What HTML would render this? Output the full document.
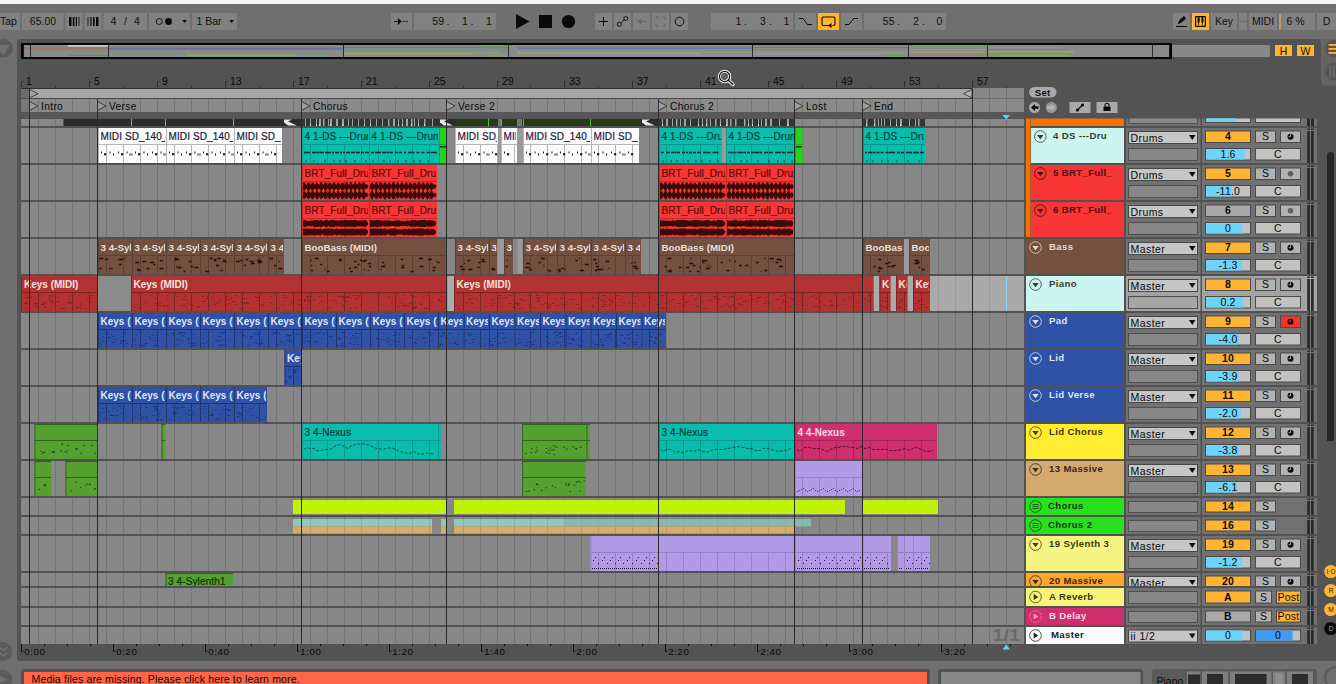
<!DOCTYPE html>
<html><head><meta charset="utf-8"><title>Arrangement</title>
<style>html,body{margin:0;padding:0;background:#6f6f6f;overflow:hidden}svg{display:block}text{font-family:"Liberation Sans",sans-serif}</style>
</head><body>
<svg width="1336" height="684" viewBox="0 0 1336 684" shape-rendering="auto">
<rect x="0" y="0" width="1336" height="684" fill="#6f6f6f"/>
<rect x="0" y="0" width="1336" height="4" fill="#f6f6f6"/>
<path d="M17 658V43a4 4 0 0 1 4-4H1336V661H20a3 3 0 0 1-3-3z" fill="#535353"/>
<path d="M1321 39h15v46.500h-11a4 4 0 0 1-4-4z" fill="#646464"/>
<path d="M1317 39a4 4 0 0 1 4 4v-4z" fill="#646464"/>
<rect x="0" y="13" width="20" height="17" fill="#818181"/>
<text x="0" y="25" font-size="10.5" fill="#111" font-weight="normal" text-anchor="start">Tap</text>
<rect x="22" y="13" width="41.5" height="17" fill="#818181"/>
<text x="43" y="25" font-size="10.5" fill="#111" font-weight="normal" text-anchor="middle">65.00</text>
<rect x="65.5" y="13" width="17" height="17" fill="#818181"/>
<rect x="84.5" y="13" width="17" height="17" fill="#818181"/>
<rect x="69" y="17" width="2.5" height="9" fill="#0a0a0a"/>
<rect x="72.8" y="17" width="1.6" height="9" fill="#0a0a0a"/>
<rect x="75.8" y="17" width="1.2" height="9" fill="#0a0a0a"/>
<rect x="78.6" y="17" width="0.8" height="9" fill="#0a0a0a"/>
<rect x="87.6" y="17" width="0.8" height="9" fill="#0a0a0a"/>
<rect x="90.4" y="17" width="1.2" height="9" fill="#0a0a0a"/>
<rect x="93" y="17" width="1.6" height="9" fill="#0a0a0a"/>
<rect x="96" y="17" width="2.5" height="9" fill="#0a0a0a"/>
<rect x="103.5" y="13" width="43.5" height="17" fill="#818181"/>
<text x="113.5" y="25" font-size="10.5" fill="#111" font-weight="normal" text-anchor="middle">4</text>
<text x="125.5" y="25" font-size="10.5" fill="#111" font-weight="normal" text-anchor="middle">/</text>
<text x="137" y="25" font-size="10.5" fill="#111" font-weight="normal" text-anchor="middle">4</text>
<rect x="149" y="13" width="41" height="17" fill="#818181"/>
<circle cx="159.3" cy="21.5" r="3" fill="none" stroke="#0a0a0a" stroke-width="0.9"/><circle cx="168.5" cy="21.5" r="3.4" fill="#0a0a0a"/>
<path d="M182.3 20h4.6l-2.3 3z" fill="#0a0a0a"/>
<rect x="192" y="13" width="45" height="17" fill="#818181"/>
<text x="196.5" y="25" font-size="10.5" fill="#111" font-weight="normal" text-anchor="start">1 Bar</text>
<path d="M229.3 20h4.6l-2.3 3z" fill="#0a0a0a"/>
<rect x="391" y="13" width="21" height="17" fill="#818181"/>
<path d="M394 21.5h6M398 18.5l3 3l-3 3" stroke="#0a0a0a" stroke-width="1" fill="none"/><path d="M398 18.3l3.6 3.2l-3.6 3.2z" fill="#0a0a0a"/><path d="M403 21.5h2M406 21.5h2" stroke="#0a0a0a" stroke-width="0.8"/>
<rect x="414" y="13" width="82" height="17" fill="#818181"/>
<text x="444" y="25" font-size="10.5" fill="#111" font-weight="normal" text-anchor="end">59</text>
<text x="448" y="25" font-size="10.5" fill="#111" font-weight="normal" text-anchor="middle">.</text>
<text x="465" y="25" font-size="10.5" fill="#111" font-weight="normal" text-anchor="middle">1</text>
<text x="472" y="25" font-size="10.5" fill="#111" font-weight="normal" text-anchor="middle">.</text>
<text x="489" y="25" font-size="10.5" fill="#111" font-weight="normal" text-anchor="middle">1</text>
<path d="M516 14v15l13.5-7.5z" fill="#0a0a0a"/>
<rect x="539" y="15" width="13" height="13" fill="#0a0a0a"/>
<circle cx="568.5" cy="21.5" r="6.6" fill="#0a0a0a"/>
<rect x="595" y="13" width="17" height="17" fill="#818181"/>
<rect x="614" y="13" width="17" height="17" fill="#818181"/>
<rect x="633" y="13" width="17" height="17" fill="#818181"/>
<rect x="652" y="13" width="17" height="17" fill="#818181"/>
<rect x="671" y="13" width="17" height="17" fill="#818181"/>
<path d="M599 21.5h9M603.5 17v9" stroke="#0a0a0a" stroke-width="1" fill="none"/>
<circle cx="619.3" cy="24.3" r="2" fill="none" stroke="#0a0a0a" stroke-width="0.9"/><circle cx="625.8" cy="18.5" r="2" fill="none" stroke="#0a0a0a" stroke-width="0.9"/><path d="M620.7 22.8l3.6-3" stroke="#0a0a0a" stroke-width="0.9"/>
<path d="M638 21.5h8" stroke="#686868" stroke-width="1"/><path d="M637.3 21.5l4-3v6z" fill="#686868"/>
<path d="M656 19.5v-2.5h2.5M662.5 17h2.5v2.5M665 23.5v2.500h-2.5M658.500 26h-2.5v-2.500" stroke="#5f5f5f" stroke-width="0.9" fill="none"/>
<circle cx="679.5" cy="21.500" r="4.300" fill="none" stroke="#0a0a0a" stroke-width="0.9"/>
<rect x="711" y="13" width="82" height="17" fill="#818181"/>
<text x="738.5" y="25" font-size="10.5" fill="#111" font-weight="normal" text-anchor="middle">1</text>
<text x="745.5" y="25" font-size="10.5" fill="#111" font-weight="normal" text-anchor="middle">.</text>
<text x="763" y="25" font-size="10.5" fill="#111" font-weight="normal" text-anchor="middle">3</text>
<text x="770.5" y="25" font-size="10.5" fill="#111" font-weight="normal" text-anchor="middle">.</text>
<text x="786.5" y="25" font-size="10.5" fill="#111" font-weight="normal" text-anchor="middle">1</text>
<rect x="795" y="13" width="21" height="17" fill="#818181"/>
<path d="M799 18.5h4l4.500 6h4.500" stroke="#0a0a0a" stroke-width="1" fill="none"/>
<rect x="818" y="13" width="21" height="17" fill="#ffb532"/>
<path d="M830 25.5h-6.500a1.500 1.500 0 0 1-1.500-1.500v-5.500a1.500 1.500 0 0 1 1.500-1.500h10a1.500 1.500 0 0 1 1.500 1.500v5.500a1.500 1.500 0 0 1-1.500 1.500h-1" stroke="#0a0a0a" stroke-width="1.100" fill="none"/><path d="M828 25.500l3.500-2.500v5z" fill="#0a0a0a"/>
<rect x="841" y="13" width="21" height="17" fill="#818181"/>
<path d="M845 24.500h4l4.500-6h4.500" stroke="#0a0a0a" stroke-width="1" fill="none"/>
<rect x="864" y="13" width="82" height="17" fill="#818181"/>
<text x="894.5" y="25" font-size="10.5" fill="#111" font-weight="normal" text-anchor="end">55</text>
<text x="898.5" y="25" font-size="10.5" fill="#111" font-weight="normal" text-anchor="middle">.</text>
<text x="916" y="25" font-size="10.5" fill="#111" font-weight="normal" text-anchor="middle">2</text>
<text x="923.5" y="25" font-size="10.5" fill="#111" font-weight="normal" text-anchor="middle">.</text>
<text x="939.5" y="25" font-size="10.5" fill="#111" font-weight="normal" text-anchor="middle">0</text>
<rect x="1173" y="13" width="17" height="17" fill="#818181"/>
<path d="M1177.500 24.500l2-4.500l4.500-4l2 2.500l-4.500 4z" fill="#0a0a0a"/><path d="M1176 26.500h11" stroke="#0a0a0a" stroke-width="1"/>
<rect x="1192" y="13" width="17" height="17" fill="#ffb532"/>
<rect x="1195" y="16" width="11" height="11" rx="1" fill="#0a0a0a"/>
<rect x="1196.2" y="17.2" width="8.6" height="8.6" fill="#ffb532"/>
<rect x="1197.6" y="17.2" width="2" height="5.4" fill="#0a0a0a"/>
<rect x="1201.4" y="17.2" width="2" height="5.4" fill="#0a0a0a"/>
<rect x="1198.3" y="22" width="0.7" height="3.8" fill="#0a0a0a"/>
<rect x="1202.1" y="22" width="0.7" height="3.8" fill="#0a0a0a"/>
<rect x="1211" y="13" width="26" height="17" fill="#818181"/>
<text x="1224" y="25" font-size="10.5" fill="#111" font-weight="normal" text-anchor="middle">Key</text>
<rect x="1239" y="13" width="8" height="8" fill="#818181"/>
<rect x="1239" y="22" width="8" height="8" fill="#818181"/>
<rect x="1249" y="13" width="28" height="17" fill="#818181"/>
<text x="1263" y="25" font-size="10.5" fill="#111" font-weight="normal" text-anchor="middle">MIDI</text>
<rect x="1279" y="13" width="36" height="17" fill="#818181"/>
<rect x="1279.5" y="14" width="1" height="15" fill="#ffb532"/>
<text x="1295.5" y="25" font-size="10.5" fill="#111" font-weight="normal" text-anchor="middle">6 %</text>
<rect x="1317" y="13" width="19" height="17" fill="#818181"/>
<text x="1326.5" y="25" font-size="10.5" fill="#111" font-weight="normal" text-anchor="middle">D</text>
<rect x="21" y="43" width="1151" height="16" fill="#000"/>
<rect x="23" y="45" width="1147" height="12" fill="#8a8a8a"/>
<rect x="68" y="45" width="40" height="1.6" fill="#d0d0d0"/>
<rect x="23" y="47.65" width="85" height="0.7" fill="#c25050" fill-opacity="0.85"/>
<rect x="35" y="49.65" width="73" height="0.7" fill="#5aa02e" fill-opacity="0.85"/>
<rect x="68" y="55.15" width="40" height="0.7" fill="#c25050" fill-opacity="0.85"/>
<rect x="108" y="47.65" width="235" height="0.7" fill="#6a62b0" fill-opacity="0.85"/>
<rect x="108" y="48.65" width="235" height="0.7" fill="#3a5aa8" fill-opacity="0.85"/>
<rect x="180" y="53.65" width="120" height="0.7" fill="#6ab04a" fill-opacity="0.85"/>
<rect x="178" y="55.65" width="152" height="0.7" fill="#2ec0b0" fill-opacity="0.85"/>
<rect x="186" y="54.65" width="109" height="0.7" fill="#c0c040" fill-opacity="0.85"/>
<rect x="343" y="47.15" width="165" height="0.7" fill="#c24848" fill-opacity="0.85"/>
<rect x="343" y="48.65" width="165" height="0.7" fill="#888" fill-opacity="0.85"/>
<rect x="343" y="50.65" width="162" height="0.7" fill="#30b8b0" fill-opacity="0.85"/>
<rect x="343" y="52.65" width="157" height="0.7" fill="#a8c030" fill-opacity="0.85"/>
<rect x="343" y="53.65" width="127" height="0.7" fill="#c8a060" fill-opacity="0.85"/>
<rect x="480" y="46.65" width="28" height="0.7" fill="#58b838" fill-opacity="0.85"/>
<rect x="488" y="55.65" width="20" height="0.7" fill="#a8c030" fill-opacity="0.85"/>
<rect x="516" y="46.95" width="236" height="0.7" fill="#6a6ab0" fill-opacity="0.85"/>
<rect x="518" y="48.15" width="234" height="0.7" fill="#4a68b0" fill-opacity="0.85"/>
<rect x="518" y="51.65" width="234" height="0.7" fill="#a8c030" fill-opacity="0.85"/>
<rect x="518" y="53.15" width="182" height="0.7" fill="#d0a868" fill-opacity="0.85"/>
<rect x="560" y="54.65" width="192" height="0.7" fill="#b090d8" fill-opacity="0.85"/>
<rect x="752" y="47.15" width="156" height="0.7" fill="#c24848" fill-opacity="0.85"/>
<rect x="752" y="49.15" width="156" height="0.7" fill="#d06060" fill-opacity="0.85"/>
<rect x="752" y="51.15" width="156" height="0.7" fill="#30b8b0" fill-opacity="0.85"/>
<rect x="752" y="52.65" width="153" height="0.7" fill="#a8c030" fill-opacity="0.85"/>
<rect x="752" y="54.15" width="128" height="0.7" fill="#b090d8" fill-opacity="0.85"/>
<rect x="890" y="56.15" width="18" height="0.7" fill="#58b838" fill-opacity="0.85"/>
<rect x="908" y="46.65" width="79" height="0.7" fill="#58b838" fill-opacity="0.85"/>
<rect x="908" y="49.15" width="79" height="0.7" fill="#b090d8" fill-opacity="0.85"/>
<rect x="908" y="51.65" width="77" height="0.7" fill="#c8c030" fill-opacity="0.85"/>
<rect x="908" y="53.65" width="67" height="0.7" fill="#c080a0" fill-opacity="0.85"/>
<rect x="987" y="46.95" width="73" height="0.7" fill="#60b0b0" fill-opacity="0.85"/>
<rect x="987" y="49.15" width="78" height="0.7" fill="#c05858" fill-opacity="0.85"/>
<rect x="987" y="51.65" width="87" height="0.7" fill="#c8c030" fill-opacity="0.85"/>
<rect x="987" y="54.15" width="85" height="0.7" fill="#58b838" fill-opacity="0.85"/>
<rect x="1000" y="55.65" width="70" height="0.7" fill="#d0a868" fill-opacity="0.85"/>
<rect x="30" y="45" width="1" height="12" fill="#2a2a2a"/>
<rect x="108" y="45" width="1" height="12" fill="#2a2a2a"/>
<rect x="343" y="45" width="1" height="12" fill="#2a2a2a"/>
<rect x="508" y="45" width="1" height="12" fill="#2a2a2a"/>
<rect x="752" y="45" width="1" height="12" fill="#2a2a2a"/>
<rect x="908" y="45" width="1" height="12" fill="#2a2a2a"/>
<rect x="987" y="45" width="1" height="12" fill="#2a2a2a"/>
<rect x="1152" y="45" width="1" height="12" fill="#2a2a2a"/>
<rect x="23" y="45" width="0.8" height="12" fill="#000"/>
<rect x="1169.2" y="45" width="0.8" height="12" fill="#000"/>
<rect x="1172" y="45" width="98" height="12" fill="#888888"/>
<rect x="1275" y="45" width="17" height="11" fill="#ffb532"/>
<text x="1283.5" y="54.5" font-size="10.5" fill="#111" font-weight="normal" text-anchor="middle">H</text>
<rect x="1297" y="45" width="17" height="11" fill="#ffb532"/>
<text x="1305.5" y="54.5" font-size="10.5" fill="#111" font-weight="normal" text-anchor="middle">W</text>
<path d="M21.5 87.500v-6h1.800" stroke="#2e2e2e" stroke-width="1" fill="none"/>
<text x="26" y="85.3" font-size="10.5" fill="#0a0a0a" font-weight="normal" text-anchor="start">1</text>
<path d="M89.5 87.500v-6h1.800" stroke="#2e2e2e" stroke-width="1" fill="none"/>
<text x="94" y="85.3" font-size="10.5" fill="#0a0a0a" font-weight="normal" text-anchor="start">5</text>
<path d="M157.5 87.500v-6h1.800" stroke="#2e2e2e" stroke-width="1" fill="none"/>
<text x="162" y="85.3" font-size="10.5" fill="#0a0a0a" font-weight="normal" text-anchor="start">9</text>
<path d="M225.5 87.500v-6h1.800" stroke="#2e2e2e" stroke-width="1" fill="none"/>
<text x="230" y="85.3" font-size="10.5" fill="#0a0a0a" font-weight="normal" text-anchor="start">13</text>
<path d="M293.5 87.500v-6h1.800" stroke="#2e2e2e" stroke-width="1" fill="none"/>
<text x="298" y="85.3" font-size="10.5" fill="#0a0a0a" font-weight="normal" text-anchor="start">17</text>
<path d="M361.5 87.500v-6h1.800" stroke="#2e2e2e" stroke-width="1" fill="none"/>
<text x="366" y="85.3" font-size="10.5" fill="#0a0a0a" font-weight="normal" text-anchor="start">21</text>
<path d="M429.5 87.500v-6h1.800" stroke="#2e2e2e" stroke-width="1" fill="none"/>
<text x="434" y="85.3" font-size="10.5" fill="#0a0a0a" font-weight="normal" text-anchor="start">25</text>
<path d="M497.5 87.500v-6h1.800" stroke="#2e2e2e" stroke-width="1" fill="none"/>
<text x="502" y="85.3" font-size="10.5" fill="#0a0a0a" font-weight="normal" text-anchor="start">29</text>
<path d="M564.5 87.500v-6h1.800" stroke="#2e2e2e" stroke-width="1" fill="none"/>
<text x="569" y="85.3" font-size="10.5" fill="#0a0a0a" font-weight="normal" text-anchor="start">33</text>
<path d="M632.5 87.500v-6h1.800" stroke="#2e2e2e" stroke-width="1" fill="none"/>
<text x="637" y="85.3" font-size="10.5" fill="#0a0a0a" font-weight="normal" text-anchor="start">37</text>
<path d="M700.5 87.500v-6h1.800" stroke="#2e2e2e" stroke-width="1" fill="none"/>
<text x="705" y="85.3" font-size="10.5" fill="#0a0a0a" font-weight="normal" text-anchor="start">41</text>
<path d="M768.5 87.500v-6h1.800" stroke="#2e2e2e" stroke-width="1" fill="none"/>
<text x="773" y="85.3" font-size="10.5" fill="#0a0a0a" font-weight="normal" text-anchor="start">45</text>
<path d="M836.5 87.500v-6h1.800" stroke="#2e2e2e" stroke-width="1" fill="none"/>
<text x="841" y="85.3" font-size="10.5" fill="#0a0a0a" font-weight="normal" text-anchor="start">49</text>
<path d="M904.5 87.500v-6h1.800" stroke="#2e2e2e" stroke-width="1" fill="none"/>
<text x="909" y="85.3" font-size="10.5" fill="#0a0a0a" font-weight="normal" text-anchor="start">53</text>
<path d="M972.5 87.500v-6h1.800" stroke="#2e2e2e" stroke-width="1" fill="none"/>
<text x="977" y="85.3" font-size="10.5" fill="#0a0a0a" font-weight="normal" text-anchor="start">57</text>
<rect x="55" y="86" width="1" height="1.5" fill="#2a2a2a"/>
<rect x="123" y="86" width="1" height="1.5" fill="#2a2a2a"/>
<rect x="191" y="86" width="1" height="1.5" fill="#2a2a2a"/>
<rect x="259" y="86" width="1" height="1.5" fill="#2a2a2a"/>
<rect x="327" y="86" width="1" height="1.5" fill="#2a2a2a"/>
<rect x="395" y="86" width="1" height="1.5" fill="#2a2a2a"/>
<rect x="463" y="86" width="1" height="1.5" fill="#2a2a2a"/>
<rect x="530" y="86" width="1" height="1.5" fill="#2a2a2a"/>
<rect x="598" y="86" width="1" height="1.5" fill="#2a2a2a"/>
<rect x="666" y="86" width="1" height="1.5" fill="#2a2a2a"/>
<rect x="734" y="86" width="1" height="1.5" fill="#2a2a2a"/>
<rect x="802" y="86" width="1" height="1.5" fill="#2a2a2a"/>
<rect x="870" y="86" width="1" height="1.5" fill="#2a2a2a"/>
<rect x="938" y="86" width="1" height="1.5" fill="#2a2a2a"/>
<rect x="1006" y="86" width="1" height="1.5" fill="#2a2a2a"/>
<rect x="21" y="88" width="951.5" height="1" fill="#2e2e2e"/>
<rect x="21" y="89" width="8.5" height="9.5" fill="#6c6c6c"/>
<rect x="29.5" y="89" width="943" height="9.5" fill="#a6a6a6"/>
<rect x="972.5" y="88" width="51.5" height="10.5" fill="#878787"/>
<rect x="21" y="98" width="951.5" height="1" fill="#4a4a4a"/>
<rect x="21" y="99" width="1003" height="13" fill="#8a8a8a"/>
<rect x="21" y="99" width="8.5" height="13" fill="#787878"/>
<rect x="38" y="99" width="1" height="13" fill="#757575"/>
<rect x="55" y="99" width="1" height="13" fill="#757575"/>
<rect x="72" y="99" width="1" height="13" fill="#757575"/>
<rect x="89" y="99" width="1" height="13" fill="#757575"/>
<rect x="106" y="99" width="1" height="13" fill="#757575"/>
<rect x="123" y="99" width="1" height="13" fill="#757575"/>
<rect x="140" y="99" width="1" height="13" fill="#757575"/>
<rect x="157" y="99" width="1" height="13" fill="#757575"/>
<rect x="174" y="99" width="1" height="13" fill="#757575"/>
<rect x="191" y="99" width="1" height="13" fill="#757575"/>
<rect x="208" y="99" width="1" height="13" fill="#757575"/>
<rect x="225" y="99" width="1" height="13" fill="#757575"/>
<rect x="242" y="99" width="1" height="13" fill="#757575"/>
<rect x="259" y="99" width="1" height="13" fill="#757575"/>
<rect x="276" y="99" width="1" height="13" fill="#757575"/>
<rect x="293" y="99" width="1" height="13" fill="#757575"/>
<rect x="310" y="99" width="1" height="13" fill="#757575"/>
<rect x="327" y="99" width="1" height="13" fill="#757575"/>
<rect x="344" y="99" width="1" height="13" fill="#757575"/>
<rect x="361" y="99" width="1" height="13" fill="#757575"/>
<rect x="378" y="99" width="1" height="13" fill="#757575"/>
<rect x="395" y="99" width="1" height="13" fill="#757575"/>
<rect x="412" y="99" width="1" height="13" fill="#757575"/>
<rect x="429" y="99" width="1" height="13" fill="#757575"/>
<rect x="446" y="99" width="1" height="13" fill="#757575"/>
<rect x="463" y="99" width="1" height="13" fill="#757575"/>
<rect x="480" y="99" width="1" height="13" fill="#757575"/>
<rect x="497" y="99" width="1" height="13" fill="#757575"/>
<rect x="514" y="99" width="1" height="13" fill="#757575"/>
<rect x="530" y="99" width="1" height="13" fill="#757575"/>
<rect x="547" y="99" width="1" height="13" fill="#757575"/>
<rect x="564" y="99" width="1" height="13" fill="#757575"/>
<rect x="581" y="99" width="1" height="13" fill="#757575"/>
<rect x="598" y="99" width="1" height="13" fill="#757575"/>
<rect x="615" y="99" width="1" height="13" fill="#757575"/>
<rect x="632" y="99" width="1" height="13" fill="#757575"/>
<rect x="649" y="99" width="1" height="13" fill="#757575"/>
<rect x="666" y="99" width="1" height="13" fill="#757575"/>
<rect x="683" y="99" width="1" height="13" fill="#757575"/>
<rect x="700" y="99" width="1" height="13" fill="#757575"/>
<rect x="717" y="99" width="1" height="13" fill="#757575"/>
<rect x="734" y="99" width="1" height="13" fill="#757575"/>
<rect x="751" y="99" width="1" height="13" fill="#757575"/>
<rect x="768" y="99" width="1" height="13" fill="#757575"/>
<rect x="785" y="99" width="1" height="13" fill="#757575"/>
<rect x="802" y="99" width="1" height="13" fill="#757575"/>
<rect x="819" y="99" width="1" height="13" fill="#757575"/>
<rect x="836" y="99" width="1" height="13" fill="#757575"/>
<rect x="853" y="99" width="1" height="13" fill="#757575"/>
<rect x="870" y="99" width="1" height="13" fill="#757575"/>
<rect x="887" y="99" width="1" height="13" fill="#757575"/>
<rect x="904" y="99" width="1" height="13" fill="#757575"/>
<rect x="921" y="99" width="1" height="13" fill="#757575"/>
<rect x="938" y="99" width="1" height="13" fill="#757575"/>
<rect x="955" y="99" width="1" height="13" fill="#757575"/>
<rect x="972" y="99" width="1" height="13" fill="#757575"/>
<rect x="989" y="99" width="1" height="13" fill="#757575"/>
<rect x="989" y="88" width="1" height="10.5" fill="#757575"/>
<rect x="1006" y="99" width="1" height="13" fill="#757575"/>
<rect x="1006" y="88" width="1" height="10.5" fill="#757575"/>
<rect x="21" y="112" width="1003" height="6.5" fill="#575757"/>
<rect x="21" y="118.5" width="1003" height="525.5" fill="#515151"/>
<rect x="21" y="119" width="1003" height="7" fill="#878787"/>
<rect x="21" y="128" width="1003" height="35" fill="#878787"/>
<rect x="21" y="165" width="1003" height="35" fill="#878787"/>
<rect x="21" y="202" width="1003" height="35" fill="#878787"/>
<rect x="21" y="239" width="1003" height="35" fill="#878787"/>
<rect x="21" y="276" width="1003" height="35" fill="#878787"/>
<rect x="21" y="313" width="1003" height="35" fill="#878787"/>
<rect x="21" y="350" width="1003" height="35" fill="#878787"/>
<rect x="21" y="387" width="1003" height="35" fill="#878787"/>
<rect x="21" y="424" width="1003" height="35" fill="#878787"/>
<rect x="21" y="461" width="1003" height="35" fill="#878787"/>
<rect x="21" y="498" width="1003" height="17" fill="#878787"/>
<rect x="21" y="517" width="1003" height="17" fill="#878787"/>
<rect x="21" y="536" width="1003" height="35" fill="#878787"/>
<rect x="21" y="573" width="1003" height="13" fill="#878787"/>
<rect x="21" y="588" width="1003" height="18" fill="#878787"/>
<rect x="21" y="608" width="1003" height="17" fill="#878787"/>
<rect x="21" y="627" width="1003" height="17" fill="#878787"/>
<rect x="930" y="276" width="94" height="35" fill="#a9a9a9"/>
<rect x="38" y="119" width="1" height="7" fill="#757575"/>
<rect x="38" y="128" width="1" height="35" fill="#757575"/>
<rect x="38" y="165" width="1" height="35" fill="#757575"/>
<rect x="38" y="202" width="1" height="35" fill="#757575"/>
<rect x="38" y="239" width="1" height="35" fill="#757575"/>
<rect x="38" y="276" width="1" height="35" fill="#757575"/>
<rect x="38" y="313" width="1" height="35" fill="#757575"/>
<rect x="38" y="350" width="1" height="35" fill="#757575"/>
<rect x="38" y="387" width="1" height="35" fill="#757575"/>
<rect x="38" y="424" width="1" height="35" fill="#757575"/>
<rect x="38" y="461" width="1" height="35" fill="#757575"/>
<rect x="38" y="498" width="1" height="17" fill="#757575"/>
<rect x="38" y="517" width="1" height="17" fill="#757575"/>
<rect x="38" y="536" width="1" height="35" fill="#757575"/>
<rect x="38" y="573" width="1" height="13" fill="#757575"/>
<rect x="38" y="588" width="1" height="18" fill="#757575"/>
<rect x="38" y="608" width="1" height="17" fill="#757575"/>
<rect x="38" y="627" width="1" height="17" fill="#757575"/>
<rect x="55" y="119" width="1" height="7" fill="#757575"/>
<rect x="55" y="128" width="1" height="35" fill="#757575"/>
<rect x="55" y="165" width="1" height="35" fill="#757575"/>
<rect x="55" y="202" width="1" height="35" fill="#757575"/>
<rect x="55" y="239" width="1" height="35" fill="#757575"/>
<rect x="55" y="276" width="1" height="35" fill="#757575"/>
<rect x="55" y="313" width="1" height="35" fill="#757575"/>
<rect x="55" y="350" width="1" height="35" fill="#757575"/>
<rect x="55" y="387" width="1" height="35" fill="#757575"/>
<rect x="55" y="424" width="1" height="35" fill="#757575"/>
<rect x="55" y="461" width="1" height="35" fill="#757575"/>
<rect x="55" y="498" width="1" height="17" fill="#757575"/>
<rect x="55" y="517" width="1" height="17" fill="#757575"/>
<rect x="55" y="536" width="1" height="35" fill="#757575"/>
<rect x="55" y="573" width="1" height="13" fill="#757575"/>
<rect x="55" y="588" width="1" height="18" fill="#757575"/>
<rect x="55" y="608" width="1" height="17" fill="#757575"/>
<rect x="55" y="627" width="1" height="17" fill="#757575"/>
<rect x="72" y="119" width="1" height="7" fill="#757575"/>
<rect x="72" y="128" width="1" height="35" fill="#757575"/>
<rect x="72" y="165" width="1" height="35" fill="#757575"/>
<rect x="72" y="202" width="1" height="35" fill="#757575"/>
<rect x="72" y="239" width="1" height="35" fill="#757575"/>
<rect x="72" y="276" width="1" height="35" fill="#757575"/>
<rect x="72" y="313" width="1" height="35" fill="#757575"/>
<rect x="72" y="350" width="1" height="35" fill="#757575"/>
<rect x="72" y="387" width="1" height="35" fill="#757575"/>
<rect x="72" y="424" width="1" height="35" fill="#757575"/>
<rect x="72" y="461" width="1" height="35" fill="#757575"/>
<rect x="72" y="498" width="1" height="17" fill="#757575"/>
<rect x="72" y="517" width="1" height="17" fill="#757575"/>
<rect x="72" y="536" width="1" height="35" fill="#757575"/>
<rect x="72" y="573" width="1" height="13" fill="#757575"/>
<rect x="72" y="588" width="1" height="18" fill="#757575"/>
<rect x="72" y="608" width="1" height="17" fill="#757575"/>
<rect x="72" y="627" width="1" height="17" fill="#757575"/>
<rect x="89" y="119" width="1" height="7" fill="#757575"/>
<rect x="89" y="128" width="1" height="35" fill="#757575"/>
<rect x="89" y="165" width="1" height="35" fill="#757575"/>
<rect x="89" y="202" width="1" height="35" fill="#757575"/>
<rect x="89" y="239" width="1" height="35" fill="#757575"/>
<rect x="89" y="276" width="1" height="35" fill="#757575"/>
<rect x="89" y="313" width="1" height="35" fill="#757575"/>
<rect x="89" y="350" width="1" height="35" fill="#757575"/>
<rect x="89" y="387" width="1" height="35" fill="#757575"/>
<rect x="89" y="424" width="1" height="35" fill="#757575"/>
<rect x="89" y="461" width="1" height="35" fill="#757575"/>
<rect x="89" y="498" width="1" height="17" fill="#757575"/>
<rect x="89" y="517" width="1" height="17" fill="#757575"/>
<rect x="89" y="536" width="1" height="35" fill="#757575"/>
<rect x="89" y="573" width="1" height="13" fill="#757575"/>
<rect x="89" y="588" width="1" height="18" fill="#757575"/>
<rect x="89" y="608" width="1" height="17" fill="#757575"/>
<rect x="89" y="627" width="1" height="17" fill="#757575"/>
<rect x="106" y="119" width="1" height="7" fill="#757575"/>
<rect x="106" y="128" width="1" height="35" fill="#757575"/>
<rect x="106" y="165" width="1" height="35" fill="#757575"/>
<rect x="106" y="202" width="1" height="35" fill="#757575"/>
<rect x="106" y="239" width="1" height="35" fill="#757575"/>
<rect x="106" y="276" width="1" height="35" fill="#757575"/>
<rect x="106" y="313" width="1" height="35" fill="#757575"/>
<rect x="106" y="350" width="1" height="35" fill="#757575"/>
<rect x="106" y="387" width="1" height="35" fill="#757575"/>
<rect x="106" y="424" width="1" height="35" fill="#757575"/>
<rect x="106" y="461" width="1" height="35" fill="#757575"/>
<rect x="106" y="498" width="1" height="17" fill="#757575"/>
<rect x="106" y="517" width="1" height="17" fill="#757575"/>
<rect x="106" y="536" width="1" height="35" fill="#757575"/>
<rect x="106" y="573" width="1" height="13" fill="#757575"/>
<rect x="106" y="588" width="1" height="18" fill="#757575"/>
<rect x="106" y="608" width="1" height="17" fill="#757575"/>
<rect x="106" y="627" width="1" height="17" fill="#757575"/>
<rect x="123" y="119" width="1" height="7" fill="#757575"/>
<rect x="123" y="128" width="1" height="35" fill="#757575"/>
<rect x="123" y="165" width="1" height="35" fill="#757575"/>
<rect x="123" y="202" width="1" height="35" fill="#757575"/>
<rect x="123" y="239" width="1" height="35" fill="#757575"/>
<rect x="123" y="276" width="1" height="35" fill="#757575"/>
<rect x="123" y="313" width="1" height="35" fill="#757575"/>
<rect x="123" y="350" width="1" height="35" fill="#757575"/>
<rect x="123" y="387" width="1" height="35" fill="#757575"/>
<rect x="123" y="424" width="1" height="35" fill="#757575"/>
<rect x="123" y="461" width="1" height="35" fill="#757575"/>
<rect x="123" y="498" width="1" height="17" fill="#757575"/>
<rect x="123" y="517" width="1" height="17" fill="#757575"/>
<rect x="123" y="536" width="1" height="35" fill="#757575"/>
<rect x="123" y="573" width="1" height="13" fill="#757575"/>
<rect x="123" y="588" width="1" height="18" fill="#757575"/>
<rect x="123" y="608" width="1" height="17" fill="#757575"/>
<rect x="123" y="627" width="1" height="17" fill="#757575"/>
<rect x="140" y="119" width="1" height="7" fill="#757575"/>
<rect x="140" y="128" width="1" height="35" fill="#757575"/>
<rect x="140" y="165" width="1" height="35" fill="#757575"/>
<rect x="140" y="202" width="1" height="35" fill="#757575"/>
<rect x="140" y="239" width="1" height="35" fill="#757575"/>
<rect x="140" y="276" width="1" height="35" fill="#757575"/>
<rect x="140" y="313" width="1" height="35" fill="#757575"/>
<rect x="140" y="350" width="1" height="35" fill="#757575"/>
<rect x="140" y="387" width="1" height="35" fill="#757575"/>
<rect x="140" y="424" width="1" height="35" fill="#757575"/>
<rect x="140" y="461" width="1" height="35" fill="#757575"/>
<rect x="140" y="498" width="1" height="17" fill="#757575"/>
<rect x="140" y="517" width="1" height="17" fill="#757575"/>
<rect x="140" y="536" width="1" height="35" fill="#757575"/>
<rect x="140" y="573" width="1" height="13" fill="#757575"/>
<rect x="140" y="588" width="1" height="18" fill="#757575"/>
<rect x="140" y="608" width="1" height="17" fill="#757575"/>
<rect x="140" y="627" width="1" height="17" fill="#757575"/>
<rect x="157" y="119" width="1" height="7" fill="#757575"/>
<rect x="157" y="128" width="1" height="35" fill="#757575"/>
<rect x="157" y="165" width="1" height="35" fill="#757575"/>
<rect x="157" y="202" width="1" height="35" fill="#757575"/>
<rect x="157" y="239" width="1" height="35" fill="#757575"/>
<rect x="157" y="276" width="1" height="35" fill="#757575"/>
<rect x="157" y="313" width="1" height="35" fill="#757575"/>
<rect x="157" y="350" width="1" height="35" fill="#757575"/>
<rect x="157" y="387" width="1" height="35" fill="#757575"/>
<rect x="157" y="424" width="1" height="35" fill="#757575"/>
<rect x="157" y="461" width="1" height="35" fill="#757575"/>
<rect x="157" y="498" width="1" height="17" fill="#757575"/>
<rect x="157" y="517" width="1" height="17" fill="#757575"/>
<rect x="157" y="536" width="1" height="35" fill="#757575"/>
<rect x="157" y="573" width="1" height="13" fill="#757575"/>
<rect x="157" y="588" width="1" height="18" fill="#757575"/>
<rect x="157" y="608" width="1" height="17" fill="#757575"/>
<rect x="157" y="627" width="1" height="17" fill="#757575"/>
<rect x="174" y="119" width="1" height="7" fill="#757575"/>
<rect x="174" y="128" width="1" height="35" fill="#757575"/>
<rect x="174" y="165" width="1" height="35" fill="#757575"/>
<rect x="174" y="202" width="1" height="35" fill="#757575"/>
<rect x="174" y="239" width="1" height="35" fill="#757575"/>
<rect x="174" y="276" width="1" height="35" fill="#757575"/>
<rect x="174" y="313" width="1" height="35" fill="#757575"/>
<rect x="174" y="350" width="1" height="35" fill="#757575"/>
<rect x="174" y="387" width="1" height="35" fill="#757575"/>
<rect x="174" y="424" width="1" height="35" fill="#757575"/>
<rect x="174" y="461" width="1" height="35" fill="#757575"/>
<rect x="174" y="498" width="1" height="17" fill="#757575"/>
<rect x="174" y="517" width="1" height="17" fill="#757575"/>
<rect x="174" y="536" width="1" height="35" fill="#757575"/>
<rect x="174" y="573" width="1" height="13" fill="#757575"/>
<rect x="174" y="588" width="1" height="18" fill="#757575"/>
<rect x="174" y="608" width="1" height="17" fill="#757575"/>
<rect x="174" y="627" width="1" height="17" fill="#757575"/>
<rect x="191" y="119" width="1" height="7" fill="#757575"/>
<rect x="191" y="128" width="1" height="35" fill="#757575"/>
<rect x="191" y="165" width="1" height="35" fill="#757575"/>
<rect x="191" y="202" width="1" height="35" fill="#757575"/>
<rect x="191" y="239" width="1" height="35" fill="#757575"/>
<rect x="191" y="276" width="1" height="35" fill="#757575"/>
<rect x="191" y="313" width="1" height="35" fill="#757575"/>
<rect x="191" y="350" width="1" height="35" fill="#757575"/>
<rect x="191" y="387" width="1" height="35" fill="#757575"/>
<rect x="191" y="424" width="1" height="35" fill="#757575"/>
<rect x="191" y="461" width="1" height="35" fill="#757575"/>
<rect x="191" y="498" width="1" height="17" fill="#757575"/>
<rect x="191" y="517" width="1" height="17" fill="#757575"/>
<rect x="191" y="536" width="1" height="35" fill="#757575"/>
<rect x="191" y="573" width="1" height="13" fill="#757575"/>
<rect x="191" y="588" width="1" height="18" fill="#757575"/>
<rect x="191" y="608" width="1" height="17" fill="#757575"/>
<rect x="191" y="627" width="1" height="17" fill="#757575"/>
<rect x="208" y="119" width="1" height="7" fill="#757575"/>
<rect x="208" y="128" width="1" height="35" fill="#757575"/>
<rect x="208" y="165" width="1" height="35" fill="#757575"/>
<rect x="208" y="202" width="1" height="35" fill="#757575"/>
<rect x="208" y="239" width="1" height="35" fill="#757575"/>
<rect x="208" y="276" width="1" height="35" fill="#757575"/>
<rect x="208" y="313" width="1" height="35" fill="#757575"/>
<rect x="208" y="350" width="1" height="35" fill="#757575"/>
<rect x="208" y="387" width="1" height="35" fill="#757575"/>
<rect x="208" y="424" width="1" height="35" fill="#757575"/>
<rect x="208" y="461" width="1" height="35" fill="#757575"/>
<rect x="208" y="498" width="1" height="17" fill="#757575"/>
<rect x="208" y="517" width="1" height="17" fill="#757575"/>
<rect x="208" y="536" width="1" height="35" fill="#757575"/>
<rect x="208" y="573" width="1" height="13" fill="#757575"/>
<rect x="208" y="588" width="1" height="18" fill="#757575"/>
<rect x="208" y="608" width="1" height="17" fill="#757575"/>
<rect x="208" y="627" width="1" height="17" fill="#757575"/>
<rect x="225" y="119" width="1" height="7" fill="#757575"/>
<rect x="225" y="128" width="1" height="35" fill="#757575"/>
<rect x="225" y="165" width="1" height="35" fill="#757575"/>
<rect x="225" y="202" width="1" height="35" fill="#757575"/>
<rect x="225" y="239" width="1" height="35" fill="#757575"/>
<rect x="225" y="276" width="1" height="35" fill="#757575"/>
<rect x="225" y="313" width="1" height="35" fill="#757575"/>
<rect x="225" y="350" width="1" height="35" fill="#757575"/>
<rect x="225" y="387" width="1" height="35" fill="#757575"/>
<rect x="225" y="424" width="1" height="35" fill="#757575"/>
<rect x="225" y="461" width="1" height="35" fill="#757575"/>
<rect x="225" y="498" width="1" height="17" fill="#757575"/>
<rect x="225" y="517" width="1" height="17" fill="#757575"/>
<rect x="225" y="536" width="1" height="35" fill="#757575"/>
<rect x="225" y="573" width="1" height="13" fill="#757575"/>
<rect x="225" y="588" width="1" height="18" fill="#757575"/>
<rect x="225" y="608" width="1" height="17" fill="#757575"/>
<rect x="225" y="627" width="1" height="17" fill="#757575"/>
<rect x="242" y="119" width="1" height="7" fill="#757575"/>
<rect x="242" y="128" width="1" height="35" fill="#757575"/>
<rect x="242" y="165" width="1" height="35" fill="#757575"/>
<rect x="242" y="202" width="1" height="35" fill="#757575"/>
<rect x="242" y="239" width="1" height="35" fill="#757575"/>
<rect x="242" y="276" width="1" height="35" fill="#757575"/>
<rect x="242" y="313" width="1" height="35" fill="#757575"/>
<rect x="242" y="350" width="1" height="35" fill="#757575"/>
<rect x="242" y="387" width="1" height="35" fill="#757575"/>
<rect x="242" y="424" width="1" height="35" fill="#757575"/>
<rect x="242" y="461" width="1" height="35" fill="#757575"/>
<rect x="242" y="498" width="1" height="17" fill="#757575"/>
<rect x="242" y="517" width="1" height="17" fill="#757575"/>
<rect x="242" y="536" width="1" height="35" fill="#757575"/>
<rect x="242" y="573" width="1" height="13" fill="#757575"/>
<rect x="242" y="588" width="1" height="18" fill="#757575"/>
<rect x="242" y="608" width="1" height="17" fill="#757575"/>
<rect x="242" y="627" width="1" height="17" fill="#757575"/>
<rect x="259" y="119" width="1" height="7" fill="#757575"/>
<rect x="259" y="128" width="1" height="35" fill="#757575"/>
<rect x="259" y="165" width="1" height="35" fill="#757575"/>
<rect x="259" y="202" width="1" height="35" fill="#757575"/>
<rect x="259" y="239" width="1" height="35" fill="#757575"/>
<rect x="259" y="276" width="1" height="35" fill="#757575"/>
<rect x="259" y="313" width="1" height="35" fill="#757575"/>
<rect x="259" y="350" width="1" height="35" fill="#757575"/>
<rect x="259" y="387" width="1" height="35" fill="#757575"/>
<rect x="259" y="424" width="1" height="35" fill="#757575"/>
<rect x="259" y="461" width="1" height="35" fill="#757575"/>
<rect x="259" y="498" width="1" height="17" fill="#757575"/>
<rect x="259" y="517" width="1" height="17" fill="#757575"/>
<rect x="259" y="536" width="1" height="35" fill="#757575"/>
<rect x="259" y="573" width="1" height="13" fill="#757575"/>
<rect x="259" y="588" width="1" height="18" fill="#757575"/>
<rect x="259" y="608" width="1" height="17" fill="#757575"/>
<rect x="259" y="627" width="1" height="17" fill="#757575"/>
<rect x="276" y="119" width="1" height="7" fill="#757575"/>
<rect x="276" y="128" width="1" height="35" fill="#757575"/>
<rect x="276" y="165" width="1" height="35" fill="#757575"/>
<rect x="276" y="202" width="1" height="35" fill="#757575"/>
<rect x="276" y="239" width="1" height="35" fill="#757575"/>
<rect x="276" y="276" width="1" height="35" fill="#757575"/>
<rect x="276" y="313" width="1" height="35" fill="#757575"/>
<rect x="276" y="350" width="1" height="35" fill="#757575"/>
<rect x="276" y="387" width="1" height="35" fill="#757575"/>
<rect x="276" y="424" width="1" height="35" fill="#757575"/>
<rect x="276" y="461" width="1" height="35" fill="#757575"/>
<rect x="276" y="498" width="1" height="17" fill="#757575"/>
<rect x="276" y="517" width="1" height="17" fill="#757575"/>
<rect x="276" y="536" width="1" height="35" fill="#757575"/>
<rect x="276" y="573" width="1" height="13" fill="#757575"/>
<rect x="276" y="588" width="1" height="18" fill="#757575"/>
<rect x="276" y="608" width="1" height="17" fill="#757575"/>
<rect x="276" y="627" width="1" height="17" fill="#757575"/>
<rect x="293" y="119" width="1" height="7" fill="#757575"/>
<rect x="293" y="128" width="1" height="35" fill="#757575"/>
<rect x="293" y="165" width="1" height="35" fill="#757575"/>
<rect x="293" y="202" width="1" height="35" fill="#757575"/>
<rect x="293" y="239" width="1" height="35" fill="#757575"/>
<rect x="293" y="276" width="1" height="35" fill="#757575"/>
<rect x="293" y="313" width="1" height="35" fill="#757575"/>
<rect x="293" y="350" width="1" height="35" fill="#757575"/>
<rect x="293" y="387" width="1" height="35" fill="#757575"/>
<rect x="293" y="424" width="1" height="35" fill="#757575"/>
<rect x="293" y="461" width="1" height="35" fill="#757575"/>
<rect x="293" y="498" width="1" height="17" fill="#757575"/>
<rect x="293" y="517" width="1" height="17" fill="#757575"/>
<rect x="293" y="536" width="1" height="35" fill="#757575"/>
<rect x="293" y="573" width="1" height="13" fill="#757575"/>
<rect x="293" y="588" width="1" height="18" fill="#757575"/>
<rect x="293" y="608" width="1" height="17" fill="#757575"/>
<rect x="293" y="627" width="1" height="17" fill="#757575"/>
<rect x="310" y="119" width="1" height="7" fill="#757575"/>
<rect x="310" y="128" width="1" height="35" fill="#757575"/>
<rect x="310" y="165" width="1" height="35" fill="#757575"/>
<rect x="310" y="202" width="1" height="35" fill="#757575"/>
<rect x="310" y="239" width="1" height="35" fill="#757575"/>
<rect x="310" y="276" width="1" height="35" fill="#757575"/>
<rect x="310" y="313" width="1" height="35" fill="#757575"/>
<rect x="310" y="350" width="1" height="35" fill="#757575"/>
<rect x="310" y="387" width="1" height="35" fill="#757575"/>
<rect x="310" y="424" width="1" height="35" fill="#757575"/>
<rect x="310" y="461" width="1" height="35" fill="#757575"/>
<rect x="310" y="498" width="1" height="17" fill="#757575"/>
<rect x="310" y="517" width="1" height="17" fill="#757575"/>
<rect x="310" y="536" width="1" height="35" fill="#757575"/>
<rect x="310" y="573" width="1" height="13" fill="#757575"/>
<rect x="310" y="588" width="1" height="18" fill="#757575"/>
<rect x="310" y="608" width="1" height="17" fill="#757575"/>
<rect x="310" y="627" width="1" height="17" fill="#757575"/>
<rect x="327" y="119" width="1" height="7" fill="#757575"/>
<rect x="327" y="128" width="1" height="35" fill="#757575"/>
<rect x="327" y="165" width="1" height="35" fill="#757575"/>
<rect x="327" y="202" width="1" height="35" fill="#757575"/>
<rect x="327" y="239" width="1" height="35" fill="#757575"/>
<rect x="327" y="276" width="1" height="35" fill="#757575"/>
<rect x="327" y="313" width="1" height="35" fill="#757575"/>
<rect x="327" y="350" width="1" height="35" fill="#757575"/>
<rect x="327" y="387" width="1" height="35" fill="#757575"/>
<rect x="327" y="424" width="1" height="35" fill="#757575"/>
<rect x="327" y="461" width="1" height="35" fill="#757575"/>
<rect x="327" y="498" width="1" height="17" fill="#757575"/>
<rect x="327" y="517" width="1" height="17" fill="#757575"/>
<rect x="327" y="536" width="1" height="35" fill="#757575"/>
<rect x="327" y="573" width="1" height="13" fill="#757575"/>
<rect x="327" y="588" width="1" height="18" fill="#757575"/>
<rect x="327" y="608" width="1" height="17" fill="#757575"/>
<rect x="327" y="627" width="1" height="17" fill="#757575"/>
<rect x="344" y="119" width="1" height="7" fill="#757575"/>
<rect x="344" y="128" width="1" height="35" fill="#757575"/>
<rect x="344" y="165" width="1" height="35" fill="#757575"/>
<rect x="344" y="202" width="1" height="35" fill="#757575"/>
<rect x="344" y="239" width="1" height="35" fill="#757575"/>
<rect x="344" y="276" width="1" height="35" fill="#757575"/>
<rect x="344" y="313" width="1" height="35" fill="#757575"/>
<rect x="344" y="350" width="1" height="35" fill="#757575"/>
<rect x="344" y="387" width="1" height="35" fill="#757575"/>
<rect x="344" y="424" width="1" height="35" fill="#757575"/>
<rect x="344" y="461" width="1" height="35" fill="#757575"/>
<rect x="344" y="498" width="1" height="17" fill="#757575"/>
<rect x="344" y="517" width="1" height="17" fill="#757575"/>
<rect x="344" y="536" width="1" height="35" fill="#757575"/>
<rect x="344" y="573" width="1" height="13" fill="#757575"/>
<rect x="344" y="588" width="1" height="18" fill="#757575"/>
<rect x="344" y="608" width="1" height="17" fill="#757575"/>
<rect x="344" y="627" width="1" height="17" fill="#757575"/>
<rect x="361" y="119" width="1" height="7" fill="#757575"/>
<rect x="361" y="128" width="1" height="35" fill="#757575"/>
<rect x="361" y="165" width="1" height="35" fill="#757575"/>
<rect x="361" y="202" width="1" height="35" fill="#757575"/>
<rect x="361" y="239" width="1" height="35" fill="#757575"/>
<rect x="361" y="276" width="1" height="35" fill="#757575"/>
<rect x="361" y="313" width="1" height="35" fill="#757575"/>
<rect x="361" y="350" width="1" height="35" fill="#757575"/>
<rect x="361" y="387" width="1" height="35" fill="#757575"/>
<rect x="361" y="424" width="1" height="35" fill="#757575"/>
<rect x="361" y="461" width="1" height="35" fill="#757575"/>
<rect x="361" y="498" width="1" height="17" fill="#757575"/>
<rect x="361" y="517" width="1" height="17" fill="#757575"/>
<rect x="361" y="536" width="1" height="35" fill="#757575"/>
<rect x="361" y="573" width="1" height="13" fill="#757575"/>
<rect x="361" y="588" width="1" height="18" fill="#757575"/>
<rect x="361" y="608" width="1" height="17" fill="#757575"/>
<rect x="361" y="627" width="1" height="17" fill="#757575"/>
<rect x="378" y="119" width="1" height="7" fill="#757575"/>
<rect x="378" y="128" width="1" height="35" fill="#757575"/>
<rect x="378" y="165" width="1" height="35" fill="#757575"/>
<rect x="378" y="202" width="1" height="35" fill="#757575"/>
<rect x="378" y="239" width="1" height="35" fill="#757575"/>
<rect x="378" y="276" width="1" height="35" fill="#757575"/>
<rect x="378" y="313" width="1" height="35" fill="#757575"/>
<rect x="378" y="350" width="1" height="35" fill="#757575"/>
<rect x="378" y="387" width="1" height="35" fill="#757575"/>
<rect x="378" y="424" width="1" height="35" fill="#757575"/>
<rect x="378" y="461" width="1" height="35" fill="#757575"/>
<rect x="378" y="498" width="1" height="17" fill="#757575"/>
<rect x="378" y="517" width="1" height="17" fill="#757575"/>
<rect x="378" y="536" width="1" height="35" fill="#757575"/>
<rect x="378" y="573" width="1" height="13" fill="#757575"/>
<rect x="378" y="588" width="1" height="18" fill="#757575"/>
<rect x="378" y="608" width="1" height="17" fill="#757575"/>
<rect x="378" y="627" width="1" height="17" fill="#757575"/>
<rect x="395" y="119" width="1" height="7" fill="#757575"/>
<rect x="395" y="128" width="1" height="35" fill="#757575"/>
<rect x="395" y="165" width="1" height="35" fill="#757575"/>
<rect x="395" y="202" width="1" height="35" fill="#757575"/>
<rect x="395" y="239" width="1" height="35" fill="#757575"/>
<rect x="395" y="276" width="1" height="35" fill="#757575"/>
<rect x="395" y="313" width="1" height="35" fill="#757575"/>
<rect x="395" y="350" width="1" height="35" fill="#757575"/>
<rect x="395" y="387" width="1" height="35" fill="#757575"/>
<rect x="395" y="424" width="1" height="35" fill="#757575"/>
<rect x="395" y="461" width="1" height="35" fill="#757575"/>
<rect x="395" y="498" width="1" height="17" fill="#757575"/>
<rect x="395" y="517" width="1" height="17" fill="#757575"/>
<rect x="395" y="536" width="1" height="35" fill="#757575"/>
<rect x="395" y="573" width="1" height="13" fill="#757575"/>
<rect x="395" y="588" width="1" height="18" fill="#757575"/>
<rect x="395" y="608" width="1" height="17" fill="#757575"/>
<rect x="395" y="627" width="1" height="17" fill="#757575"/>
<rect x="412" y="119" width="1" height="7" fill="#757575"/>
<rect x="412" y="128" width="1" height="35" fill="#757575"/>
<rect x="412" y="165" width="1" height="35" fill="#757575"/>
<rect x="412" y="202" width="1" height="35" fill="#757575"/>
<rect x="412" y="239" width="1" height="35" fill="#757575"/>
<rect x="412" y="276" width="1" height="35" fill="#757575"/>
<rect x="412" y="313" width="1" height="35" fill="#757575"/>
<rect x="412" y="350" width="1" height="35" fill="#757575"/>
<rect x="412" y="387" width="1" height="35" fill="#757575"/>
<rect x="412" y="424" width="1" height="35" fill="#757575"/>
<rect x="412" y="461" width="1" height="35" fill="#757575"/>
<rect x="412" y="498" width="1" height="17" fill="#757575"/>
<rect x="412" y="517" width="1" height="17" fill="#757575"/>
<rect x="412" y="536" width="1" height="35" fill="#757575"/>
<rect x="412" y="573" width="1" height="13" fill="#757575"/>
<rect x="412" y="588" width="1" height="18" fill="#757575"/>
<rect x="412" y="608" width="1" height="17" fill="#757575"/>
<rect x="412" y="627" width="1" height="17" fill="#757575"/>
<rect x="429" y="119" width="1" height="7" fill="#757575"/>
<rect x="429" y="128" width="1" height="35" fill="#757575"/>
<rect x="429" y="165" width="1" height="35" fill="#757575"/>
<rect x="429" y="202" width="1" height="35" fill="#757575"/>
<rect x="429" y="239" width="1" height="35" fill="#757575"/>
<rect x="429" y="276" width="1" height="35" fill="#757575"/>
<rect x="429" y="313" width="1" height="35" fill="#757575"/>
<rect x="429" y="350" width="1" height="35" fill="#757575"/>
<rect x="429" y="387" width="1" height="35" fill="#757575"/>
<rect x="429" y="424" width="1" height="35" fill="#757575"/>
<rect x="429" y="461" width="1" height="35" fill="#757575"/>
<rect x="429" y="498" width="1" height="17" fill="#757575"/>
<rect x="429" y="517" width="1" height="17" fill="#757575"/>
<rect x="429" y="536" width="1" height="35" fill="#757575"/>
<rect x="429" y="573" width="1" height="13" fill="#757575"/>
<rect x="429" y="588" width="1" height="18" fill="#757575"/>
<rect x="429" y="608" width="1" height="17" fill="#757575"/>
<rect x="429" y="627" width="1" height="17" fill="#757575"/>
<rect x="446" y="119" width="1" height="7" fill="#757575"/>
<rect x="446" y="128" width="1" height="35" fill="#757575"/>
<rect x="446" y="165" width="1" height="35" fill="#757575"/>
<rect x="446" y="202" width="1" height="35" fill="#757575"/>
<rect x="446" y="239" width="1" height="35" fill="#757575"/>
<rect x="446" y="276" width="1" height="35" fill="#757575"/>
<rect x="446" y="313" width="1" height="35" fill="#757575"/>
<rect x="446" y="350" width="1" height="35" fill="#757575"/>
<rect x="446" y="387" width="1" height="35" fill="#757575"/>
<rect x="446" y="424" width="1" height="35" fill="#757575"/>
<rect x="446" y="461" width="1" height="35" fill="#757575"/>
<rect x="446" y="498" width="1" height="17" fill="#757575"/>
<rect x="446" y="517" width="1" height="17" fill="#757575"/>
<rect x="446" y="536" width="1" height="35" fill="#757575"/>
<rect x="446" y="573" width="1" height="13" fill="#757575"/>
<rect x="446" y="588" width="1" height="18" fill="#757575"/>
<rect x="446" y="608" width="1" height="17" fill="#757575"/>
<rect x="446" y="627" width="1" height="17" fill="#757575"/>
<rect x="463" y="119" width="1" height="7" fill="#757575"/>
<rect x="463" y="128" width="1" height="35" fill="#757575"/>
<rect x="463" y="165" width="1" height="35" fill="#757575"/>
<rect x="463" y="202" width="1" height="35" fill="#757575"/>
<rect x="463" y="239" width="1" height="35" fill="#757575"/>
<rect x="463" y="276" width="1" height="35" fill="#757575"/>
<rect x="463" y="313" width="1" height="35" fill="#757575"/>
<rect x="463" y="350" width="1" height="35" fill="#757575"/>
<rect x="463" y="387" width="1" height="35" fill="#757575"/>
<rect x="463" y="424" width="1" height="35" fill="#757575"/>
<rect x="463" y="461" width="1" height="35" fill="#757575"/>
<rect x="463" y="498" width="1" height="17" fill="#757575"/>
<rect x="463" y="517" width="1" height="17" fill="#757575"/>
<rect x="463" y="536" width="1" height="35" fill="#757575"/>
<rect x="463" y="573" width="1" height="13" fill="#757575"/>
<rect x="463" y="588" width="1" height="18" fill="#757575"/>
<rect x="463" y="608" width="1" height="17" fill="#757575"/>
<rect x="463" y="627" width="1" height="17" fill="#757575"/>
<rect x="480" y="119" width="1" height="7" fill="#757575"/>
<rect x="480" y="128" width="1" height="35" fill="#757575"/>
<rect x="480" y="165" width="1" height="35" fill="#757575"/>
<rect x="480" y="202" width="1" height="35" fill="#757575"/>
<rect x="480" y="239" width="1" height="35" fill="#757575"/>
<rect x="480" y="276" width="1" height="35" fill="#757575"/>
<rect x="480" y="313" width="1" height="35" fill="#757575"/>
<rect x="480" y="350" width="1" height="35" fill="#757575"/>
<rect x="480" y="387" width="1" height="35" fill="#757575"/>
<rect x="480" y="424" width="1" height="35" fill="#757575"/>
<rect x="480" y="461" width="1" height="35" fill="#757575"/>
<rect x="480" y="498" width="1" height="17" fill="#757575"/>
<rect x="480" y="517" width="1" height="17" fill="#757575"/>
<rect x="480" y="536" width="1" height="35" fill="#757575"/>
<rect x="480" y="573" width="1" height="13" fill="#757575"/>
<rect x="480" y="588" width="1" height="18" fill="#757575"/>
<rect x="480" y="608" width="1" height="17" fill="#757575"/>
<rect x="480" y="627" width="1" height="17" fill="#757575"/>
<rect x="497" y="119" width="1" height="7" fill="#757575"/>
<rect x="497" y="128" width="1" height="35" fill="#757575"/>
<rect x="497" y="165" width="1" height="35" fill="#757575"/>
<rect x="497" y="202" width="1" height="35" fill="#757575"/>
<rect x="497" y="239" width="1" height="35" fill="#757575"/>
<rect x="497" y="276" width="1" height="35" fill="#757575"/>
<rect x="497" y="313" width="1" height="35" fill="#757575"/>
<rect x="497" y="350" width="1" height="35" fill="#757575"/>
<rect x="497" y="387" width="1" height="35" fill="#757575"/>
<rect x="497" y="424" width="1" height="35" fill="#757575"/>
<rect x="497" y="461" width="1" height="35" fill="#757575"/>
<rect x="497" y="498" width="1" height="17" fill="#757575"/>
<rect x="497" y="517" width="1" height="17" fill="#757575"/>
<rect x="497" y="536" width="1" height="35" fill="#757575"/>
<rect x="497" y="573" width="1" height="13" fill="#757575"/>
<rect x="497" y="588" width="1" height="18" fill="#757575"/>
<rect x="497" y="608" width="1" height="17" fill="#757575"/>
<rect x="497" y="627" width="1" height="17" fill="#757575"/>
<rect x="514" y="119" width="1" height="7" fill="#757575"/>
<rect x="514" y="128" width="1" height="35" fill="#757575"/>
<rect x="514" y="165" width="1" height="35" fill="#757575"/>
<rect x="514" y="202" width="1" height="35" fill="#757575"/>
<rect x="514" y="239" width="1" height="35" fill="#757575"/>
<rect x="514" y="276" width="1" height="35" fill="#757575"/>
<rect x="514" y="313" width="1" height="35" fill="#757575"/>
<rect x="514" y="350" width="1" height="35" fill="#757575"/>
<rect x="514" y="387" width="1" height="35" fill="#757575"/>
<rect x="514" y="424" width="1" height="35" fill="#757575"/>
<rect x="514" y="461" width="1" height="35" fill="#757575"/>
<rect x="514" y="498" width="1" height="17" fill="#757575"/>
<rect x="514" y="517" width="1" height="17" fill="#757575"/>
<rect x="514" y="536" width="1" height="35" fill="#757575"/>
<rect x="514" y="573" width="1" height="13" fill="#757575"/>
<rect x="514" y="588" width="1" height="18" fill="#757575"/>
<rect x="514" y="608" width="1" height="17" fill="#757575"/>
<rect x="514" y="627" width="1" height="17" fill="#757575"/>
<rect x="530" y="119" width="1" height="7" fill="#757575"/>
<rect x="530" y="128" width="1" height="35" fill="#757575"/>
<rect x="530" y="165" width="1" height="35" fill="#757575"/>
<rect x="530" y="202" width="1" height="35" fill="#757575"/>
<rect x="530" y="239" width="1" height="35" fill="#757575"/>
<rect x="530" y="276" width="1" height="35" fill="#757575"/>
<rect x="530" y="313" width="1" height="35" fill="#757575"/>
<rect x="530" y="350" width="1" height="35" fill="#757575"/>
<rect x="530" y="387" width="1" height="35" fill="#757575"/>
<rect x="530" y="424" width="1" height="35" fill="#757575"/>
<rect x="530" y="461" width="1" height="35" fill="#757575"/>
<rect x="530" y="498" width="1" height="17" fill="#757575"/>
<rect x="530" y="517" width="1" height="17" fill="#757575"/>
<rect x="530" y="536" width="1" height="35" fill="#757575"/>
<rect x="530" y="573" width="1" height="13" fill="#757575"/>
<rect x="530" y="588" width="1" height="18" fill="#757575"/>
<rect x="530" y="608" width="1" height="17" fill="#757575"/>
<rect x="530" y="627" width="1" height="17" fill="#757575"/>
<rect x="547" y="119" width="1" height="7" fill="#757575"/>
<rect x="547" y="128" width="1" height="35" fill="#757575"/>
<rect x="547" y="165" width="1" height="35" fill="#757575"/>
<rect x="547" y="202" width="1" height="35" fill="#757575"/>
<rect x="547" y="239" width="1" height="35" fill="#757575"/>
<rect x="547" y="276" width="1" height="35" fill="#757575"/>
<rect x="547" y="313" width="1" height="35" fill="#757575"/>
<rect x="547" y="350" width="1" height="35" fill="#757575"/>
<rect x="547" y="387" width="1" height="35" fill="#757575"/>
<rect x="547" y="424" width="1" height="35" fill="#757575"/>
<rect x="547" y="461" width="1" height="35" fill="#757575"/>
<rect x="547" y="498" width="1" height="17" fill="#757575"/>
<rect x="547" y="517" width="1" height="17" fill="#757575"/>
<rect x="547" y="536" width="1" height="35" fill="#757575"/>
<rect x="547" y="573" width="1" height="13" fill="#757575"/>
<rect x="547" y="588" width="1" height="18" fill="#757575"/>
<rect x="547" y="608" width="1" height="17" fill="#757575"/>
<rect x="547" y="627" width="1" height="17" fill="#757575"/>
<rect x="564" y="119" width="1" height="7" fill="#757575"/>
<rect x="564" y="128" width="1" height="35" fill="#757575"/>
<rect x="564" y="165" width="1" height="35" fill="#757575"/>
<rect x="564" y="202" width="1" height="35" fill="#757575"/>
<rect x="564" y="239" width="1" height="35" fill="#757575"/>
<rect x="564" y="276" width="1" height="35" fill="#757575"/>
<rect x="564" y="313" width="1" height="35" fill="#757575"/>
<rect x="564" y="350" width="1" height="35" fill="#757575"/>
<rect x="564" y="387" width="1" height="35" fill="#757575"/>
<rect x="564" y="424" width="1" height="35" fill="#757575"/>
<rect x="564" y="461" width="1" height="35" fill="#757575"/>
<rect x="564" y="498" width="1" height="17" fill="#757575"/>
<rect x="564" y="517" width="1" height="17" fill="#757575"/>
<rect x="564" y="536" width="1" height="35" fill="#757575"/>
<rect x="564" y="573" width="1" height="13" fill="#757575"/>
<rect x="564" y="588" width="1" height="18" fill="#757575"/>
<rect x="564" y="608" width="1" height="17" fill="#757575"/>
<rect x="564" y="627" width="1" height="17" fill="#757575"/>
<rect x="581" y="119" width="1" height="7" fill="#757575"/>
<rect x="581" y="128" width="1" height="35" fill="#757575"/>
<rect x="581" y="165" width="1" height="35" fill="#757575"/>
<rect x="581" y="202" width="1" height="35" fill="#757575"/>
<rect x="581" y="239" width="1" height="35" fill="#757575"/>
<rect x="581" y="276" width="1" height="35" fill="#757575"/>
<rect x="581" y="313" width="1" height="35" fill="#757575"/>
<rect x="581" y="350" width="1" height="35" fill="#757575"/>
<rect x="581" y="387" width="1" height="35" fill="#757575"/>
<rect x="581" y="424" width="1" height="35" fill="#757575"/>
<rect x="581" y="461" width="1" height="35" fill="#757575"/>
<rect x="581" y="498" width="1" height="17" fill="#757575"/>
<rect x="581" y="517" width="1" height="17" fill="#757575"/>
<rect x="581" y="536" width="1" height="35" fill="#757575"/>
<rect x="581" y="573" width="1" height="13" fill="#757575"/>
<rect x="581" y="588" width="1" height="18" fill="#757575"/>
<rect x="581" y="608" width="1" height="17" fill="#757575"/>
<rect x="581" y="627" width="1" height="17" fill="#757575"/>
<rect x="598" y="119" width="1" height="7" fill="#757575"/>
<rect x="598" y="128" width="1" height="35" fill="#757575"/>
<rect x="598" y="165" width="1" height="35" fill="#757575"/>
<rect x="598" y="202" width="1" height="35" fill="#757575"/>
<rect x="598" y="239" width="1" height="35" fill="#757575"/>
<rect x="598" y="276" width="1" height="35" fill="#757575"/>
<rect x="598" y="313" width="1" height="35" fill="#757575"/>
<rect x="598" y="350" width="1" height="35" fill="#757575"/>
<rect x="598" y="387" width="1" height="35" fill="#757575"/>
<rect x="598" y="424" width="1" height="35" fill="#757575"/>
<rect x="598" y="461" width="1" height="35" fill="#757575"/>
<rect x="598" y="498" width="1" height="17" fill="#757575"/>
<rect x="598" y="517" width="1" height="17" fill="#757575"/>
<rect x="598" y="536" width="1" height="35" fill="#757575"/>
<rect x="598" y="573" width="1" height="13" fill="#757575"/>
<rect x="598" y="588" width="1" height="18" fill="#757575"/>
<rect x="598" y="608" width="1" height="17" fill="#757575"/>
<rect x="598" y="627" width="1" height="17" fill="#757575"/>
<rect x="615" y="119" width="1" height="7" fill="#757575"/>
<rect x="615" y="128" width="1" height="35" fill="#757575"/>
<rect x="615" y="165" width="1" height="35" fill="#757575"/>
<rect x="615" y="202" width="1" height="35" fill="#757575"/>
<rect x="615" y="239" width="1" height="35" fill="#757575"/>
<rect x="615" y="276" width="1" height="35" fill="#757575"/>
<rect x="615" y="313" width="1" height="35" fill="#757575"/>
<rect x="615" y="350" width="1" height="35" fill="#757575"/>
<rect x="615" y="387" width="1" height="35" fill="#757575"/>
<rect x="615" y="424" width="1" height="35" fill="#757575"/>
<rect x="615" y="461" width="1" height="35" fill="#757575"/>
<rect x="615" y="498" width="1" height="17" fill="#757575"/>
<rect x="615" y="517" width="1" height="17" fill="#757575"/>
<rect x="615" y="536" width="1" height="35" fill="#757575"/>
<rect x="615" y="573" width="1" height="13" fill="#757575"/>
<rect x="615" y="588" width="1" height="18" fill="#757575"/>
<rect x="615" y="608" width="1" height="17" fill="#757575"/>
<rect x="615" y="627" width="1" height="17" fill="#757575"/>
<rect x="632" y="119" width="1" height="7" fill="#757575"/>
<rect x="632" y="128" width="1" height="35" fill="#757575"/>
<rect x="632" y="165" width="1" height="35" fill="#757575"/>
<rect x="632" y="202" width="1" height="35" fill="#757575"/>
<rect x="632" y="239" width="1" height="35" fill="#757575"/>
<rect x="632" y="276" width="1" height="35" fill="#757575"/>
<rect x="632" y="313" width="1" height="35" fill="#757575"/>
<rect x="632" y="350" width="1" height="35" fill="#757575"/>
<rect x="632" y="387" width="1" height="35" fill="#757575"/>
<rect x="632" y="424" width="1" height="35" fill="#757575"/>
<rect x="632" y="461" width="1" height="35" fill="#757575"/>
<rect x="632" y="498" width="1" height="17" fill="#757575"/>
<rect x="632" y="517" width="1" height="17" fill="#757575"/>
<rect x="632" y="536" width="1" height="35" fill="#757575"/>
<rect x="632" y="573" width="1" height="13" fill="#757575"/>
<rect x="632" y="588" width="1" height="18" fill="#757575"/>
<rect x="632" y="608" width="1" height="17" fill="#757575"/>
<rect x="632" y="627" width="1" height="17" fill="#757575"/>
<rect x="649" y="119" width="1" height="7" fill="#757575"/>
<rect x="649" y="128" width="1" height="35" fill="#757575"/>
<rect x="649" y="165" width="1" height="35" fill="#757575"/>
<rect x="649" y="202" width="1" height="35" fill="#757575"/>
<rect x="649" y="239" width="1" height="35" fill="#757575"/>
<rect x="649" y="276" width="1" height="35" fill="#757575"/>
<rect x="649" y="313" width="1" height="35" fill="#757575"/>
<rect x="649" y="350" width="1" height="35" fill="#757575"/>
<rect x="649" y="387" width="1" height="35" fill="#757575"/>
<rect x="649" y="424" width="1" height="35" fill="#757575"/>
<rect x="649" y="461" width="1" height="35" fill="#757575"/>
<rect x="649" y="498" width="1" height="17" fill="#757575"/>
<rect x="649" y="517" width="1" height="17" fill="#757575"/>
<rect x="649" y="536" width="1" height="35" fill="#757575"/>
<rect x="649" y="573" width="1" height="13" fill="#757575"/>
<rect x="649" y="588" width="1" height="18" fill="#757575"/>
<rect x="649" y="608" width="1" height="17" fill="#757575"/>
<rect x="649" y="627" width="1" height="17" fill="#757575"/>
<rect x="666" y="119" width="1" height="7" fill="#757575"/>
<rect x="666" y="128" width="1" height="35" fill="#757575"/>
<rect x="666" y="165" width="1" height="35" fill="#757575"/>
<rect x="666" y="202" width="1" height="35" fill="#757575"/>
<rect x="666" y="239" width="1" height="35" fill="#757575"/>
<rect x="666" y="276" width="1" height="35" fill="#757575"/>
<rect x="666" y="313" width="1" height="35" fill="#757575"/>
<rect x="666" y="350" width="1" height="35" fill="#757575"/>
<rect x="666" y="387" width="1" height="35" fill="#757575"/>
<rect x="666" y="424" width="1" height="35" fill="#757575"/>
<rect x="666" y="461" width="1" height="35" fill="#757575"/>
<rect x="666" y="498" width="1" height="17" fill="#757575"/>
<rect x="666" y="517" width="1" height="17" fill="#757575"/>
<rect x="666" y="536" width="1" height="35" fill="#757575"/>
<rect x="666" y="573" width="1" height="13" fill="#757575"/>
<rect x="666" y="588" width="1" height="18" fill="#757575"/>
<rect x="666" y="608" width="1" height="17" fill="#757575"/>
<rect x="666" y="627" width="1" height="17" fill="#757575"/>
<rect x="683" y="119" width="1" height="7" fill="#757575"/>
<rect x="683" y="128" width="1" height="35" fill="#757575"/>
<rect x="683" y="165" width="1" height="35" fill="#757575"/>
<rect x="683" y="202" width="1" height="35" fill="#757575"/>
<rect x="683" y="239" width="1" height="35" fill="#757575"/>
<rect x="683" y="276" width="1" height="35" fill="#757575"/>
<rect x="683" y="313" width="1" height="35" fill="#757575"/>
<rect x="683" y="350" width="1" height="35" fill="#757575"/>
<rect x="683" y="387" width="1" height="35" fill="#757575"/>
<rect x="683" y="424" width="1" height="35" fill="#757575"/>
<rect x="683" y="461" width="1" height="35" fill="#757575"/>
<rect x="683" y="498" width="1" height="17" fill="#757575"/>
<rect x="683" y="517" width="1" height="17" fill="#757575"/>
<rect x="683" y="536" width="1" height="35" fill="#757575"/>
<rect x="683" y="573" width="1" height="13" fill="#757575"/>
<rect x="683" y="588" width="1" height="18" fill="#757575"/>
<rect x="683" y="608" width="1" height="17" fill="#757575"/>
<rect x="683" y="627" width="1" height="17" fill="#757575"/>
<rect x="700" y="119" width="1" height="7" fill="#757575"/>
<rect x="700" y="128" width="1" height="35" fill="#757575"/>
<rect x="700" y="165" width="1" height="35" fill="#757575"/>
<rect x="700" y="202" width="1" height="35" fill="#757575"/>
<rect x="700" y="239" width="1" height="35" fill="#757575"/>
<rect x="700" y="276" width="1" height="35" fill="#757575"/>
<rect x="700" y="313" width="1" height="35" fill="#757575"/>
<rect x="700" y="350" width="1" height="35" fill="#757575"/>
<rect x="700" y="387" width="1" height="35" fill="#757575"/>
<rect x="700" y="424" width="1" height="35" fill="#757575"/>
<rect x="700" y="461" width="1" height="35" fill="#757575"/>
<rect x="700" y="498" width="1" height="17" fill="#757575"/>
<rect x="700" y="517" width="1" height="17" fill="#757575"/>
<rect x="700" y="536" width="1" height="35" fill="#757575"/>
<rect x="700" y="573" width="1" height="13" fill="#757575"/>
<rect x="700" y="588" width="1" height="18" fill="#757575"/>
<rect x="700" y="608" width="1" height="17" fill="#757575"/>
<rect x="700" y="627" width="1" height="17" fill="#757575"/>
<rect x="717" y="119" width="1" height="7" fill="#757575"/>
<rect x="717" y="128" width="1" height="35" fill="#757575"/>
<rect x="717" y="165" width="1" height="35" fill="#757575"/>
<rect x="717" y="202" width="1" height="35" fill="#757575"/>
<rect x="717" y="239" width="1" height="35" fill="#757575"/>
<rect x="717" y="276" width="1" height="35" fill="#757575"/>
<rect x="717" y="313" width="1" height="35" fill="#757575"/>
<rect x="717" y="350" width="1" height="35" fill="#757575"/>
<rect x="717" y="387" width="1" height="35" fill="#757575"/>
<rect x="717" y="424" width="1" height="35" fill="#757575"/>
<rect x="717" y="461" width="1" height="35" fill="#757575"/>
<rect x="717" y="498" width="1" height="17" fill="#757575"/>
<rect x="717" y="517" width="1" height="17" fill="#757575"/>
<rect x="717" y="536" width="1" height="35" fill="#757575"/>
<rect x="717" y="573" width="1" height="13" fill="#757575"/>
<rect x="717" y="588" width="1" height="18" fill="#757575"/>
<rect x="717" y="608" width="1" height="17" fill="#757575"/>
<rect x="717" y="627" width="1" height="17" fill="#757575"/>
<rect x="734" y="119" width="1" height="7" fill="#757575"/>
<rect x="734" y="128" width="1" height="35" fill="#757575"/>
<rect x="734" y="165" width="1" height="35" fill="#757575"/>
<rect x="734" y="202" width="1" height="35" fill="#757575"/>
<rect x="734" y="239" width="1" height="35" fill="#757575"/>
<rect x="734" y="276" width="1" height="35" fill="#757575"/>
<rect x="734" y="313" width="1" height="35" fill="#757575"/>
<rect x="734" y="350" width="1" height="35" fill="#757575"/>
<rect x="734" y="387" width="1" height="35" fill="#757575"/>
<rect x="734" y="424" width="1" height="35" fill="#757575"/>
<rect x="734" y="461" width="1" height="35" fill="#757575"/>
<rect x="734" y="498" width="1" height="17" fill="#757575"/>
<rect x="734" y="517" width="1" height="17" fill="#757575"/>
<rect x="734" y="536" width="1" height="35" fill="#757575"/>
<rect x="734" y="573" width="1" height="13" fill="#757575"/>
<rect x="734" y="588" width="1" height="18" fill="#757575"/>
<rect x="734" y="608" width="1" height="17" fill="#757575"/>
<rect x="734" y="627" width="1" height="17" fill="#757575"/>
<rect x="751" y="119" width="1" height="7" fill="#757575"/>
<rect x="751" y="128" width="1" height="35" fill="#757575"/>
<rect x="751" y="165" width="1" height="35" fill="#757575"/>
<rect x="751" y="202" width="1" height="35" fill="#757575"/>
<rect x="751" y="239" width="1" height="35" fill="#757575"/>
<rect x="751" y="276" width="1" height="35" fill="#757575"/>
<rect x="751" y="313" width="1" height="35" fill="#757575"/>
<rect x="751" y="350" width="1" height="35" fill="#757575"/>
<rect x="751" y="387" width="1" height="35" fill="#757575"/>
<rect x="751" y="424" width="1" height="35" fill="#757575"/>
<rect x="751" y="461" width="1" height="35" fill="#757575"/>
<rect x="751" y="498" width="1" height="17" fill="#757575"/>
<rect x="751" y="517" width="1" height="17" fill="#757575"/>
<rect x="751" y="536" width="1" height="35" fill="#757575"/>
<rect x="751" y="573" width="1" height="13" fill="#757575"/>
<rect x="751" y="588" width="1" height="18" fill="#757575"/>
<rect x="751" y="608" width="1" height="17" fill="#757575"/>
<rect x="751" y="627" width="1" height="17" fill="#757575"/>
<rect x="768" y="119" width="1" height="7" fill="#757575"/>
<rect x="768" y="128" width="1" height="35" fill="#757575"/>
<rect x="768" y="165" width="1" height="35" fill="#757575"/>
<rect x="768" y="202" width="1" height="35" fill="#757575"/>
<rect x="768" y="239" width="1" height="35" fill="#757575"/>
<rect x="768" y="276" width="1" height="35" fill="#757575"/>
<rect x="768" y="313" width="1" height="35" fill="#757575"/>
<rect x="768" y="350" width="1" height="35" fill="#757575"/>
<rect x="768" y="387" width="1" height="35" fill="#757575"/>
<rect x="768" y="424" width="1" height="35" fill="#757575"/>
<rect x="768" y="461" width="1" height="35" fill="#757575"/>
<rect x="768" y="498" width="1" height="17" fill="#757575"/>
<rect x="768" y="517" width="1" height="17" fill="#757575"/>
<rect x="768" y="536" width="1" height="35" fill="#757575"/>
<rect x="768" y="573" width="1" height="13" fill="#757575"/>
<rect x="768" y="588" width="1" height="18" fill="#757575"/>
<rect x="768" y="608" width="1" height="17" fill="#757575"/>
<rect x="768" y="627" width="1" height="17" fill="#757575"/>
<rect x="785" y="119" width="1" height="7" fill="#757575"/>
<rect x="785" y="128" width="1" height="35" fill="#757575"/>
<rect x="785" y="165" width="1" height="35" fill="#757575"/>
<rect x="785" y="202" width="1" height="35" fill="#757575"/>
<rect x="785" y="239" width="1" height="35" fill="#757575"/>
<rect x="785" y="276" width="1" height="35" fill="#757575"/>
<rect x="785" y="313" width="1" height="35" fill="#757575"/>
<rect x="785" y="350" width="1" height="35" fill="#757575"/>
<rect x="785" y="387" width="1" height="35" fill="#757575"/>
<rect x="785" y="424" width="1" height="35" fill="#757575"/>
<rect x="785" y="461" width="1" height="35" fill="#757575"/>
<rect x="785" y="498" width="1" height="17" fill="#757575"/>
<rect x="785" y="517" width="1" height="17" fill="#757575"/>
<rect x="785" y="536" width="1" height="35" fill="#757575"/>
<rect x="785" y="573" width="1" height="13" fill="#757575"/>
<rect x="785" y="588" width="1" height="18" fill="#757575"/>
<rect x="785" y="608" width="1" height="17" fill="#757575"/>
<rect x="785" y="627" width="1" height="17" fill="#757575"/>
<rect x="802" y="119" width="1" height="7" fill="#757575"/>
<rect x="802" y="128" width="1" height="35" fill="#757575"/>
<rect x="802" y="165" width="1" height="35" fill="#757575"/>
<rect x="802" y="202" width="1" height="35" fill="#757575"/>
<rect x="802" y="239" width="1" height="35" fill="#757575"/>
<rect x="802" y="276" width="1" height="35" fill="#757575"/>
<rect x="802" y="313" width="1" height="35" fill="#757575"/>
<rect x="802" y="350" width="1" height="35" fill="#757575"/>
<rect x="802" y="387" width="1" height="35" fill="#757575"/>
<rect x="802" y="424" width="1" height="35" fill="#757575"/>
<rect x="802" y="461" width="1" height="35" fill="#757575"/>
<rect x="802" y="498" width="1" height="17" fill="#757575"/>
<rect x="802" y="517" width="1" height="17" fill="#757575"/>
<rect x="802" y="536" width="1" height="35" fill="#757575"/>
<rect x="802" y="573" width="1" height="13" fill="#757575"/>
<rect x="802" y="588" width="1" height="18" fill="#757575"/>
<rect x="802" y="608" width="1" height="17" fill="#757575"/>
<rect x="802" y="627" width="1" height="17" fill="#757575"/>
<rect x="819" y="119" width="1" height="7" fill="#757575"/>
<rect x="819" y="128" width="1" height="35" fill="#757575"/>
<rect x="819" y="165" width="1" height="35" fill="#757575"/>
<rect x="819" y="202" width="1" height="35" fill="#757575"/>
<rect x="819" y="239" width="1" height="35" fill="#757575"/>
<rect x="819" y="276" width="1" height="35" fill="#757575"/>
<rect x="819" y="313" width="1" height="35" fill="#757575"/>
<rect x="819" y="350" width="1" height="35" fill="#757575"/>
<rect x="819" y="387" width="1" height="35" fill="#757575"/>
<rect x="819" y="424" width="1" height="35" fill="#757575"/>
<rect x="819" y="461" width="1" height="35" fill="#757575"/>
<rect x="819" y="498" width="1" height="17" fill="#757575"/>
<rect x="819" y="517" width="1" height="17" fill="#757575"/>
<rect x="819" y="536" width="1" height="35" fill="#757575"/>
<rect x="819" y="573" width="1" height="13" fill="#757575"/>
<rect x="819" y="588" width="1" height="18" fill="#757575"/>
<rect x="819" y="608" width="1" height="17" fill="#757575"/>
<rect x="819" y="627" width="1" height="17" fill="#757575"/>
<rect x="836" y="119" width="1" height="7" fill="#757575"/>
<rect x="836" y="128" width="1" height="35" fill="#757575"/>
<rect x="836" y="165" width="1" height="35" fill="#757575"/>
<rect x="836" y="202" width="1" height="35" fill="#757575"/>
<rect x="836" y="239" width="1" height="35" fill="#757575"/>
<rect x="836" y="276" width="1" height="35" fill="#757575"/>
<rect x="836" y="313" width="1" height="35" fill="#757575"/>
<rect x="836" y="350" width="1" height="35" fill="#757575"/>
<rect x="836" y="387" width="1" height="35" fill="#757575"/>
<rect x="836" y="424" width="1" height="35" fill="#757575"/>
<rect x="836" y="461" width="1" height="35" fill="#757575"/>
<rect x="836" y="498" width="1" height="17" fill="#757575"/>
<rect x="836" y="517" width="1" height="17" fill="#757575"/>
<rect x="836" y="536" width="1" height="35" fill="#757575"/>
<rect x="836" y="573" width="1" height="13" fill="#757575"/>
<rect x="836" y="588" width="1" height="18" fill="#757575"/>
<rect x="836" y="608" width="1" height="17" fill="#757575"/>
<rect x="836" y="627" width="1" height="17" fill="#757575"/>
<rect x="853" y="119" width="1" height="7" fill="#757575"/>
<rect x="853" y="128" width="1" height="35" fill="#757575"/>
<rect x="853" y="165" width="1" height="35" fill="#757575"/>
<rect x="853" y="202" width="1" height="35" fill="#757575"/>
<rect x="853" y="239" width="1" height="35" fill="#757575"/>
<rect x="853" y="276" width="1" height="35" fill="#757575"/>
<rect x="853" y="313" width="1" height="35" fill="#757575"/>
<rect x="853" y="350" width="1" height="35" fill="#757575"/>
<rect x="853" y="387" width="1" height="35" fill="#757575"/>
<rect x="853" y="424" width="1" height="35" fill="#757575"/>
<rect x="853" y="461" width="1" height="35" fill="#757575"/>
<rect x="853" y="498" width="1" height="17" fill="#757575"/>
<rect x="853" y="517" width="1" height="17" fill="#757575"/>
<rect x="853" y="536" width="1" height="35" fill="#757575"/>
<rect x="853" y="573" width="1" height="13" fill="#757575"/>
<rect x="853" y="588" width="1" height="18" fill="#757575"/>
<rect x="853" y="608" width="1" height="17" fill="#757575"/>
<rect x="853" y="627" width="1" height="17" fill="#757575"/>
<rect x="870" y="119" width="1" height="7" fill="#757575"/>
<rect x="870" y="128" width="1" height="35" fill="#757575"/>
<rect x="870" y="165" width="1" height="35" fill="#757575"/>
<rect x="870" y="202" width="1" height="35" fill="#757575"/>
<rect x="870" y="239" width="1" height="35" fill="#757575"/>
<rect x="870" y="276" width="1" height="35" fill="#757575"/>
<rect x="870" y="313" width="1" height="35" fill="#757575"/>
<rect x="870" y="350" width="1" height="35" fill="#757575"/>
<rect x="870" y="387" width="1" height="35" fill="#757575"/>
<rect x="870" y="424" width="1" height="35" fill="#757575"/>
<rect x="870" y="461" width="1" height="35" fill="#757575"/>
<rect x="870" y="498" width="1" height="17" fill="#757575"/>
<rect x="870" y="517" width="1" height="17" fill="#757575"/>
<rect x="870" y="536" width="1" height="35" fill="#757575"/>
<rect x="870" y="573" width="1" height="13" fill="#757575"/>
<rect x="870" y="588" width="1" height="18" fill="#757575"/>
<rect x="870" y="608" width="1" height="17" fill="#757575"/>
<rect x="870" y="627" width="1" height="17" fill="#757575"/>
<rect x="887" y="119" width="1" height="7" fill="#757575"/>
<rect x="887" y="128" width="1" height="35" fill="#757575"/>
<rect x="887" y="165" width="1" height="35" fill="#757575"/>
<rect x="887" y="202" width="1" height="35" fill="#757575"/>
<rect x="887" y="239" width="1" height="35" fill="#757575"/>
<rect x="887" y="276" width="1" height="35" fill="#757575"/>
<rect x="887" y="313" width="1" height="35" fill="#757575"/>
<rect x="887" y="350" width="1" height="35" fill="#757575"/>
<rect x="887" y="387" width="1" height="35" fill="#757575"/>
<rect x="887" y="424" width="1" height="35" fill="#757575"/>
<rect x="887" y="461" width="1" height="35" fill="#757575"/>
<rect x="887" y="498" width="1" height="17" fill="#757575"/>
<rect x="887" y="517" width="1" height="17" fill="#757575"/>
<rect x="887" y="536" width="1" height="35" fill="#757575"/>
<rect x="887" y="573" width="1" height="13" fill="#757575"/>
<rect x="887" y="588" width="1" height="18" fill="#757575"/>
<rect x="887" y="608" width="1" height="17" fill="#757575"/>
<rect x="887" y="627" width="1" height="17" fill="#757575"/>
<rect x="904" y="119" width="1" height="7" fill="#757575"/>
<rect x="904" y="128" width="1" height="35" fill="#757575"/>
<rect x="904" y="165" width="1" height="35" fill="#757575"/>
<rect x="904" y="202" width="1" height="35" fill="#757575"/>
<rect x="904" y="239" width="1" height="35" fill="#757575"/>
<rect x="904" y="276" width="1" height="35" fill="#757575"/>
<rect x="904" y="313" width="1" height="35" fill="#757575"/>
<rect x="904" y="350" width="1" height="35" fill="#757575"/>
<rect x="904" y="387" width="1" height="35" fill="#757575"/>
<rect x="904" y="424" width="1" height="35" fill="#757575"/>
<rect x="904" y="461" width="1" height="35" fill="#757575"/>
<rect x="904" y="498" width="1" height="17" fill="#757575"/>
<rect x="904" y="517" width="1" height="17" fill="#757575"/>
<rect x="904" y="536" width="1" height="35" fill="#757575"/>
<rect x="904" y="573" width="1" height="13" fill="#757575"/>
<rect x="904" y="588" width="1" height="18" fill="#757575"/>
<rect x="904" y="608" width="1" height="17" fill="#757575"/>
<rect x="904" y="627" width="1" height="17" fill="#757575"/>
<rect x="921" y="119" width="1" height="7" fill="#757575"/>
<rect x="921" y="128" width="1" height="35" fill="#757575"/>
<rect x="921" y="165" width="1" height="35" fill="#757575"/>
<rect x="921" y="202" width="1" height="35" fill="#757575"/>
<rect x="921" y="239" width="1" height="35" fill="#757575"/>
<rect x="921" y="276" width="1" height="35" fill="#757575"/>
<rect x="921" y="313" width="1" height="35" fill="#757575"/>
<rect x="921" y="350" width="1" height="35" fill="#757575"/>
<rect x="921" y="387" width="1" height="35" fill="#757575"/>
<rect x="921" y="424" width="1" height="35" fill="#757575"/>
<rect x="921" y="461" width="1" height="35" fill="#757575"/>
<rect x="921" y="498" width="1" height="17" fill="#757575"/>
<rect x="921" y="517" width="1" height="17" fill="#757575"/>
<rect x="921" y="536" width="1" height="35" fill="#757575"/>
<rect x="921" y="573" width="1" height="13" fill="#757575"/>
<rect x="921" y="588" width="1" height="18" fill="#757575"/>
<rect x="921" y="608" width="1" height="17" fill="#757575"/>
<rect x="921" y="627" width="1" height="17" fill="#757575"/>
<rect x="938" y="119" width="1" height="7" fill="#757575"/>
<rect x="938" y="128" width="1" height="35" fill="#757575"/>
<rect x="938" y="165" width="1" height="35" fill="#757575"/>
<rect x="938" y="202" width="1" height="35" fill="#757575"/>
<rect x="938" y="239" width="1" height="35" fill="#757575"/>
<rect x="938" y="276" width="1" height="35" fill="#9a9a9a"/>
<rect x="938" y="313" width="1" height="35" fill="#757575"/>
<rect x="938" y="350" width="1" height="35" fill="#757575"/>
<rect x="938" y="387" width="1" height="35" fill="#757575"/>
<rect x="938" y="424" width="1" height="35" fill="#757575"/>
<rect x="938" y="461" width="1" height="35" fill="#757575"/>
<rect x="938" y="498" width="1" height="17" fill="#757575"/>
<rect x="938" y="517" width="1" height="17" fill="#757575"/>
<rect x="938" y="536" width="1" height="35" fill="#757575"/>
<rect x="938" y="573" width="1" height="13" fill="#757575"/>
<rect x="938" y="588" width="1" height="18" fill="#757575"/>
<rect x="938" y="608" width="1" height="17" fill="#757575"/>
<rect x="938" y="627" width="1" height="17" fill="#757575"/>
<rect x="955" y="119" width="1" height="7" fill="#757575"/>
<rect x="955" y="128" width="1" height="35" fill="#757575"/>
<rect x="955" y="165" width="1" height="35" fill="#757575"/>
<rect x="955" y="202" width="1" height="35" fill="#757575"/>
<rect x="955" y="239" width="1" height="35" fill="#757575"/>
<rect x="955" y="276" width="1" height="35" fill="#9a9a9a"/>
<rect x="955" y="313" width="1" height="35" fill="#757575"/>
<rect x="955" y="350" width="1" height="35" fill="#757575"/>
<rect x="955" y="387" width="1" height="35" fill="#757575"/>
<rect x="955" y="424" width="1" height="35" fill="#757575"/>
<rect x="955" y="461" width="1" height="35" fill="#757575"/>
<rect x="955" y="498" width="1" height="17" fill="#757575"/>
<rect x="955" y="517" width="1" height="17" fill="#757575"/>
<rect x="955" y="536" width="1" height="35" fill="#757575"/>
<rect x="955" y="573" width="1" height="13" fill="#757575"/>
<rect x="955" y="588" width="1" height="18" fill="#757575"/>
<rect x="955" y="608" width="1" height="17" fill="#757575"/>
<rect x="955" y="627" width="1" height="17" fill="#757575"/>
<rect x="972" y="119" width="1" height="7" fill="#757575"/>
<rect x="972" y="128" width="1" height="35" fill="#757575"/>
<rect x="972" y="165" width="1" height="35" fill="#757575"/>
<rect x="972" y="202" width="1" height="35" fill="#757575"/>
<rect x="972" y="239" width="1" height="35" fill="#757575"/>
<rect x="972" y="276" width="1" height="35" fill="#9a9a9a"/>
<rect x="972" y="313" width="1" height="35" fill="#757575"/>
<rect x="972" y="350" width="1" height="35" fill="#757575"/>
<rect x="972" y="387" width="1" height="35" fill="#757575"/>
<rect x="972" y="424" width="1" height="35" fill="#757575"/>
<rect x="972" y="461" width="1" height="35" fill="#757575"/>
<rect x="972" y="498" width="1" height="17" fill="#757575"/>
<rect x="972" y="517" width="1" height="17" fill="#757575"/>
<rect x="972" y="536" width="1" height="35" fill="#757575"/>
<rect x="972" y="573" width="1" height="13" fill="#757575"/>
<rect x="972" y="588" width="1" height="18" fill="#757575"/>
<rect x="972" y="608" width="1" height="17" fill="#757575"/>
<rect x="972" y="627" width="1" height="17" fill="#757575"/>
<rect x="989" y="119" width="1" height="7" fill="#757575"/>
<rect x="989" y="128" width="1" height="35" fill="#757575"/>
<rect x="989" y="165" width="1" height="35" fill="#757575"/>
<rect x="989" y="202" width="1" height="35" fill="#757575"/>
<rect x="989" y="239" width="1" height="35" fill="#757575"/>
<rect x="989" y="276" width="1" height="35" fill="#9a9a9a"/>
<rect x="989" y="313" width="1" height="35" fill="#757575"/>
<rect x="989" y="350" width="1" height="35" fill="#757575"/>
<rect x="989" y="387" width="1" height="35" fill="#757575"/>
<rect x="989" y="424" width="1" height="35" fill="#757575"/>
<rect x="989" y="461" width="1" height="35" fill="#757575"/>
<rect x="989" y="498" width="1" height="17" fill="#757575"/>
<rect x="989" y="517" width="1" height="17" fill="#757575"/>
<rect x="989" y="536" width="1" height="35" fill="#757575"/>
<rect x="989" y="573" width="1" height="13" fill="#757575"/>
<rect x="989" y="588" width="1" height="18" fill="#757575"/>
<rect x="989" y="608" width="1" height="17" fill="#757575"/>
<rect x="989" y="627" width="1" height="17" fill="#757575"/>
<rect x="1006" y="119" width="1" height="7" fill="#757575"/>
<rect x="1006" y="128" width="1" height="35" fill="#757575"/>
<rect x="1006" y="165" width="1" height="35" fill="#757575"/>
<rect x="1006" y="202" width="1" height="35" fill="#757575"/>
<rect x="1006" y="239" width="1" height="35" fill="#757575"/>
<rect x="1006" y="276" width="1" height="35" fill="#9a9a9a"/>
<rect x="1006" y="313" width="1" height="35" fill="#757575"/>
<rect x="1006" y="350" width="1" height="35" fill="#757575"/>
<rect x="1006" y="387" width="1" height="35" fill="#757575"/>
<rect x="1006" y="424" width="1" height="35" fill="#757575"/>
<rect x="1006" y="461" width="1" height="35" fill="#757575"/>
<rect x="1006" y="498" width="1" height="17" fill="#757575"/>
<rect x="1006" y="517" width="1" height="17" fill="#757575"/>
<rect x="1006" y="536" width="1" height="35" fill="#757575"/>
<rect x="1006" y="573" width="1" height="13" fill="#757575"/>
<rect x="1006" y="588" width="1" height="18" fill="#757575"/>
<rect x="1006" y="608" width="1" height="17" fill="#757575"/>
<rect x="1006" y="627" width="1" height="17" fill="#757575"/>
<rect x="98" y="276" width="33" height="35" fill="#8b8b8b"/>
<rect x="447.5" y="276" width="6.5" height="35" fill="#ababab"/>
<rect x="873.5" y="276" width="6" height="35" fill="#ababab"/>
<rect x="890.5" y="276" width="5.5" height="35" fill="#ababab"/>
<rect x="907.5" y="276" width="5.5" height="35" fill="#ababab"/>
<rect x="63.5" y="119" width="238" height="7" fill="#2c2c2c"/>
<rect x="131" y="119" width="1" height="7" fill="#9a9a9a"/>
<rect x="165" y="119" width="1" height="7" fill="#9a9a9a"/>
<rect x="233" y="119" width="1" height="7" fill="#9a9a9a"/>
<rect x="302" y="119" width="145" height="7" fill="#343434"/>
<rect x="659" y="119" width="136" height="7" fill="#343434"/>
<rect x="863" y="119" width="62" height="7" fill="#343434"/>
<rect x="305" y="119" width="1" height="7" fill="#a2a2a2"/>
<rect x="310" y="119" width="1" height="7" fill="#a2a2a2"/>
<rect x="310" y="124.5" width="1" height="1.5" fill="#e8e8e8"/>
<rect x="316" y="119" width="1" height="7" fill="#a2a2a2"/>
<rect x="316" y="124.5" width="1" height="1.5" fill="#e8e8e8"/>
<rect x="319" y="119" width="2" height="7" fill="#a2a2a2"/>
<rect x="319" y="124.5" width="1" height="1.5" fill="#e8e8e8"/>
<rect x="323" y="119" width="1.5" height="7" fill="#a2a2a2"/>
<rect x="328" y="119" width="1" height="7" fill="#a2a2a2"/>
<rect x="330" y="119" width="2" height="7" fill="#a2a2a2"/>
<rect x="330" y="124.5" width="1" height="1.5" fill="#e8e8e8"/>
<rect x="336" y="119" width="2" height="7" fill="#a2a2a2"/>
<rect x="342" y="119" width="2" height="7" fill="#a2a2a2"/>
<rect x="342" y="124.5" width="1" height="1.5" fill="#e8e8e8"/>
<rect x="348" y="119" width="1" height="7" fill="#a2a2a2"/>
<rect x="352" y="119" width="1" height="7" fill="#a2a2a2"/>
<rect x="358" y="119" width="1" height="7" fill="#a2a2a2"/>
<rect x="364" y="119" width="1" height="7" fill="#a2a2a2"/>
<rect x="364" y="124.5" width="1" height="1.5" fill="#e8e8e8"/>
<rect x="370" y="119" width="1" height="7" fill="#a2a2a2"/>
<rect x="370" y="124.5" width="1" height="1.5" fill="#e8e8e8"/>
<rect x="376" y="119" width="1" height="7" fill="#a2a2a2"/>
<rect x="382" y="119" width="1" height="7" fill="#a2a2a2"/>
<rect x="388" y="119" width="1.5" height="7" fill="#a2a2a2"/>
<rect x="393" y="119" width="2" height="7" fill="#a2a2a2"/>
<rect x="398" y="119" width="1" height="7" fill="#a2a2a2"/>
<rect x="398" y="124.5" width="1" height="1.5" fill="#e8e8e8"/>
<rect x="402" y="119" width="1" height="7" fill="#a2a2a2"/>
<rect x="402" y="124.5" width="1" height="1.5" fill="#e8e8e8"/>
<rect x="406" y="119" width="2" height="7" fill="#a2a2a2"/>
<rect x="411" y="119" width="1.5" height="7" fill="#a2a2a2"/>
<rect x="411" y="124.5" width="1" height="1.5" fill="#e8e8e8"/>
<rect x="414" y="119" width="1" height="7" fill="#a2a2a2"/>
<rect x="418" y="119" width="1" height="7" fill="#a2a2a2"/>
<rect x="418" y="124.5" width="1" height="1.5" fill="#e8e8e8"/>
<rect x="424" y="119" width="1.5" height="7" fill="#a2a2a2"/>
<rect x="424" y="124.5" width="1" height="1.5" fill="#e8e8e8"/>
<rect x="432" y="119" width="1" height="7" fill="#a2a2a2"/>
<rect x="662" y="119" width="1" height="7" fill="#a2a2a2"/>
<rect x="662" y="124.5" width="1" height="1.5" fill="#e8e8e8"/>
<rect x="666" y="119" width="2" height="7" fill="#a2a2a2"/>
<rect x="672" y="119" width="1" height="7" fill="#a2a2a2"/>
<rect x="676" y="119" width="1.5" height="7" fill="#a2a2a2"/>
<rect x="680" y="119" width="1" height="7" fill="#a2a2a2"/>
<rect x="684" y="119" width="2" height="7" fill="#a2a2a2"/>
<rect x="690" y="119" width="1" height="7" fill="#a2a2a2"/>
<rect x="698" y="119" width="1" height="7" fill="#a2a2a2"/>
<rect x="698" y="124.5" width="1" height="1.5" fill="#e8e8e8"/>
<rect x="702" y="119" width="1" height="7" fill="#a2a2a2"/>
<rect x="702" y="124.5" width="1" height="1.5" fill="#e8e8e8"/>
<rect x="706" y="119" width="1.5" height="7" fill="#a2a2a2"/>
<rect x="706" y="124.5" width="1" height="1.5" fill="#e8e8e8"/>
<rect x="710" y="119" width="1" height="7" fill="#a2a2a2"/>
<rect x="715" y="119" width="1.5" height="7" fill="#a2a2a2"/>
<rect x="720" y="119" width="1" height="7" fill="#a2a2a2"/>
<rect x="720" y="124.5" width="1" height="1.5" fill="#e8e8e8"/>
<rect x="726" y="119" width="2" height="7" fill="#a2a2a2"/>
<rect x="726" y="124.5" width="1" height="1.5" fill="#e8e8e8"/>
<rect x="730" y="119" width="1.5" height="7" fill="#a2a2a2"/>
<rect x="735" y="119" width="1.5" height="7" fill="#a2a2a2"/>
<rect x="744" y="119" width="1.5" height="7" fill="#a2a2a2"/>
<rect x="748" y="119" width="1" height="7" fill="#a2a2a2"/>
<rect x="748" y="124.5" width="1" height="1.5" fill="#e8e8e8"/>
<rect x="752" y="119" width="1" height="7" fill="#a2a2a2"/>
<rect x="752" y="124.5" width="1" height="1.5" fill="#e8e8e8"/>
<rect x="758" y="119" width="1" height="7" fill="#a2a2a2"/>
<rect x="758" y="124.5" width="1" height="1.5" fill="#e8e8e8"/>
<rect x="761" y="119" width="1" height="7" fill="#a2a2a2"/>
<rect x="765" y="119" width="2" height="7" fill="#a2a2a2"/>
<rect x="770" y="119" width="2" height="7" fill="#a2a2a2"/>
<rect x="779" y="119" width="1" height="7" fill="#a2a2a2"/>
<rect x="787" y="119" width="2" height="7" fill="#a2a2a2"/>
<rect x="787" y="124.5" width="1" height="1.5" fill="#e8e8e8"/>
<rect x="866" y="119" width="1.5" height="7" fill="#a2a2a2"/>
<rect x="866" y="124.5" width="1" height="1.5" fill="#e8e8e8"/>
<rect x="874" y="119" width="1.5" height="7" fill="#a2a2a2"/>
<rect x="874" y="124.5" width="1" height="1.5" fill="#e8e8e8"/>
<rect x="878" y="119" width="1" height="7" fill="#a2a2a2"/>
<rect x="881" y="119" width="1" height="7" fill="#a2a2a2"/>
<rect x="884" y="119" width="1" height="7" fill="#a2a2a2"/>
<rect x="890" y="119" width="1" height="7" fill="#a2a2a2"/>
<rect x="896" y="119" width="1" height="7" fill="#a2a2a2"/>
<rect x="896" y="124.5" width="1" height="1.5" fill="#e8e8e8"/>
<rect x="900" y="119" width="2" height="7" fill="#a2a2a2"/>
<rect x="900" y="124.5" width="1" height="1.5" fill="#e8e8e8"/>
<rect x="909" y="119" width="1" height="7" fill="#a2a2a2"/>
<rect x="915" y="119" width="1" height="7" fill="#a2a2a2"/>
<rect x="918" y="119" width="1.5" height="7" fill="#a2a2a2"/>
<rect x="447" y="119" width="8" height="7" fill="#2c2c2c"/>
<rect x="455" y="119" width="186" height="7" fill="#27391b"/>
<rect x="488" y="119" width="1" height="7" fill="#58c030"/>
<rect x="498" y="119" width="1" height="7" fill="#58c030"/>
<rect x="501" y="119" width="1" height="7" fill="#58c030"/>
<rect x="517" y="119" width="1" height="7" fill="#58c030"/>
<rect x="523" y="119" width="1" height="7" fill="#58c030"/>
<rect x="590" y="119" width="1" height="7" fill="#58c030"/>
<rect x="498" y="119" width="3" height="7" fill="#777"/>
<rect x="517" y="119" width="5" height="7" fill="#777"/>
<rect x="641" y="119" width="18" height="7" fill="#2c2c2c"/>
<path d="M284 119.5h8l-4 2l9 4h-9l-4-3z" fill="#e8e8e8"/>
<path d="M440 119.5h8l-4 2l9 4h-9l-4-3z" fill="#e8e8e8"/>
<path d="M642 119.5h8l-4 2l9 4h-9l-4-3z" fill="#e8e8e8"/>
<rect x="98" y="128" width="68" height="35" fill="#fbfbfb"/>
<rect x="98" y="144" width="68" height="1" fill="#b5b5b5"/>
<rect x="106" y="144" width="1" height="19" fill="#b5b5b5"/>
<rect x="123" y="144" width="1" height="19" fill="#b5b5b5"/>
<rect x="140" y="144" width="1" height="19" fill="#b5b5b5"/>
<rect x="157" y="144" width="1" height="19" fill="#b5b5b5"/>
<rect x="98" y="128" width="1" height="35" fill="#b5b5b5"/>
<path d="M101.5 151.5v2M110.0 151.5v2M118.5 151.5v2M127.0 151.5v2M135.5 151.5v2M144.0 151.5v2M152.5 151.5v2M161.0 151.5v2" stroke="#111" stroke-width="0.900" fill="none"/><path d="M104.0 154.3h2.2M113.0 154.5h1M121.0 154.3h2.2M129.5 154.5h1M131.5 154.5h1M138.0 154.3h2.2M147.0 154.5h1M155.0 154.3h2.2M163.5 154.5h1M165.5 154.5h1" stroke="#111" stroke-width="2" fill="none"/>
<clipPath id="c1440"><rect x="98" y="128" width="67" height="35"/></clipPath>
<text x="100.5" y="139.7" font-size="10" fill="#1a1a40" font-weight="normal" text-anchor="start" clip-path="url(#c1440)" letter-spacing="0.12" stroke="#1a1a40" stroke-width="0.2">MIDI SD_140_</text>
<rect x="166" y="128" width="68" height="35" fill="#fbfbfb"/>
<rect x="166" y="144" width="68" height="1" fill="#b5b5b5"/>
<rect x="174" y="144" width="1" height="19" fill="#b5b5b5"/>
<rect x="191" y="144" width="1" height="19" fill="#b5b5b5"/>
<rect x="208" y="144" width="1" height="19" fill="#b5b5b5"/>
<rect x="225" y="144" width="1" height="19" fill="#b5b5b5"/>
<rect x="166" y="128" width="1" height="35" fill="#b5b5b5"/>
<path d="M169.5 151.5v2M178.0 151.5v2M186.5 151.5v2M195.0 151.5v2M203.5 151.5v2M212.0 151.5v2M220.5 151.5v2M229.0 151.5v2" stroke="#111" stroke-width="0.900" fill="none"/><path d="M172.0 154.3h2.2M181.0 154.5h1M189.0 154.3h2.2M197.5 154.5h1M199.5 154.5h1M206.0 154.3h2.2M215.0 154.5h1M223.0 154.3h2.2M231.5 154.5h1M233.5 154.5h1" stroke="#111" stroke-width="2" fill="none"/>
<clipPath id="c1450"><rect x="166" y="128" width="67" height="35"/></clipPath>
<text x="168.5" y="139.7" font-size="10" fill="#1a1a40" font-weight="normal" text-anchor="start" clip-path="url(#c1450)" letter-spacing="0.12" stroke="#1a1a40" stroke-width="0.2">MIDI SD_140_</text>
<rect x="234" y="128" width="48" height="35" fill="#fbfbfb"/>
<rect x="234" y="144" width="48" height="1" fill="#b5b5b5"/>
<rect x="242" y="144" width="1" height="19" fill="#b5b5b5"/>
<rect x="259" y="144" width="1" height="19" fill="#b5b5b5"/>
<rect x="276" y="144" width="1" height="19" fill="#b5b5b5"/>
<rect x="234" y="128" width="1" height="35" fill="#b5b5b5"/>
<path d="M237.5 151.5v2M246.0 151.5v2M254.5 151.5v2M263.0 151.5v2M271.5 151.5v2" stroke="#111" stroke-width="0.900" fill="none"/><path d="M240.0 154.3h2.2M249.0 154.5h1M257.0 154.3h2.2M265.5 154.5h1M267.5 154.5h1M274.0 154.3h2.2" stroke="#111" stroke-width="2" fill="none"/>
<clipPath id="c1459"><rect x="234" y="128" width="47" height="35"/></clipPath>
<text x="236.5" y="139.7" font-size="10" fill="#1a1a40" font-weight="normal" text-anchor="start" clip-path="url(#c1459)" letter-spacing="0.12" stroke="#1a1a40" stroke-width="0.2">MIDI SD_140_</text>
<rect x="455" y="128" width="43" height="35" fill="#fbfbfb"/>
<rect x="455" y="144" width="43" height="1" fill="#b5b5b5"/>
<rect x="463" y="144" width="1" height="19" fill="#b5b5b5"/>
<rect x="480" y="144" width="1" height="19" fill="#b5b5b5"/>
<rect x="497" y="144" width="1" height="19" fill="#b5b5b5"/>
<rect x="455" y="128" width="1" height="35" fill="#b5b5b5"/>
<path d="M458.5 151.5v2M467.0 151.5v2M475.5 151.5v2M484.0 151.5v2M492.5 151.5v2" stroke="#111" stroke-width="0.900" fill="none"/><path d="M461.0 154.3h2.2M470.0 154.5h1M478.0 154.3h2.2M486.5 154.5h1M488.5 154.5h1M495.0 154.3h2.2" stroke="#111" stroke-width="2" fill="none"/>
<clipPath id="c1468"><rect x="455" y="128" width="42" height="35"/></clipPath>
<text x="457.5" y="139.7" font-size="10" fill="#1a1a40" font-weight="normal" text-anchor="start" clip-path="url(#c1468)" letter-spacing="0.12" stroke="#1a1a40" stroke-width="0.2">MIDI SD_140</text>
<rect x="501" y="128" width="16" height="35" fill="#fbfbfb"/>
<rect x="501" y="144" width="16" height="1" fill="#b5b5b5"/>
<rect x="514" y="144" width="1" height="19" fill="#b5b5b5"/>
<rect x="501" y="128" width="1" height="35" fill="#b5b5b5"/>
<path d="M504.5 151.5v2" stroke="#111" stroke-width="0.900" fill="none"/><path d="M507.0 154.3h2.2" stroke="#111" stroke-width="2" fill="none"/>
<clipPath id="c1475"><rect x="501" y="128" width="15" height="35"/></clipPath>
<text x="503.5" y="139.7" font-size="10" fill="#1a1a40" font-weight="normal" text-anchor="start" clip-path="url(#c1475)" letter-spacing="0.12" stroke="#1a1a40" stroke-width="0.2">MIDI</text>
<rect x="523" y="128" width="68" height="35" fill="#fbfbfb"/>
<rect x="523" y="144" width="68" height="1" fill="#b5b5b5"/>
<rect x="530" y="144" width="1" height="19" fill="#b5b5b5"/>
<rect x="547" y="144" width="1" height="19" fill="#b5b5b5"/>
<rect x="564" y="144" width="1" height="19" fill="#b5b5b5"/>
<rect x="581" y="144" width="1" height="19" fill="#b5b5b5"/>
<rect x="523" y="128" width="1" height="35" fill="#b5b5b5"/>
<path d="M526.5 151.5v2M535.0 151.5v2M543.5 151.5v2M552.0 151.5v2M560.5 151.5v2M569.0 151.5v2M577.5 151.5v2M586.0 151.5v2" stroke="#111" stroke-width="0.900" fill="none"/><path d="M529.0 154.3h2.2M538.0 154.5h1M546.0 154.3h2.2M554.5 154.5h1M556.5 154.5h1M563.0 154.3h2.2M572.0 154.5h1M580.0 154.3h2.2M588.5 154.5h1M590.5 154.5h1" stroke="#111" stroke-width="2" fill="none"/>
<clipPath id="c1485"><rect x="523" y="128" width="67" height="35"/></clipPath>
<text x="525.5" y="139.7" font-size="10" fill="#1a1a40" font-weight="normal" text-anchor="start" clip-path="url(#c1485)" letter-spacing="0.12" stroke="#1a1a40" stroke-width="0.2">MIDI SD_140_</text>
<rect x="591" y="128" width="48" height="35" fill="#fbfbfb"/>
<rect x="591" y="144" width="48" height="1" fill="#b5b5b5"/>
<rect x="598" y="144" width="1" height="19" fill="#b5b5b5"/>
<rect x="615" y="144" width="1" height="19" fill="#b5b5b5"/>
<rect x="632" y="144" width="1" height="19" fill="#b5b5b5"/>
<rect x="591" y="128" width="1" height="35" fill="#b5b5b5"/>
<path d="M594.5 151.5v2M603.0 151.5v2M611.5 151.5v2M620.0 151.5v2M628.5 151.5v2" stroke="#111" stroke-width="0.900" fill="none"/><path d="M597.0 154.3h2.2M606.0 154.5h1M614.0 154.3h2.2M622.5 154.5h1M624.5 154.5h1M631.0 154.3h2.2" stroke="#111" stroke-width="2" fill="none"/>
<clipPath id="c1494"><rect x="591" y="128" width="47" height="35"/></clipPath>
<text x="593.5" y="139.7" font-size="10" fill="#1a1a40" font-weight="normal" text-anchor="start" clip-path="url(#c1494)" letter-spacing="0.12" stroke="#1a1a40" stroke-width="0.2">MIDI SD_140_</text>
<rect x="498" y="128" width="3" height="35" fill="#9a9a9a"/>
<rect x="517" y="128" width="6" height="35" fill="#9a9a9a"/>
<rect x="722" y="128" width="4" height="35" fill="#9a9a9a"/>
<rect x="302" y="128" width="67" height="35" fill="#09bdae"/>
<rect x="302" y="144" width="67" height="1" fill="#07978b"/>
<rect x="310" y="144" width="1" height="19" fill="#07978b"/>
<rect x="327" y="144" width="1" height="19" fill="#07978b"/>
<rect x="344" y="144" width="1" height="19" fill="#07978b"/>
<rect x="361" y="144" width="1" height="19" fill="#07978b"/>
<rect x="302" y="128" width="1" height="35" fill="#07978b"/>
<path d="M304.0 152.5h6M312.0 152.5h4M316.5 152.5h3M320.0 152.5h4M325.0 152.5h6M332.0 152.5h2M335.0 152.5h4M340.0 152.5h2M343.0 152.5h2M346.0 152.5h4M351.0 152.5h4M356.0 152.5h4M361.0 152.5h3M365.0 152.5h6" stroke="#0a2a28" stroke-width="1.600" fill="none"/>
<path d="M306.0 160v2.500M314.0 160v2.500M325.0 160v2.500M334.0 160v2.500M340.0 160v2.500M346.0 160v2.500M355.0 160v2.500M366.0 160v2.500" stroke="#0a2a28" stroke-width="0.800" fill="none"/>
<clipPath id="c1508"><rect x="302" y="128" width="66" height="35"/></clipPath>
<text x="304.5" y="139.7" font-size="10" fill="#063c38" font-weight="normal" text-anchor="start" clip-path="url(#c1508)" letter-spacing="0.12" stroke="#063c38" stroke-width="0.2">4 1-DS ---Drums</text>
<rect x="369" y="128" width="70" height="35" fill="#09bdae"/>
<rect x="369" y="144" width="70" height="1" fill="#07978b"/>
<rect x="378" y="144" width="1" height="19" fill="#07978b"/>
<rect x="395" y="144" width="1" height="19" fill="#07978b"/>
<rect x="412" y="144" width="1" height="19" fill="#07978b"/>
<rect x="429" y="144" width="1" height="19" fill="#07978b"/>
<rect x="369" y="128" width="1" height="35" fill="#07978b"/>
<path d="M371.0 152.5h3M375.0 152.5h6M382.0 152.5h4M386.5 152.5h3M390.0 152.5h3M395.0 152.5h3M399.0 152.5h3M404.0 152.5h2M408.0 152.5h4M412.5 152.5h2M416.5 152.5h3M421.5 152.5h3M426.5 152.5h4M431.0 152.5h6" stroke="#0a2a28" stroke-width="1.600" fill="none"/>
<path d="M373.0 160v2.500M384.0 160v2.500M390.0 160v2.500M398.0 160v2.500M406.0 160v2.500M414.0 160v2.500M420.0 160v2.500M428.0 160v2.500" stroke="#0a2a28" stroke-width="0.800" fill="none"/>
<clipPath id="c1519"><rect x="369" y="128" width="69" height="35"/></clipPath>
<text x="371.5" y="139.7" font-size="10" fill="#063c38" font-weight="normal" text-anchor="start" clip-path="url(#c1519)" letter-spacing="0.12" stroke="#063c38" stroke-width="0.2">4 1-DS ---Drums</text>
<rect x="659" y="128" width="63" height="35" fill="#09bdae"/>
<rect x="659" y="144" width="63" height="1" fill="#07978b"/>
<rect x="666" y="144" width="1" height="19" fill="#07978b"/>
<rect x="683" y="144" width="1" height="19" fill="#07978b"/>
<rect x="700" y="144" width="1" height="19" fill="#07978b"/>
<rect x="717" y="144" width="1" height="19" fill="#07978b"/>
<rect x="659" y="128" width="1" height="35" fill="#07978b"/>
<path d="M661.0 152.5h3M666.0 152.5h4M671.0 152.5h3M674.5 152.5h2M677.0 152.5h3M682.0 152.5h3M686.0 152.5h2M689.0 152.5h3M693.0 152.5h3M697.0 152.5h4M703.0 152.5h3M706.5 152.5h4M712.5 152.5h6" stroke="#0a2a28" stroke-width="1.600" fill="none"/>
<path d="M663.0 160v2.500M671.0 160v2.500M677.0 160v2.500M688.0 160v2.500M696.0 160v2.500M702.0 160v2.500M710.0 160v2.500M718.0 160v2.500" stroke="#0a2a28" stroke-width="0.800" fill="none"/>
<clipPath id="c1530"><rect x="659" y="128" width="62" height="35"/></clipPath>
<text x="661.5" y="139.7" font-size="10" fill="#063c38" font-weight="normal" text-anchor="start" clip-path="url(#c1530)" letter-spacing="0.12" stroke="#063c38" stroke-width="0.2">4 1-DS ---Drums</text>
<rect x="726" y="128" width="69" height="35" fill="#09bdae"/>
<rect x="726" y="144" width="69" height="1" fill="#07978b"/>
<rect x="734" y="144" width="1" height="19" fill="#07978b"/>
<rect x="751" y="144" width="1" height="19" fill="#07978b"/>
<rect x="768" y="144" width="1" height="19" fill="#07978b"/>
<rect x="785" y="144" width="1" height="19" fill="#07978b"/>
<rect x="726" y="128" width="1" height="35" fill="#07978b"/>
<path d="M728.0 152.5h6M734.5 152.5h2M737.5 152.5h6M744.0 152.5h2M747.0 152.5h3M751.0 152.5h2M753.5 152.5h6M760.0 152.5h2M764.0 152.5h4M769.0 152.5h4M775.0 152.5h6M782.0 152.5h4M787.0 152.5h6" stroke="#0a2a28" stroke-width="1.600" fill="none"/>
<path d="M730.0 160v2.500M741.0 160v2.500M747.0 160v2.500M758.0 160v2.500M769.0 160v2.500M778.0 160v2.500M784.0 160v2.500M792.0 160v2.500" stroke="#0a2a28" stroke-width="0.800" fill="none"/>
<clipPath id="c1541"><rect x="726" y="128" width="68" height="35"/></clipPath>
<text x="728.5" y="139.7" font-size="10" fill="#063c38" font-weight="normal" text-anchor="start" clip-path="url(#c1541)" letter-spacing="0.12" stroke="#063c38" stroke-width="0.2">4 1-DS ---Drums</text>
<rect x="863" y="128" width="62" height="35" fill="#09bdae"/>
<rect x="863" y="144" width="62" height="1" fill="#07978b"/>
<rect x="870" y="144" width="1" height="19" fill="#07978b"/>
<rect x="887" y="144" width="1" height="19" fill="#07978b"/>
<rect x="904" y="144" width="1" height="19" fill="#07978b"/>
<rect x="921" y="144" width="1" height="19" fill="#07978b"/>
<rect x="863" y="128" width="1" height="35" fill="#07978b"/>
<path d="M865.0 152.5h2M868.0 152.5h4M872.5 152.5h3M876.5 152.5h3M880.5 152.5h3M885.5 152.5h3M889.0 152.5h6M897.0 152.5h3M901.0 152.5h3M906.0 152.5h6M913.0 152.5h6M920.0 152.5h4" stroke="#0a2a28" stroke-width="1.600" fill="none"/>
<path d="M867.0 160v2.500M873.0 160v2.500M882.0 160v2.500M888.0 160v2.500M897.0 160v2.500M908.0 160v2.500M919.0 160v2.500" stroke="#0a2a28" stroke-width="0.800" fill="none"/>
<clipPath id="c1552"><rect x="863" y="128" width="61" height="35"/></clipPath>
<text x="865.5" y="139.7" font-size="10" fill="#063c38" font-weight="normal" text-anchor="start" clip-path="url(#c1552)" letter-spacing="0.12" stroke="#063c38" stroke-width="0.2">4 1-DS ---Drums</text>
<rect x="439" y="128" width="7.5" height="35" fill="#23d51b"/>
<rect x="439" y="144" width="7.5" height="1" fill="#1caa16"/>
<rect x="439" y="128" width="1" height="35" fill="#1caa16"/>
<rect x="440" y="146" width="6" height="1.5" fill="#0a3a08"/>
<rect x="795" y="128" width="7.5" height="35" fill="#23d51b"/>
<rect x="795" y="144" width="7.5" height="1" fill="#1caa16"/>
<rect x="795" y="128" width="1" height="35" fill="#1caa16"/>
<rect x="796" y="146" width="6" height="1.5" fill="#0a3a08"/>
<rect x="302" y="165" width="67" height="35" fill="#f83636"/>
<rect x="302" y="181" width="67" height="1" fill="#c62b2b"/>
<rect x="310" y="181" width="1" height="19" fill="#c62b2b"/>
<rect x="327" y="181" width="1" height="19" fill="#c62b2b"/>
<rect x="344" y="181" width="1" height="19" fill="#c62b2b"/>
<rect x="361" y="181" width="1" height="19" fill="#c62b2b"/>
<rect x="302" y="165" width="1" height="35" fill="#c62b2b"/>
<path d="M303.0 183.6L303.9 182.3L304.7 182.2L305.6 183.6L306.4 185.0L307.3 183.0L308.1 182.0L309.0 182.2L309.8 183.6L310.7 184.9L311.5 183.0L312.4 182.3L313.2 182.5L314.1 183.6L314.9 184.9L315.8 183.2L316.6 182.0L317.5 183.0L318.3 183.8L319.2 185.0L320.0 183.0L320.9 182.0L321.7 182.2L322.6 183.6L323.4 185.0L324.3 183.2L325.1 182.0L326.0 182.5L326.8 183.6L327.7 184.9L328.5 183.6L329.4 182.0L330.2 182.5L331.1 183.6L331.9 184.9L332.8 183.2L333.6 182.0L334.5 182.2L335.3 183.6L336.2 184.9L337.0 183.2L337.9 182.0L338.7 183.0L339.6 183.6L340.4 185.0L341.3 183.0L342.1 182.8L343.0 182.5L343.8 183.6L344.7 184.9L345.5 183.0L346.4 182.0L347.2 182.2L348.1 183.6L348.9 184.9L349.8 183.2L350.6 182.0L351.5 182.2L352.3 183.6L353.2 185.0L354.0 183.2L354.9 182.0L355.7 182.2L356.6 183.8L357.4 185.0L358.3 183.0L359.1 182.0L360.0 182.5L360.8 183.8L361.7 184.9L362.5 183.2L363.4 182.0L364.2 182.2L365.1 183.6L365.9 184.9L366.8 184.0L367.6 185.0L368.5 185.9L368.5 187.1L367.6 188.0L366.8 189.0L365.9 188.1L365.1 189.4L364.2 190.8L363.4 191.0L362.5 189.8L361.7 188.1L360.8 189.2L360.0 190.5L359.1 191.0L358.3 190.0L357.4 188.0L356.6 189.2L355.7 190.8L354.9 191.0L354.0 189.8L353.2 188.0L352.3 189.4L351.5 190.8L350.6 191.0L349.8 189.8L348.9 188.1L348.1 189.4L347.2 190.8L346.4 191.0L345.5 190.0L344.7 188.1L343.8 189.4L343.0 190.5L342.1 190.2L341.3 190.0L340.4 188.0L339.6 189.4L338.7 190.0L337.9 191.0L337.0 189.8L336.2 188.1L335.3 189.4L334.5 190.8L333.6 191.0L332.8 189.8L331.9 188.1L331.1 189.4L330.2 190.5L329.4 191.0L328.5 189.4L327.7 188.1L326.8 189.4L326.0 190.5L325.1 191.0L324.3 189.8L323.4 188.0L322.6 189.4L321.7 190.8L320.9 191.0L320.0 190.0L319.2 188.0L318.3 189.2L317.5 190.0L316.6 191.0L315.8 189.8L314.9 188.1L314.1 189.4L313.2 190.5L312.4 190.7L311.5 190.0L310.7 188.1L309.8 189.4L309.0 190.8L308.1 191.0L307.3 190.0L306.4 188.0L305.6 189.4L304.7 190.8L303.9 190.7L303.0 189.4z" fill="#3a0a0a"/>
<path d="M303.0 192.1L303.9 190.5L304.7 191.5L305.6 192.1L306.4 193.5L307.3 192.1L308.1 190.5L309.0 191.5L309.8 192.1L310.7 193.5L311.5 191.5L312.4 190.5L313.2 191.0L314.1 192.1L314.9 193.4L315.8 192.1L316.6 190.8L317.5 190.7L318.3 192.1L319.2 193.4L320.0 191.5L320.9 190.8L321.7 191.5L322.6 192.1L323.4 193.4L324.3 191.5L325.1 191.3L326.0 190.7L326.8 192.3L327.7 193.4L328.5 191.5L329.4 190.8L330.2 190.7L331.1 192.5L331.9 193.4L332.8 191.5L333.6 190.8L334.5 191.5L335.3 192.1L336.2 193.5L337.0 191.7L337.9 190.8L338.7 190.7L339.6 192.3L340.4 193.4L341.3 191.5L342.1 190.8L343.0 190.7L343.8 192.3L344.7 193.4L345.5 191.5L346.4 190.8L347.2 191.5L348.1 192.1L348.9 193.5L349.8 191.7L350.6 190.5L351.5 190.7L352.3 192.1L353.2 193.4L354.0 191.5L354.9 190.5L355.7 191.0L356.6 192.1L357.4 193.4L358.3 192.1L359.1 190.5L360.0 190.7L360.8 192.5L361.7 193.4L362.5 191.7L363.4 190.8L364.2 190.7L365.1 192.1L365.9 193.4L366.8 192.5L367.6 193.5L368.5 194.4L368.5 195.6L367.6 196.5L366.8 197.5L365.9 196.6L365.1 197.9L364.2 199.3L363.4 199.2L362.5 198.3L361.7 196.6L360.8 197.5L360.0 199.3L359.1 199.5L358.3 197.9L357.4 196.6L356.6 197.9L355.7 199.0L354.9 199.5L354.0 198.5L353.2 196.6L352.3 197.9L351.5 199.3L350.6 199.5L349.8 198.3L348.9 196.5L348.1 197.9L347.2 198.5L346.4 199.2L345.5 198.5L344.7 196.6L343.8 197.7L343.0 199.3L342.1 199.2L341.3 198.5L340.4 196.6L339.6 197.7L338.7 199.3L337.9 199.2L337.0 198.3L336.2 196.5L335.3 197.9L334.5 198.5L333.6 199.2L332.8 198.5L331.9 196.6L331.1 197.5L330.2 199.3L329.4 199.2L328.5 198.5L327.7 196.6L326.8 197.7L326.0 199.3L325.1 198.7L324.3 198.5L323.4 196.6L322.6 197.9L321.7 198.5L320.9 199.2L320.0 198.5L319.2 196.6L318.3 197.9L317.5 199.3L316.6 199.2L315.8 197.9L314.9 196.6L314.1 197.9L313.2 199.0L312.4 199.5L311.5 198.5L310.7 196.5L309.8 197.9L309.0 198.5L308.1 199.5L307.3 197.9L306.4 196.5L305.6 197.9L304.7 198.5L303.9 199.5L303.0 197.9z" fill="#3a0a0a"/>
<clipPath id="c1571"><rect x="302" y="165" width="66" height="35"/></clipPath>
<text x="304.5" y="176.7" font-size="10" fill="#5c0c0c" font-weight="normal" text-anchor="start" clip-path="url(#c1571)" letter-spacing="0.12" stroke="#5c0c0c" stroke-width="0.2">BRT_Full_Drums</text>
<rect x="369" y="165" width="68" height="35" fill="#f83636"/>
<rect x="369" y="181" width="68" height="1" fill="#c62b2b"/>
<rect x="378" y="181" width="1" height="19" fill="#c62b2b"/>
<rect x="395" y="181" width="1" height="19" fill="#c62b2b"/>
<rect x="412" y="181" width="1" height="19" fill="#c62b2b"/>
<rect x="429" y="181" width="1" height="19" fill="#c62b2b"/>
<rect x="369" y="165" width="1" height="35" fill="#c62b2b"/>
<path d="M370.0 185.3L370.9 183.5L371.7 182.9L372.6 182.1L373.4 183.5L374.3 185.3L375.1 183.3L376.0 182.1L376.8 182.1L377.7 183.8L378.5 185.3L379.4 183.3L380.2 182.1L381.1 182.1L381.9 183.3L382.8 185.3L383.6 183.3L384.5 182.1L385.3 182.1L386.2 183.3L387.0 185.3L387.9 183.3L388.7 182.4L389.6 182.1L390.4 183.8L391.3 185.3L392.1 183.3L393.0 182.1L393.8 182.1L394.7 183.3L395.5 185.3L396.4 183.8L397.2 182.4L398.1 182.1L398.9 183.8L399.8 185.3L400.6 183.3L401.5 182.1L402.3 182.1L403.2 183.3L404.0 185.3L404.9 183.8L405.7 182.4L406.6 182.1L407.4 183.5L408.3 185.3L409.1 183.3L410.0 182.1L410.8 182.9L411.7 183.8L412.5 185.3L413.4 183.3L414.2 182.9L415.1 182.4L415.9 183.3L416.8 185.3L417.6 183.3L418.5 182.1L419.3 182.1L420.2 183.3L421.0 185.3L421.9 183.5L422.7 182.4L423.6 182.1L424.4 183.3L425.3 185.3L426.1 183.3L427.0 182.9L427.8 182.1L428.7 183.8L429.5 185.3L430.4 183.3L431.2 182.1L432.1 182.9L432.9 183.5L433.8 185.3L434.6 183.9L435.5 184.8L436.3 185.7L436.3 187.3L435.5 188.2L434.6 189.1L433.8 187.7L432.9 189.5L432.1 190.1L431.2 190.9L430.4 189.7L429.5 187.7L428.7 189.2L427.8 190.9L427.0 190.1L426.1 189.7L425.3 187.7L424.4 189.7L423.6 190.9L422.7 190.6L421.9 189.5L421.0 187.7L420.2 189.7L419.3 190.9L418.5 190.9L417.6 189.7L416.8 187.7L415.9 189.7L415.1 190.6L414.2 190.1L413.4 189.7L412.5 187.7L411.7 189.2L410.8 190.1L410.0 190.9L409.1 189.7L408.3 187.7L407.4 189.5L406.6 190.9L405.7 190.6L404.9 189.2L404.0 187.7L403.2 189.7L402.3 190.9L401.5 190.9L400.6 189.7L399.8 187.7L398.9 189.2L398.1 190.9L397.2 190.6L396.4 189.2L395.5 187.7L394.7 189.7L393.8 190.9L393.0 190.9L392.1 189.7L391.3 187.7L390.4 189.2L389.6 190.9L388.7 190.6L387.9 189.7L387.0 187.7L386.2 189.7L385.3 190.9L384.5 190.9L383.6 189.7L382.8 187.7L381.9 189.7L381.1 190.9L380.2 190.9L379.4 189.7L378.5 187.7L377.7 189.2L376.8 190.9L376.0 190.9L375.1 189.7L374.3 187.7L373.4 189.5L372.6 190.9L371.7 190.1L370.9 189.5L370.0 187.7z" fill="#3a0a0a"/>
<path d="M370.0 193.8L370.9 191.8L371.7 190.6L372.6 190.6L373.4 192.0L374.3 193.8L375.1 192.3L376.0 190.6L376.8 190.9L377.7 192.3L378.5 193.8L379.4 191.8L380.2 191.4L381.1 190.9L381.9 192.3L382.8 193.8L383.6 191.8L384.5 190.6L385.3 190.6L386.2 191.8L387.0 193.8L387.9 191.8L388.7 190.9L389.6 190.9L390.4 191.8L391.3 193.8L392.1 191.8L393.0 190.9L393.8 190.6L394.7 192.0L395.5 193.8L396.4 192.3L397.2 191.4L398.1 191.4L398.9 191.8L399.8 193.8L400.6 191.8L401.5 191.4L402.3 191.4L403.2 192.3L404.0 193.8L404.9 191.8L405.7 191.4L406.6 190.9L407.4 192.3L408.3 193.8L409.1 191.8L410.0 190.9L410.8 190.6L411.7 192.0L412.5 193.8L413.4 192.3L414.2 190.6L415.1 190.6L415.9 191.8L416.8 193.8L417.6 192.0L418.5 190.9L419.3 190.6L420.2 192.3L421.0 193.8L421.9 191.8L422.7 190.6L423.6 190.9L424.4 192.3L425.3 193.8L426.1 191.8L427.0 190.9L427.8 190.6L428.7 191.8L429.5 193.8L430.4 191.8L431.2 190.6L432.1 190.9L432.9 192.3L433.8 193.8L434.6 192.4L435.5 193.3L436.3 194.2L436.3 195.8L435.5 196.7L434.6 197.6L433.8 196.2L432.9 197.7L432.1 199.1L431.2 199.4L430.4 198.2L429.5 196.2L428.7 198.2L427.8 199.4L427.0 199.1L426.1 198.2L425.3 196.2L424.4 197.7L423.6 199.1L422.7 199.4L421.9 198.2L421.0 196.2L420.2 197.7L419.3 199.4L418.5 199.1L417.6 198.0L416.8 196.2L415.9 198.2L415.1 199.4L414.2 199.4L413.4 197.7L412.5 196.2L411.7 198.0L410.8 199.4L410.0 199.1L409.1 198.2L408.3 196.2L407.4 197.7L406.6 199.1L405.7 198.6L404.9 198.2L404.0 196.2L403.2 197.7L402.3 198.6L401.5 198.6L400.6 198.2L399.8 196.2L398.9 198.2L398.1 198.6L397.2 198.6L396.4 197.7L395.5 196.2L394.7 198.0L393.8 199.4L393.0 199.1L392.1 198.2L391.3 196.2L390.4 198.2L389.6 199.1L388.7 199.1L387.9 198.2L387.0 196.2L386.2 198.2L385.3 199.4L384.5 199.4L383.6 198.2L382.8 196.2L381.9 197.7L381.1 199.1L380.2 198.6L379.4 198.2L378.5 196.2L377.7 197.7L376.8 199.1L376.0 199.4L375.1 197.7L374.3 196.2L373.4 198.0L372.6 199.4L371.7 199.4L370.9 198.2L370.0 196.2z" fill="#3a0a0a"/>
<clipPath id="c1582"><rect x="369" y="165" width="67" height="35"/></clipPath>
<text x="371.5" y="176.7" font-size="10" fill="#5c0c0c" font-weight="normal" text-anchor="start" clip-path="url(#c1582)" letter-spacing="0.12" stroke="#5c0c0c" stroke-width="0.2">BRT_Full_Drums</text>
<rect x="659" y="165" width="67" height="35" fill="#f83636"/>
<rect x="659" y="181" width="67" height="1" fill="#c62b2b"/>
<rect x="666" y="181" width="1" height="19" fill="#c62b2b"/>
<rect x="683" y="181" width="1" height="19" fill="#c62b2b"/>
<rect x="700" y="181" width="1" height="19" fill="#c62b2b"/>
<rect x="717" y="181" width="1" height="19" fill="#c62b2b"/>
<rect x="659" y="165" width="1" height="35" fill="#c62b2b"/>
<path d="M660.0 183.6L660.9 182.0L661.7 183.0L662.6 183.6L663.4 184.9L664.3 183.0L665.1 182.0L666.0 182.2L666.8 184.0L667.7 185.0L668.5 183.0L669.4 182.0L670.2 182.5L671.1 184.0L671.9 184.9L672.8 183.0L673.6 182.0L674.5 182.2L675.3 184.0L676.2 185.0L677.0 183.2L677.9 182.3L678.7 182.5L679.6 183.8L680.4 185.0L681.3 183.6L682.1 182.0L683.0 182.5L683.8 184.0L684.7 184.9L685.5 183.6L686.4 182.0L687.2 182.2L688.1 183.6L688.9 184.9L689.8 183.0L690.6 182.0L691.5 183.0L692.3 183.6L693.2 184.9L694.0 183.6L694.9 182.3L695.7 183.0L696.6 184.0L697.4 184.9L698.3 183.0L699.1 182.0L700.0 182.2L700.8 183.6L701.7 184.9L702.5 183.2L703.4 182.0L704.2 182.2L705.1 183.8L705.9 184.9L706.8 183.2L707.6 182.3L708.5 182.2L709.3 183.6L710.2 184.9L711.0 183.6L711.9 182.8L712.7 183.0L713.6 183.6L714.4 184.9L715.3 183.6L716.1 182.3L717.0 182.5L717.8 183.6L718.7 185.0L719.5 183.2L720.4 182.0L721.2 182.5L722.1 183.6L722.9 184.9L723.8 184.0L724.6 185.0L725.5 185.9L725.5 187.1L724.6 188.0L723.8 189.0L722.9 188.1L722.1 189.4L721.2 190.5L720.4 191.0L719.5 189.8L718.7 188.0L717.8 189.4L717.0 190.5L716.1 190.7L715.3 189.4L714.4 188.1L713.6 189.4L712.7 190.0L711.9 190.2L711.0 189.4L710.2 188.1L709.3 189.4L708.5 190.8L707.6 190.7L706.8 189.8L705.9 188.1L705.1 189.2L704.2 190.8L703.4 191.0L702.5 189.8L701.7 188.1L700.8 189.4L700.0 190.8L699.1 191.0L698.3 190.0L697.4 188.1L696.6 189.0L695.7 190.0L694.9 190.7L694.0 189.4L693.2 188.1L692.3 189.4L691.5 190.0L690.6 191.0L689.8 190.0L688.9 188.1L688.1 189.4L687.2 190.8L686.4 191.0L685.5 189.4L684.7 188.1L683.8 189.0L683.0 190.5L682.1 191.0L681.3 189.4L680.4 188.0L679.6 189.2L678.7 190.5L677.9 190.7L677.0 189.8L676.2 188.0L675.3 189.0L674.5 190.8L673.6 191.0L672.8 190.0L671.9 188.1L671.1 189.0L670.2 190.5L669.4 191.0L668.5 190.0L667.7 188.0L666.8 189.0L666.0 190.8L665.1 191.0L664.3 190.0L663.4 188.1L662.6 189.4L661.7 190.0L660.9 191.0L660.0 189.4z" fill="#3a0a0a"/>
<path d="M660.0 191.7L660.9 190.5L661.7 191.5L662.6 192.5L663.4 193.5L664.3 192.1L665.1 190.8L666.0 190.7L666.8 192.1L667.7 193.4L668.5 192.1L669.4 191.3L670.2 190.7L671.1 192.5L671.9 193.4L672.8 191.5L673.6 191.3L674.5 190.7L675.3 192.5L676.2 193.5L677.0 191.5L677.9 190.5L678.7 190.7L679.6 192.1L680.4 193.4L681.3 191.5L682.1 190.5L683.0 191.5L683.8 192.1L684.7 193.4L685.5 191.5L686.4 190.5L687.2 190.7L688.1 192.1L688.9 193.4L689.8 191.5L690.6 190.8L691.5 190.7L692.3 192.3L693.2 193.4L694.0 192.1L694.9 190.5L695.7 190.7L696.6 192.1L697.4 193.5L698.3 191.5L699.1 190.5L700.0 190.7L700.8 192.5L701.7 193.5L702.5 191.5L703.4 190.5L704.2 190.7L705.1 192.1L705.9 193.4L706.8 191.7L707.6 191.3L708.5 191.0L709.3 192.3L710.2 193.4L711.0 192.1L711.9 190.5L712.7 190.7L713.6 192.1L714.4 193.4L715.3 191.5L716.1 191.3L717.0 191.0L717.8 192.1L718.7 193.4L719.5 191.5L720.4 191.3L721.2 191.5L722.1 192.1L722.9 193.5L723.8 192.5L724.6 193.5L725.5 194.4L725.5 195.6L724.6 196.5L723.8 197.5L722.9 196.5L722.1 197.9L721.2 198.5L720.4 198.7L719.5 198.5L718.7 196.6L717.8 197.9L717.0 199.0L716.1 198.7L715.3 198.5L714.4 196.6L713.6 197.9L712.7 199.3L711.9 199.5L711.0 197.9L710.2 196.6L709.3 197.7L708.5 199.0L707.6 198.7L706.8 198.3L705.9 196.6L705.1 197.9L704.2 199.3L703.4 199.5L702.5 198.5L701.7 196.5L700.8 197.5L700.0 199.3L699.1 199.5L698.3 198.5L697.4 196.5L696.6 197.9L695.7 199.3L694.9 199.5L694.0 197.9L693.2 196.6L692.3 197.7L691.5 199.3L690.6 199.2L689.8 198.5L688.9 196.6L688.1 197.9L687.2 199.3L686.4 199.5L685.5 198.5L684.7 196.6L683.8 197.9L683.0 198.5L682.1 199.5L681.3 198.5L680.4 196.6L679.6 197.9L678.7 199.3L677.9 199.5L677.0 198.5L676.2 196.5L675.3 197.5L674.5 199.3L673.6 198.7L672.8 198.5L671.9 196.6L671.1 197.5L670.2 199.3L669.4 198.7L668.5 197.9L667.7 196.6L666.8 197.9L666.0 199.3L665.1 199.2L664.3 197.9L663.4 196.5L662.6 197.5L661.7 198.5L660.9 199.5L660.0 198.3z" fill="#3a0a0a"/>
<clipPath id="c1593"><rect x="659" y="165" width="66" height="35"/></clipPath>
<text x="661.5" y="176.7" font-size="10" fill="#5c0c0c" font-weight="normal" text-anchor="start" clip-path="url(#c1593)" letter-spacing="0.12" stroke="#5c0c0c" stroke-width="0.2">BRT_Full_Drums</text>
<rect x="726" y="165" width="68.5" height="35" fill="#f83636"/>
<rect x="726" y="181" width="68.5" height="1" fill="#c62b2b"/>
<rect x="734" y="181" width="1" height="19" fill="#c62b2b"/>
<rect x="751" y="181" width="1" height="19" fill="#c62b2b"/>
<rect x="768" y="181" width="1" height="19" fill="#c62b2b"/>
<rect x="785" y="181" width="1" height="19" fill="#c62b2b"/>
<rect x="726" y="165" width="1" height="35" fill="#c62b2b"/>
<path d="M727.0 185.3L727.9 183.8L728.7 182.1L729.6 182.4L730.4 183.8L731.3 185.3L732.1 183.8L733.0 182.1L733.8 182.1L734.7 183.5L735.5 185.3L736.4 183.3L737.2 182.1L738.1 182.9L738.9 183.3L739.8 185.3L740.6 183.3L741.5 182.1L742.3 182.9L743.2 183.3L744.0 185.3L744.9 183.5L745.7 182.1L746.6 182.1L747.4 183.8L748.3 185.3L749.1 183.3L750.0 182.1L750.8 182.9L751.7 183.8L752.5 185.3L753.4 183.3L754.2 182.1L755.1 182.9L755.9 183.3L756.8 185.3L757.6 183.3L758.5 182.1L759.3 182.1L760.2 183.8L761.0 185.3L761.9 183.3L762.7 182.1L763.6 182.9L764.4 183.8L765.3 185.3L766.1 183.3L767.0 182.1L767.8 182.1L768.7 183.5L769.5 185.3L770.4 183.3L771.2 182.1L772.1 182.9L772.9 183.3L773.8 185.3L774.6 183.8L775.5 182.4L776.3 182.4L777.2 183.8L778.0 185.3L778.9 183.3L779.7 182.1L780.6 182.1L781.4 183.5L782.3 185.3L783.1 183.5L784.0 182.9L784.8 182.1L785.7 183.3L786.5 185.3L787.4 183.8L788.2 182.4L789.1 182.4L789.9 183.8L790.8 185.3L791.6 183.3L792.5 184.2L793.3 185.2L793.3 187.8L792.5 188.8L791.6 189.7L790.8 187.7L789.9 189.2L789.1 190.6L788.2 190.6L787.4 189.2L786.5 187.7L785.7 189.7L784.8 190.9L784.0 190.1L783.1 189.5L782.3 187.7L781.4 189.5L780.6 190.9L779.7 190.9L778.9 189.7L778.0 187.7L777.2 189.2L776.3 190.6L775.5 190.6L774.6 189.2L773.8 187.7L772.9 189.7L772.1 190.1L771.2 190.9L770.4 189.7L769.5 187.7L768.7 189.5L767.8 190.9L767.0 190.9L766.1 189.7L765.3 187.7L764.4 189.2L763.6 190.1L762.7 190.9L761.9 189.7L761.0 187.7L760.2 189.2L759.3 190.9L758.5 190.9L757.6 189.7L756.8 187.7L755.9 189.7L755.1 190.1L754.2 190.9L753.4 189.7L752.5 187.7L751.7 189.2L750.8 190.1L750.0 190.9L749.1 189.7L748.3 187.7L747.4 189.2L746.6 190.9L745.7 190.9L744.9 189.5L744.0 187.7L743.2 189.7L742.3 190.1L741.5 190.9L740.6 189.7L739.8 187.7L738.9 189.7L738.1 190.1L737.2 190.9L736.4 189.7L735.5 187.7L734.7 189.5L733.8 190.9L733.0 190.9L732.1 189.2L731.3 187.7L730.4 189.2L729.6 190.6L728.7 190.9L727.9 189.2L727.0 187.7z" fill="#3a0a0a"/>
<path d="M727.0 193.8L727.9 191.8L728.7 191.4L729.6 190.6L730.4 192.0L731.3 193.8L732.1 192.3L733.0 190.6L733.8 191.4L734.7 191.8L735.5 193.8L736.4 191.8L737.2 191.4L738.1 190.6L738.9 192.3L739.8 193.8L740.6 191.8L741.5 190.9L742.3 190.6L743.2 191.8L744.0 193.8L744.9 192.0L745.7 190.9L746.6 190.9L747.4 192.0L748.3 193.8L749.1 191.8L750.0 190.9L750.8 190.9L751.7 192.0L752.5 193.8L753.4 191.8L754.2 190.6L755.1 190.6L755.9 191.8L756.8 193.8L757.6 191.8L758.5 191.4L759.3 191.4L760.2 192.3L761.0 193.8L761.9 192.3L762.7 191.4L763.6 190.6L764.4 192.3L765.3 193.8L766.1 191.8L767.0 190.9L767.8 190.6L768.7 191.8L769.5 193.8L770.4 192.0L771.2 190.9L772.1 191.4L772.9 192.0L773.8 193.8L774.6 191.8L775.5 190.6L776.3 190.6L777.2 192.3L778.0 193.8L778.9 191.8L779.7 191.4L780.6 190.6L781.4 191.8L782.3 193.8L783.1 191.8L784.0 190.6L784.8 190.9L785.7 191.8L786.5 193.8L787.4 191.8L788.2 190.6L789.1 190.9L789.9 191.8L790.8 193.8L791.6 191.8L792.5 192.7L793.3 193.7L793.3 196.3L792.5 197.3L791.6 198.2L790.8 196.2L789.9 198.2L789.1 199.1L788.2 199.4L787.4 198.2L786.5 196.2L785.7 198.2L784.8 199.1L784.0 199.4L783.1 198.2L782.3 196.2L781.4 198.2L780.6 199.4L779.7 198.6L778.9 198.2L778.0 196.2L777.2 197.7L776.3 199.4L775.5 199.4L774.6 198.2L773.8 196.2L772.9 198.0L772.1 198.6L771.2 199.1L770.4 198.0L769.5 196.2L768.7 198.2L767.8 199.4L767.0 199.1L766.1 198.2L765.3 196.2L764.4 197.7L763.6 199.4L762.7 198.6L761.9 197.7L761.0 196.2L760.2 197.7L759.3 198.6L758.5 198.6L757.6 198.2L756.8 196.2L755.9 198.2L755.1 199.4L754.2 199.4L753.4 198.2L752.5 196.2L751.7 198.0L750.8 199.1L750.0 199.1L749.1 198.2L748.3 196.2L747.4 198.0L746.6 199.1L745.7 199.1L744.9 198.0L744.0 196.2L743.2 198.2L742.3 199.4L741.5 199.1L740.6 198.2L739.8 196.2L738.9 197.7L738.1 199.4L737.2 198.6L736.4 198.2L735.5 196.2L734.7 198.2L733.8 198.6L733.0 199.4L732.1 197.7L731.3 196.2L730.4 198.0L729.6 199.4L728.7 198.6L727.9 198.2L727.0 196.2z" fill="#3a0a0a"/>
<clipPath id="c1604"><rect x="726" y="165" width="67.5" height="35"/></clipPath>
<text x="728.5" y="176.7" font-size="10" fill="#5c0c0c" font-weight="normal" text-anchor="start" clip-path="url(#c1604)" letter-spacing="0.12" stroke="#5c0c0c" stroke-width="0.2">BRT_Full_Drums</text>
<rect x="302" y="202" width="67" height="35" fill="#f83636"/>
<rect x="302" y="218" width="67" height="1" fill="#c62b2b"/>
<rect x="310" y="218" width="1" height="19" fill="#c62b2b"/>
<rect x="327" y="218" width="1" height="19" fill="#c62b2b"/>
<rect x="344" y="218" width="1" height="19" fill="#c62b2b"/>
<rect x="361" y="218" width="1" height="19" fill="#c62b2b"/>
<rect x="302" y="202" width="1" height="35" fill="#c62b2b"/>
<path d="M303.0 221.1L304.0 220.1L305.0 220.1L306.0 220.3L307.0 221.1L308.0 221.1L309.0 221.1L310.0 220.7L311.0 220.7L312.0 220.7L313.0 220.7L314.0 220.1L315.0 220.1L316.0 220.1L317.0 220.1L318.0 219.9L319.0 220.7L320.0 220.3L321.0 220.1L322.0 219.9L323.0 221.1L324.0 221.1L325.0 219.9L326.0 219.9L327.0 220.1L328.0 220.7L329.0 220.7L330.0 219.9L331.0 220.1L332.0 219.9L333.0 219.9L334.0 219.9L335.0 220.3L336.0 220.7L337.0 219.9L338.0 221.1L339.0 220.7L340.0 219.9L341.0 220.7L342.0 219.9L343.0 220.7L344.0 219.9L345.0 219.9L346.0 220.3L347.0 220.1L348.0 220.7L349.0 220.1L350.0 220.3L351.0 220.3L352.0 220.3L353.0 220.3L354.0 220.1L355.0 219.9L356.0 220.3L357.0 220.3L358.0 221.1L359.0 220.3L360.0 220.7L361.0 220.7L362.0 220.3L363.0 220.7L364.0 220.3L365.0 220.1L366.0 220.3L367.0 221.3L368.0 222.4L368.0 224.6L367.0 225.7L366.0 226.7L365.0 226.9L364.0 226.7L363.0 226.3L362.0 226.7L361.0 226.3L360.0 226.3L359.0 226.7L358.0 225.9L357.0 226.7L356.0 226.7L355.0 227.1L354.0 226.9L353.0 226.7L352.0 226.7L351.0 226.7L350.0 226.7L349.0 226.9L348.0 226.3L347.0 226.9L346.0 226.7L345.0 227.1L344.0 227.1L343.0 226.3L342.0 227.1L341.0 226.3L340.0 227.1L339.0 226.3L338.0 225.9L337.0 227.1L336.0 226.3L335.0 226.7L334.0 227.1L333.0 227.1L332.0 227.1L331.0 226.9L330.0 227.1L329.0 226.3L328.0 226.3L327.0 226.9L326.0 227.1L325.0 227.1L324.0 225.9L323.0 225.9L322.0 227.1L321.0 226.9L320.0 226.7L319.0 226.3L318.0 227.1L317.0 226.9L316.0 226.9L315.0 226.9L314.0 226.9L313.0 226.3L312.0 226.3L311.0 226.3L310.0 226.3L309.0 225.9L308.0 225.9L307.0 225.9L306.0 226.7L305.0 226.9L304.0 226.9L303.0 225.9z" fill="#3a0a0a"/>
<path d="M303.0 228.4L304.0 228.8L305.0 228.6L306.0 228.4L307.0 228.6L308.0 228.4L309.0 228.4L310.0 229.6L311.0 228.6L312.0 229.2L313.0 228.6L314.0 228.6L315.0 228.4L316.0 228.8L317.0 229.2L318.0 228.4L319.0 229.2L320.0 228.4L321.0 228.4L322.0 229.6L323.0 229.6L324.0 228.4L325.0 228.4L326.0 228.8L327.0 228.4L328.0 228.4L329.0 228.4L330.0 228.8L331.0 228.4L332.0 228.6L333.0 228.4L334.0 229.6L335.0 229.6L336.0 228.4L337.0 228.4L338.0 228.4L339.0 229.6L340.0 229.2L341.0 228.6L342.0 228.8L343.0 228.8L344.0 228.8L345.0 228.4L346.0 228.4L347.0 228.8L348.0 228.8L349.0 228.8L350.0 228.8L351.0 228.4L352.0 228.6L353.0 228.8L354.0 228.4L355.0 228.4L356.0 229.6L357.0 228.4L358.0 228.4L359.0 229.6L360.0 228.4L361.0 228.4L362.0 229.6L363.0 228.4L364.0 228.4L365.0 228.6L366.0 228.8L367.0 229.8L368.0 230.9L368.0 233.1L367.0 234.2L366.0 235.2L365.0 235.4L364.0 235.6L363.0 235.6L362.0 234.4L361.0 235.6L360.0 235.6L359.0 234.4L358.0 235.6L357.0 235.6L356.0 234.4L355.0 235.6L354.0 235.6L353.0 235.2L352.0 235.4L351.0 235.6L350.0 235.2L349.0 235.2L348.0 235.2L347.0 235.2L346.0 235.6L345.0 235.6L344.0 235.2L343.0 235.2L342.0 235.2L341.0 235.4L340.0 234.8L339.0 234.4L338.0 235.6L337.0 235.6L336.0 235.6L335.0 234.4L334.0 234.4L333.0 235.6L332.0 235.4L331.0 235.6L330.0 235.2L329.0 235.6L328.0 235.6L327.0 235.6L326.0 235.2L325.0 235.6L324.0 235.6L323.0 234.4L322.0 234.4L321.0 235.6L320.0 235.6L319.0 234.8L318.0 235.6L317.0 234.8L316.0 235.2L315.0 235.6L314.0 235.4L313.0 235.4L312.0 234.8L311.0 235.4L310.0 234.4L309.0 235.6L308.0 235.6L307.0 235.4L306.0 235.6L305.0 235.4L304.0 235.2L303.0 235.6z" fill="#3a0a0a"/>
<clipPath id="c1615"><rect x="302" y="202" width="66" height="35"/></clipPath>
<text x="304.5" y="213.7" font-size="10" fill="#5c0c0c" font-weight="normal" text-anchor="start" clip-path="url(#c1615)" letter-spacing="0.12" stroke="#5c0c0c" stroke-width="0.2">BRT_Full_Drums</text>
<rect x="369" y="202" width="68" height="35" fill="#f83636"/>
<rect x="369" y="218" width="68" height="1" fill="#c62b2b"/>
<rect x="378" y="218" width="1" height="19" fill="#c62b2b"/>
<rect x="395" y="218" width="1" height="19" fill="#c62b2b"/>
<rect x="412" y="218" width="1" height="19" fill="#c62b2b"/>
<rect x="429" y="218" width="1" height="19" fill="#c62b2b"/>
<rect x="369" y="202" width="1" height="35" fill="#c62b2b"/>
<path d="M370.0 219.9L371.0 220.1L372.0 219.9L373.0 220.3L374.0 220.7L375.0 220.3L376.0 219.9L377.0 219.9L378.0 220.1L379.0 220.7L380.0 220.1L381.0 220.3L382.0 221.1L383.0 221.1L384.0 220.3L385.0 220.7L386.0 219.9L387.0 221.1L388.0 220.3L389.0 219.9L390.0 221.1L391.0 220.7L392.0 221.1L393.0 221.1L394.0 220.7L395.0 220.7L396.0 220.1L397.0 220.7L398.0 220.3L399.0 220.1L400.0 221.1L401.0 220.7L402.0 220.7L403.0 221.1L404.0 221.1L405.0 221.1L406.0 221.1L407.0 220.1L408.0 220.7L409.0 221.1L410.0 220.3L411.0 220.7L412.0 220.1L413.0 220.1L414.0 221.1L415.0 219.9L416.0 219.9L417.0 220.7L418.0 219.9L419.0 220.7L420.0 220.1L421.0 219.9L422.0 219.9L423.0 220.1L424.0 219.9L425.0 220.1L426.0 219.9L427.0 221.1L428.0 220.3L429.0 219.9L430.0 221.1L431.0 220.3L432.0 219.9L433.0 221.1L434.0 220.7L435.0 221.3L436.0 222.4L436.0 224.6L435.0 225.7L434.0 226.3L433.0 225.9L432.0 227.1L431.0 226.7L430.0 225.9L429.0 227.1L428.0 226.7L427.0 225.9L426.0 227.1L425.0 226.9L424.0 227.1L423.0 226.9L422.0 227.1L421.0 227.1L420.0 226.9L419.0 226.3L418.0 227.1L417.0 226.3L416.0 227.1L415.0 227.1L414.0 225.9L413.0 226.9L412.0 226.9L411.0 226.3L410.0 226.7L409.0 225.9L408.0 226.3L407.0 226.9L406.0 225.9L405.0 225.9L404.0 225.9L403.0 225.9L402.0 226.3L401.0 226.3L400.0 225.9L399.0 226.9L398.0 226.7L397.0 226.3L396.0 226.9L395.0 226.3L394.0 226.3L393.0 225.9L392.0 225.9L391.0 226.3L390.0 225.9L389.0 227.1L388.0 226.7L387.0 225.9L386.0 227.1L385.0 226.3L384.0 226.7L383.0 225.9L382.0 225.9L381.0 226.7L380.0 226.9L379.0 226.3L378.0 226.9L377.0 227.1L376.0 227.1L375.0 226.7L374.0 226.3L373.0 226.7L372.0 227.1L371.0 226.9L370.0 227.1z" fill="#3a0a0a"/>
<path d="M370.0 228.4L371.0 228.6L372.0 228.4L373.0 228.4L374.0 228.4L375.0 228.6L376.0 228.6L377.0 228.4L378.0 228.4L379.0 229.6L380.0 228.6L381.0 228.6L382.0 228.4L383.0 229.6L384.0 228.4L385.0 228.4L386.0 228.4L387.0 229.6L388.0 229.6L389.0 229.6L390.0 228.4L391.0 228.8L392.0 228.4L393.0 228.6L394.0 228.4L395.0 228.6L396.0 228.4L397.0 229.6L398.0 229.6L399.0 229.2L400.0 229.6L401.0 229.6L402.0 229.2L403.0 229.6L404.0 228.4L405.0 228.4L406.0 229.2L407.0 229.6L408.0 228.6L409.0 228.6L410.0 229.2L411.0 228.6L412.0 229.6L413.0 228.8L414.0 228.4L415.0 228.4L416.0 229.6L417.0 228.4L418.0 228.6L419.0 228.4L420.0 228.4L421.0 228.6L422.0 228.4L423.0 228.4L424.0 228.4L425.0 229.2L426.0 229.6L427.0 228.4L428.0 228.6L429.0 229.6L430.0 229.6L431.0 228.4L432.0 229.2L433.0 228.4L434.0 229.6L435.0 229.8L436.0 230.9L436.0 233.1L435.0 234.2L434.0 234.4L433.0 235.6L432.0 234.8L431.0 235.6L430.0 234.4L429.0 234.4L428.0 235.4L427.0 235.6L426.0 234.4L425.0 234.8L424.0 235.6L423.0 235.6L422.0 235.6L421.0 235.4L420.0 235.6L419.0 235.6L418.0 235.4L417.0 235.6L416.0 234.4L415.0 235.6L414.0 235.6L413.0 235.2L412.0 234.4L411.0 235.4L410.0 234.8L409.0 235.4L408.0 235.4L407.0 234.4L406.0 234.8L405.0 235.6L404.0 235.6L403.0 234.4L402.0 234.8L401.0 234.4L400.0 234.4L399.0 234.8L398.0 234.4L397.0 234.4L396.0 235.6L395.0 235.4L394.0 235.6L393.0 235.4L392.0 235.6L391.0 235.2L390.0 235.6L389.0 234.4L388.0 234.4L387.0 234.4L386.0 235.6L385.0 235.6L384.0 235.6L383.0 234.4L382.0 235.6L381.0 235.4L380.0 235.4L379.0 234.4L378.0 235.6L377.0 235.6L376.0 235.4L375.0 235.4L374.0 235.6L373.0 235.6L372.0 235.6L371.0 235.4L370.0 235.6z" fill="#3a0a0a"/>
<clipPath id="c1626"><rect x="369" y="202" width="67" height="35"/></clipPath>
<text x="371.5" y="213.7" font-size="10" fill="#5c0c0c" font-weight="normal" text-anchor="start" clip-path="url(#c1626)" letter-spacing="0.12" stroke="#5c0c0c" stroke-width="0.2">BRT_Full_Drums</text>
<rect x="659" y="202" width="67" height="35" fill="#f83636"/>
<rect x="659" y="218" width="67" height="1" fill="#c62b2b"/>
<rect x="666" y="218" width="1" height="19" fill="#c62b2b"/>
<rect x="683" y="218" width="1" height="19" fill="#c62b2b"/>
<rect x="700" y="218" width="1" height="19" fill="#c62b2b"/>
<rect x="717" y="218" width="1" height="19" fill="#c62b2b"/>
<rect x="659" y="202" width="1" height="35" fill="#c62b2b"/>
<path d="M660.0 219.9L661.0 219.9L662.0 221.1L663.0 220.3L664.0 220.1L665.0 221.1L666.0 220.7L667.0 220.7L668.0 220.7L669.0 220.7L670.0 220.7L671.0 221.1L672.0 220.7L673.0 219.9L674.0 220.7L675.0 221.1L676.0 220.3L677.0 220.3L678.0 219.9L679.0 220.3L680.0 219.9L681.0 220.1L682.0 219.9L683.0 220.1L684.0 219.9L685.0 220.1L686.0 219.9L687.0 220.7L688.0 219.9L689.0 221.1L690.0 220.3L691.0 220.7L692.0 220.7L693.0 220.1L694.0 220.1L695.0 220.3L696.0 219.9L697.0 220.3L698.0 219.9L699.0 220.7L700.0 220.3L701.0 221.1L702.0 220.3L703.0 220.7L704.0 220.7L705.0 220.3L706.0 219.9L707.0 220.3L708.0 220.3L709.0 219.9L710.0 221.1L711.0 221.1L712.0 220.7L713.0 220.7L714.0 220.1L715.0 221.1L716.0 221.1L717.0 220.1L718.0 220.3L719.0 219.9L720.0 220.1L721.0 220.3L722.0 219.9L723.0 220.7L724.0 221.3L725.0 222.4L725.0 224.6L724.0 225.7L723.0 226.3L722.0 227.1L721.0 226.7L720.0 226.9L719.0 227.1L718.0 226.7L717.0 226.9L716.0 225.9L715.0 225.9L714.0 226.9L713.0 226.3L712.0 226.3L711.0 225.9L710.0 225.9L709.0 227.1L708.0 226.7L707.0 226.7L706.0 227.1L705.0 226.7L704.0 226.3L703.0 226.3L702.0 226.7L701.0 225.9L700.0 226.7L699.0 226.3L698.0 227.1L697.0 226.7L696.0 227.1L695.0 226.7L694.0 226.9L693.0 226.9L692.0 226.3L691.0 226.3L690.0 226.7L689.0 225.9L688.0 227.1L687.0 226.3L686.0 227.1L685.0 226.9L684.0 227.1L683.0 226.9L682.0 227.1L681.0 226.9L680.0 227.1L679.0 226.7L678.0 227.1L677.0 226.7L676.0 226.7L675.0 225.9L674.0 226.3L673.0 227.1L672.0 226.3L671.0 225.9L670.0 226.3L669.0 226.3L668.0 226.3L667.0 226.3L666.0 226.3L665.0 225.9L664.0 226.9L663.0 226.7L662.0 225.9L661.0 227.1L660.0 227.1z" fill="#3a0a0a"/>
<path d="M660.0 228.6L661.0 228.4L662.0 229.2L663.0 228.6L664.0 228.6L665.0 229.6L666.0 228.6L667.0 228.6L668.0 228.6L669.0 229.2L670.0 228.8L671.0 228.6L672.0 229.6L673.0 229.2L674.0 228.8L675.0 228.4L676.0 228.8L677.0 229.6L678.0 228.4L679.0 228.8L680.0 228.6L681.0 228.4L682.0 228.4L683.0 228.8L684.0 228.4L685.0 228.6L686.0 228.6L687.0 229.6L688.0 228.8L689.0 229.2L690.0 229.6L691.0 228.8L692.0 228.8L693.0 229.2L694.0 228.8L695.0 228.4L696.0 228.8L697.0 229.6L698.0 229.6L699.0 228.4L700.0 228.8L701.0 228.4L702.0 228.4L703.0 228.6L704.0 228.4L705.0 228.4L706.0 228.8L707.0 228.6L708.0 228.4L709.0 229.6L710.0 228.4L711.0 228.8L712.0 228.6L713.0 228.8L714.0 228.4L715.0 229.2L716.0 229.2L717.0 228.8L718.0 228.4L719.0 228.4L720.0 228.8L721.0 228.4L722.0 228.4L723.0 229.2L724.0 229.8L725.0 230.9L725.0 233.1L724.0 234.2L723.0 234.8L722.0 235.6L721.0 235.6L720.0 235.2L719.0 235.6L718.0 235.6L717.0 235.2L716.0 234.8L715.0 234.8L714.0 235.6L713.0 235.2L712.0 235.4L711.0 235.2L710.0 235.6L709.0 234.4L708.0 235.6L707.0 235.4L706.0 235.2L705.0 235.6L704.0 235.6L703.0 235.4L702.0 235.6L701.0 235.6L700.0 235.2L699.0 235.6L698.0 234.4L697.0 234.4L696.0 235.2L695.0 235.6L694.0 235.2L693.0 234.8L692.0 235.2L691.0 235.2L690.0 234.4L689.0 234.8L688.0 235.2L687.0 234.4L686.0 235.4L685.0 235.4L684.0 235.6L683.0 235.2L682.0 235.6L681.0 235.6L680.0 235.4L679.0 235.2L678.0 235.6L677.0 234.4L676.0 235.2L675.0 235.6L674.0 235.2L673.0 234.8L672.0 234.4L671.0 235.4L670.0 235.2L669.0 234.8L668.0 235.4L667.0 235.4L666.0 235.4L665.0 234.4L664.0 235.4L663.0 235.4L662.0 234.8L661.0 235.6L660.0 235.4z" fill="#3a0a0a"/>
<clipPath id="c1637"><rect x="659" y="202" width="66" height="35"/></clipPath>
<text x="661.5" y="213.7" font-size="10" fill="#5c0c0c" font-weight="normal" text-anchor="start" clip-path="url(#c1637)" letter-spacing="0.12" stroke="#5c0c0c" stroke-width="0.2">BRT_Full_Drums</text>
<rect x="726" y="202" width="68.5" height="35" fill="#f83636"/>
<rect x="726" y="218" width="68.5" height="1" fill="#c62b2b"/>
<rect x="734" y="218" width="1" height="19" fill="#c62b2b"/>
<rect x="751" y="218" width="1" height="19" fill="#c62b2b"/>
<rect x="768" y="218" width="1" height="19" fill="#c62b2b"/>
<rect x="785" y="218" width="1" height="19" fill="#c62b2b"/>
<rect x="726" y="202" width="1" height="35" fill="#c62b2b"/>
<path d="M727.0 220.1L728.0 220.1L729.0 221.1L730.0 220.3L731.0 221.1L732.0 220.1L733.0 221.1L734.0 220.3L735.0 219.9L736.0 220.3L737.0 220.1L738.0 221.1L739.0 221.1L740.0 220.3L741.0 220.3L742.0 221.1L743.0 220.7L744.0 221.1L745.0 220.7L746.0 220.3L747.0 219.9L748.0 221.1L749.0 220.1L750.0 220.3L751.0 219.9L752.0 220.7L753.0 219.9L754.0 221.1L755.0 219.9L756.0 220.1L757.0 221.1L758.0 220.7L759.0 219.9L760.0 220.1L761.0 220.1L762.0 220.7L763.0 220.1L764.0 219.9L765.0 219.9L766.0 219.9L767.0 221.1L768.0 220.1L769.0 221.1L770.0 219.9L771.0 221.1L772.0 221.1L773.0 219.9L774.0 220.7L775.0 220.1L776.0 220.3L777.0 219.9L778.0 220.3L779.0 220.1L780.0 220.1L781.0 220.1L782.0 219.9L783.0 220.1L784.0 220.3L785.0 220.3L786.0 220.3L787.0 220.3L788.0 221.1L789.0 220.1L790.0 221.1L791.0 219.9L792.0 220.8L793.0 221.8L793.0 225.2L792.0 226.2L791.0 227.1L790.0 225.9L789.0 226.9L788.0 225.9L787.0 226.7L786.0 226.7L785.0 226.7L784.0 226.7L783.0 226.9L782.0 227.1L781.0 226.9L780.0 226.9L779.0 226.9L778.0 226.7L777.0 227.1L776.0 226.7L775.0 226.9L774.0 226.3L773.0 227.1L772.0 225.9L771.0 225.9L770.0 227.1L769.0 225.9L768.0 226.9L767.0 225.9L766.0 227.1L765.0 227.1L764.0 227.1L763.0 226.9L762.0 226.3L761.0 226.9L760.0 226.9L759.0 227.1L758.0 226.3L757.0 225.9L756.0 226.9L755.0 227.1L754.0 225.9L753.0 227.1L752.0 226.3L751.0 227.1L750.0 226.7L749.0 226.9L748.0 225.9L747.0 227.1L746.0 226.7L745.0 226.3L744.0 225.9L743.0 226.3L742.0 225.9L741.0 226.7L740.0 226.7L739.0 225.9L738.0 225.9L737.0 226.9L736.0 226.7L735.0 227.1L734.0 226.7L733.0 225.9L732.0 226.9L731.0 225.9L730.0 226.7L729.0 225.9L728.0 226.9L727.0 226.9z" fill="#3a0a0a"/>
<path d="M727.0 228.8L728.0 228.6L729.0 228.6L730.0 229.6L731.0 229.2L732.0 229.6L733.0 229.2L734.0 228.4L735.0 228.6L736.0 228.8L737.0 228.8L738.0 228.4L739.0 229.2L740.0 229.2L741.0 228.8L742.0 228.4L743.0 228.4L744.0 228.6L745.0 228.4L746.0 228.6L747.0 229.6L748.0 228.6L749.0 229.6L750.0 228.4L751.0 229.6L752.0 228.8L753.0 228.4L754.0 228.8L755.0 228.4L756.0 228.4L757.0 228.8L758.0 229.6L759.0 228.4L760.0 228.4L761.0 228.4L762.0 229.6L763.0 229.6L764.0 228.6L765.0 229.6L766.0 229.6L767.0 228.4L768.0 228.4L769.0 228.4L770.0 229.2L771.0 229.2L772.0 229.6L773.0 229.2L774.0 228.8L775.0 229.2L776.0 228.8L777.0 229.6L778.0 228.4L779.0 228.4L780.0 228.4L781.0 228.8L782.0 229.6L783.0 228.8L784.0 228.4L785.0 228.4L786.0 229.6L787.0 228.8L788.0 228.4L789.0 228.4L790.0 228.6L791.0 229.6L792.0 229.2L793.0 230.3L793.0 233.7L792.0 234.8L791.0 234.4L790.0 235.4L789.0 235.6L788.0 235.6L787.0 235.2L786.0 234.4L785.0 235.6L784.0 235.6L783.0 235.2L782.0 234.4L781.0 235.2L780.0 235.6L779.0 235.6L778.0 235.6L777.0 234.4L776.0 235.2L775.0 234.8L774.0 235.2L773.0 234.8L772.0 234.4L771.0 234.8L770.0 234.8L769.0 235.6L768.0 235.6L767.0 235.6L766.0 234.4L765.0 234.4L764.0 235.4L763.0 234.4L762.0 234.4L761.0 235.6L760.0 235.6L759.0 235.6L758.0 234.4L757.0 235.2L756.0 235.6L755.0 235.6L754.0 235.2L753.0 235.6L752.0 235.2L751.0 234.4L750.0 235.6L749.0 234.4L748.0 235.4L747.0 234.4L746.0 235.4L745.0 235.6L744.0 235.4L743.0 235.6L742.0 235.6L741.0 235.2L740.0 234.8L739.0 234.8L738.0 235.6L737.0 235.2L736.0 235.2L735.0 235.4L734.0 235.6L733.0 234.8L732.0 234.4L731.0 234.8L730.0 234.4L729.0 235.4L728.0 235.4L727.0 235.2z" fill="#3a0a0a"/>
<clipPath id="c1648"><rect x="726" y="202" width="67.5" height="35"/></clipPath>
<text x="728.5" y="213.7" font-size="10" fill="#5c0c0c" font-weight="normal" text-anchor="start" clip-path="url(#c1648)" letter-spacing="0.12" stroke="#5c0c0c" stroke-width="0.2">BRT_Full_Drums</text>
<rect x="98" y="239" width="34" height="35" fill="#735040"/>
<rect x="98" y="255" width="34" height="1" fill="#5c4033"/>
<rect x="106" y="255" width="1" height="19" fill="#5c4033"/>
<rect x="123" y="255" width="1" height="19" fill="#5c4033"/>
<rect x="98" y="239" width="1" height="35" fill="#5c4033"/>
<path d="M118.1 259.5h1M105.1 259.5h3M99.5 268.5h2M111.6 268.5h1M109.2 268.5h2M119.4 259.5h4M118.9 264.5h2.5M124.6 258.5h1M99.3 258.5h4" stroke="#2a0e0e" stroke-width="1.6" fill="none"/>
<clipPath id="c1656"><rect x="98" y="239" width="33" height="35"/></clipPath>
<text x="100.5" y="250.7" font-size="9.8" fill="#eadfd8" font-weight="bold" text-anchor="start" clip-path="url(#c1656)">3 4-Sylenth</text>
<rect x="132" y="239" width="34" height="35" fill="#735040"/>
<rect x="132" y="255" width="34" height="1" fill="#5c4033"/>
<rect x="140" y="255" width="1" height="19" fill="#5c4033"/>
<rect x="157" y="255" width="1" height="19" fill="#5c4033"/>
<rect x="132" y="239" width="1" height="35" fill="#5c4033"/>
<path d="M135.2 262.5h4M137.6 270.5h3M150.1 262.5h4M153.4 264.5h2M137.1 269.5h2.5M159.7 260.5h3M146.4 268.5h3M159.5 268.5h4M142.3 261.5h4" stroke="#2a0e0e" stroke-width="1.6" fill="none"/>
<clipPath id="c1664"><rect x="132" y="239" width="33" height="35"/></clipPath>
<text x="134.5" y="250.7" font-size="9.8" fill="#eadfd8" font-weight="bold" text-anchor="start" clip-path="url(#c1664)">3 4-Sylenth</text>
<rect x="166" y="239" width="34" height="35" fill="#735040"/>
<rect x="166" y="255" width="34" height="1" fill="#5c4033"/>
<rect x="174" y="255" width="1" height="19" fill="#5c4033"/>
<rect x="191" y="255" width="1" height="19" fill="#5c4033"/>
<rect x="166" y="239" width="1" height="35" fill="#5c4033"/>
<path d="M194.3 267.5h4M176.3 266.5h1M190.3 266.5h2.5M183.4 271.5h2M177.5 267.5h4M188.6 261.5h3M174.9 258.5h2.5M174.5 260.5h1M175.1 259.5h4" stroke="#2a0e0e" stroke-width="1.6" fill="none"/>
<clipPath id="c1672"><rect x="166" y="239" width="33" height="35"/></clipPath>
<text x="168.5" y="250.7" font-size="9.8" fill="#eadfd8" font-weight="bold" text-anchor="start" clip-path="url(#c1672)">3 4-Sylenth</text>
<rect x="200" y="239" width="34" height="35" fill="#735040"/>
<rect x="200" y="255" width="34" height="1" fill="#5c4033"/>
<rect x="208" y="255" width="1" height="19" fill="#5c4033"/>
<rect x="225" y="255" width="1" height="19" fill="#5c4033"/>
<rect x="200" y="239" width="1" height="35" fill="#5c4033"/>
<path d="M205.1 271.5h4M220.2 270.5h2.5M216.0 265.5h3M223.3 260.5h2M209.7 258.5h3M214.0 260.5h2.5M217.4 258.5h3M213.9 259.5h2.5M222.6 261.5h4" stroke="#2a0e0e" stroke-width="1.6" fill="none"/>
<clipPath id="c1680"><rect x="200" y="239" width="33" height="35"/></clipPath>
<text x="202.5" y="250.7" font-size="9.8" fill="#eadfd8" font-weight="bold" text-anchor="start" clip-path="url(#c1680)">3 4-Sylenth</text>
<rect x="234" y="239" width="34" height="35" fill="#735040"/>
<rect x="234" y="255" width="34" height="1" fill="#5c4033"/>
<rect x="242" y="255" width="1" height="19" fill="#5c4033"/>
<rect x="259" y="255" width="1" height="19" fill="#5c4033"/>
<rect x="234" y="239" width="1" height="35" fill="#5c4033"/>
<path d="M249.6 261.5h4M244.0 265.5h2M240.3 260.5h2M257.6 262.5h4M250.8 263.5h4M259.0 261.5h3M245.5 259.5h3M257.0 260.5h4M235.9 261.5h4" stroke="#2a0e0e" stroke-width="1.6" fill="none"/>
<clipPath id="c1688"><rect x="234" y="239" width="33" height="35"/></clipPath>
<text x="236.5" y="250.7" font-size="9.8" fill="#eadfd8" font-weight="bold" text-anchor="start" clip-path="url(#c1688)">3 4-Sylenth</text>
<rect x="268" y="239" width="16" height="35" fill="#735040"/>
<rect x="268" y="255" width="16" height="1" fill="#5c4033"/>
<rect x="276" y="255" width="1" height="19" fill="#5c4033"/>
<rect x="268" y="239" width="1" height="35" fill="#5c4033"/>
<path d="M269.2 258.5h4M273.9 265.5h2.5M278.3 261.5h1M278.5 268.5h4" stroke="#2a0e0e" stroke-width="1.6" fill="none"/>
<clipPath id="c1695"><rect x="268" y="239" width="15" height="35"/></clipPath>
<text x="270.5" y="250.7" font-size="9.8" fill="#eadfd8" font-weight="bold" text-anchor="start" clip-path="url(#c1695)">3 4-Sylenth</text>
<rect x="302" y="239" width="144.5" height="35" fill="#735040"/>
<rect x="302" y="255" width="144.5" height="1" fill="#5c4033"/>
<rect x="310" y="255" width="1" height="19" fill="#5c4033"/>
<rect x="327" y="255" width="1" height="19" fill="#5c4033"/>
<rect x="344" y="255" width="1" height="19" fill="#5c4033"/>
<rect x="361" y="255" width="1" height="19" fill="#5c4033"/>
<rect x="378" y="255" width="1" height="19" fill="#5c4033"/>
<rect x="395" y="255" width="1" height="19" fill="#5c4033"/>
<rect x="412" y="255" width="1" height="19" fill="#5c4033"/>
<rect x="429" y="255" width="1" height="19" fill="#5c4033"/>
<rect x="302" y="239" width="1" height="35" fill="#5c4033"/>
<path d="M436.4 261.5h1M349.9 271.5h3M314.6 258.5h4M354.2 267.5h3M434.2 270.5h1M422.5 266.5h1M400.8 259.5h2.5M381.2 266.5h4M357.4 264.5h2M354.4 261.5h2M326.8 271.5h2.5M311.2 265.5h1M419.0 258.5h4M401.3 267.5h3M310.7 260.5h1M433.1 267.5h2.5M384.7 264.5h1M368.2 263.5h3M320.2 264.5h2M364.1 269.5h1M367.8 270.5h1M324.7 269.5h1M432.4 270.5h2M410.8 271.5h3M419.7 266.5h3M437.7 262.5h2M369.1 266.5h2M349.0 268.5h2M401.9 265.5h2M363.8 260.5h3M360.0 260.5h2.5M382.1 262.5h2M339.1 259.5h3M428.1 259.5h4M310.9 270.5h2M380.6 269.5h1M338.7 260.5h2.5M362.8 261.5h2" stroke="#2a0e0e" stroke-width="1.6" fill="none"/>
<clipPath id="c1709"><rect x="302" y="239" width="143.5" height="35"/></clipPath>
<text x="304.5" y="250.7" font-size="9.8" fill="#eadfd8" font-weight="bold" text-anchor="start" clip-path="url(#c1709)">BooBass (MIDI)</text>
<rect x="455" y="239" width="34" height="35" fill="#735040"/>
<rect x="455" y="255" width="34" height="1" fill="#5c4033"/>
<rect x="463" y="255" width="1" height="19" fill="#5c4033"/>
<rect x="480" y="255" width="1" height="19" fill="#5c4033"/>
<rect x="455" y="239" width="1" height="35" fill="#5c4033"/>
<path d="M481.9 259.5h2.5M467.6 260.5h2.5M460.0 266.5h3M478.6 262.5h2M468.4 269.5h4M464.0 263.5h1M481.5 261.5h4M461.1 269.5h4M477.6 267.5h2" stroke="#2a0e0e" stroke-width="1.6" fill="none"/>
<clipPath id="c1717"><rect x="455" y="239" width="33" height="35"/></clipPath>
<text x="457.5" y="250.7" font-size="9.8" fill="#eadfd8" font-weight="bold" text-anchor="start" clip-path="url(#c1717)">3 4-Sylenth</text>
<rect x="489" y="239" width="8.5" height="35" fill="#735040"/>
<rect x="489" y="255" width="8.5" height="1" fill="#5c4033"/>
<rect x="489" y="239" width="1" height="35" fill="#5c4033"/>
<path d="M491.5 269.5h4M491.8 268.5h2" stroke="#2a0e0e" stroke-width="1.6" fill="none"/>
<clipPath id="c1723"><rect x="489" y="239" width="7.5" height="35"/></clipPath>
<text x="491.5" y="250.7" font-size="9.8" fill="#eadfd8" font-weight="bold" text-anchor="start" clip-path="url(#c1723)">3 4</text>
<rect x="504" y="239" width="9" height="35" fill="#735040"/>
<rect x="504" y="255" width="9" height="1" fill="#5c4033"/>
<rect x="504" y="239" width="1" height="35" fill="#5c4033"/>
<path d="M505.6 266.5h2M506.7 260.5h1" stroke="#2a0e0e" stroke-width="1.6" fill="none"/>
<clipPath id="c1729"><rect x="504" y="239" width="8" height="35"/></clipPath>
<text x="506.5" y="250.7" font-size="9.8" fill="#eadfd8" font-weight="bold" text-anchor="start" clip-path="url(#c1729)">3 4</text>
<rect x="523" y="239" width="34" height="35" fill="#735040"/>
<rect x="523" y="255" width="34" height="1" fill="#5c4033"/>
<rect x="530" y="255" width="1" height="19" fill="#5c4033"/>
<rect x="547" y="255" width="1" height="19" fill="#5c4033"/>
<rect x="523" y="239" width="1" height="35" fill="#5c4033"/>
<path d="M543.4 265.5h1M538.5 262.5h2.5M547.6 270.5h3M526.5 263.5h3M527.7 267.5h2M529.2 269.5h2.5M525.0 267.5h4M540.7 258.5h4M550.1 271.5h1" stroke="#2a0e0e" stroke-width="1.6" fill="none"/>
<clipPath id="c1737"><rect x="523" y="239" width="33" height="35"/></clipPath>
<text x="525.5" y="250.7" font-size="9.8" fill="#eadfd8" font-weight="bold" text-anchor="start" clip-path="url(#c1737)">3 4-Sylenth</text>
<rect x="557" y="239" width="34" height="35" fill="#735040"/>
<rect x="557" y="255" width="34" height="1" fill="#5c4033"/>
<rect x="564" y="255" width="1" height="19" fill="#5c4033"/>
<rect x="581" y="255" width="1" height="19" fill="#5c4033"/>
<rect x="557" y="239" width="1" height="35" fill="#5c4033"/>
<path d="M561.4 268.5h2.5M579.8 270.5h4M579.0 258.5h1M584.7 264.5h4M558.7 269.5h2M558.6 271.5h2M575.3 260.5h2.5M565.0 269.5h1M558.5 270.5h2" stroke="#2a0e0e" stroke-width="1.6" fill="none"/>
<clipPath id="c1745"><rect x="557" y="239" width="33" height="35"/></clipPath>
<text x="559.5" y="250.7" font-size="9.8" fill="#eadfd8" font-weight="bold" text-anchor="start" clip-path="url(#c1745)">3 4-Sylenth</text>
<rect x="591" y="239" width="34" height="35" fill="#735040"/>
<rect x="591" y="255" width="34" height="1" fill="#5c4033"/>
<rect x="598" y="255" width="1" height="19" fill="#5c4033"/>
<rect x="615" y="255" width="1" height="19" fill="#5c4033"/>
<rect x="591" y="239" width="1" height="35" fill="#5c4033"/>
<path d="M599.3 269.5h4M605.0 261.5h3M594.9 270.5h2M593.3 259.5h3M608.4 268.5h1M595.4 263.5h2M607.2 261.5h2M596.1 266.5h3M596.6 269.5h3" stroke="#2a0e0e" stroke-width="1.6" fill="none"/>
<clipPath id="c1753"><rect x="591" y="239" width="33" height="35"/></clipPath>
<text x="593.5" y="250.7" font-size="9.8" fill="#eadfd8" font-weight="bold" text-anchor="start" clip-path="url(#c1753)">3 4-Sylenth</text>
<rect x="625" y="239" width="16" height="35" fill="#735040"/>
<rect x="625" y="255" width="16" height="1" fill="#5c4033"/>
<rect x="632" y="255" width="1" height="19" fill="#5c4033"/>
<rect x="625" y="239" width="1" height="35" fill="#5c4033"/>
<path d="M632.9 266.5h4M631.3 263.5h1M633.8 262.5h2M634.4 268.5h4" stroke="#2a0e0e" stroke-width="1.6" fill="none"/>
<clipPath id="c1760"><rect x="625" y="239" width="15" height="35"/></clipPath>
<text x="627.5" y="250.7" font-size="9.8" fill="#eadfd8" font-weight="bold" text-anchor="start" clip-path="url(#c1760)">3 4-Sylenth</text>
<rect x="659" y="239" width="135.5" height="35" fill="#735040"/>
<rect x="659" y="255" width="135.5" height="1" fill="#5c4033"/>
<rect x="666" y="255" width="1" height="19" fill="#5c4033"/>
<rect x="683" y="255" width="1" height="19" fill="#5c4033"/>
<rect x="700" y="255" width="1" height="19" fill="#5c4033"/>
<rect x="717" y="255" width="1" height="19" fill="#5c4033"/>
<rect x="734" y="255" width="1" height="19" fill="#5c4033"/>
<rect x="751" y="255" width="1" height="19" fill="#5c4033"/>
<rect x="768" y="255" width="1" height="19" fill="#5c4033"/>
<rect x="785" y="255" width="1" height="19" fill="#5c4033"/>
<rect x="659" y="239" width="1" height="35" fill="#5c4033"/>
<path d="M764.2 270.5h3M769.8 258.5h4M679.0 267.5h2.5M692.3 263.5h1M707.2 265.5h1M702.0 260.5h1M689.2 263.5h3M760.6 271.5h1M764.8 270.5h1M664.5 266.5h2.5M778.9 266.5h4M764.4 258.5h1M692.5 265.5h3M690.6 258.5h1M699.6 267.5h1M667.8 271.5h4M776.7 259.5h4M729.1 260.5h1M726.3 270.5h3M734.8 261.5h1M755.9 262.5h3M739.0 265.5h3M686.1 267.5h3M775.5 262.5h3M720.7 262.5h2M703.2 260.5h4M709.6 266.5h1M779.7 260.5h2M702.0 262.5h2.5M696.9 271.5h2.5M667.4 258.5h4M668.7 270.5h3M745.2 265.5h3M705.9 268.5h4M689.2 271.5h2" stroke="#2a0e0e" stroke-width="1.6" fill="none"/>
<clipPath id="c1774"><rect x="659" y="239" width="134.5" height="35"/></clipPath>
<text x="661.5" y="250.7" font-size="9.8" fill="#eadfd8" font-weight="bold" text-anchor="start" clip-path="url(#c1774)">BooBass (MIDI)</text>
<rect x="863" y="239" width="41" height="35" fill="#735040"/>
<rect x="863" y="255" width="41" height="1" fill="#5c4033"/>
<rect x="870" y="255" width="1" height="19" fill="#5c4033"/>
<rect x="887" y="255" width="1" height="19" fill="#5c4033"/>
<rect x="863" y="239" width="1" height="35" fill="#5c4033"/>
<path d="M878.6 267.5h2M887.6 266.5h2.5M892.7 265.5h3M873.4 266.5h2M878.5 259.5h3M890.8 266.5h3M877.9 271.5h2M878.6 268.5h4M885.3 263.5h3M888.2 262.5h2.5" stroke="#2a0e0e" stroke-width="1.6" fill="none"/>
<clipPath id="c1782"><rect x="863" y="239" width="40" height="35"/></clipPath>
<text x="865.5" y="250.7" font-size="9.8" fill="#eadfd8" font-weight="bold" text-anchor="start" clip-path="url(#c1782)">BooBass (MIDI)</text>
<rect x="909" y="239" width="21" height="35" fill="#735040"/>
<rect x="909" y="255" width="21" height="1" fill="#5c4033"/>
<rect x="921" y="255" width="1" height="19" fill="#5c4033"/>
<rect x="909" y="239" width="1" height="35" fill="#5c4033"/>
<path d="M914.4 263.5h4M918.9 267.5h1M921.8 269.5h3M915.7 262.5h4M914.6 260.5h4" stroke="#2a0e0e" stroke-width="1.6" fill="none"/>
<clipPath id="c1789"><rect x="909" y="239" width="20" height="35"/></clipPath>
<text x="911.5" y="250.7" font-size="9.8" fill="#eadfd8" font-weight="bold" text-anchor="start" clip-path="url(#c1789)">BooBass</text>
<rect x="497.5" y="239" width="6.5" height="35" fill="#9a9a9a"/>
<rect x="513" y="239" width="10" height="35" fill="#878787"/>
<rect x="904" y="239" width="5" height="35" fill="#9a9a9a"/>
<rect x="497.5" y="239" width="2.5" height="35" fill="#9a9a9a"/>
<rect x="517.5" y="239" width="5" height="35" fill="#9a9a9a"/>
<rect x="21" y="276" width="76.5" height="35" fill="#b23131"/>
<rect x="21" y="292" width="76.5" height="1" fill="#802323"/>
<rect x="38" y="292" width="1" height="19" fill="#802323"/>
<rect x="55" y="292" width="1" height="19" fill="#802323"/>
<rect x="72" y="292" width="1" height="19" fill="#802323"/>
<rect x="89" y="292" width="1" height="19" fill="#802323"/>
<rect x="21" y="276" width="1" height="35" fill="#802323"/>
<path d="M48.6 298.5h1.5M44.8 306.5h1M89.6 297.5h2M84.8 308.5h1M25.3 302.5h2M43.1 302.5h1.5M60.0 308.5h3M80.2 305.5h2M49.5 300.5h3M69.7 301.5h1M69.7 302.5h1M50.9 302.5h3M87.5 297.5h1M90.0 301.5h2M76.1 307.5h3M46.2 302.5h1M34.0 299.5h1M80.2 302.5h1M68.2 299.5h1.5M79.8 308.5h2M66.5 302.5h3M36.6 307.5h2M34.9 303.5h3M29.5 302.5h1M70.8 295.5h1M43.6 304.5h1M86.7 300.5h1M63.3 304.5h1M34.4 305.5h3M40.8 304.5h3M58.3 297.5h1M51.0 296.5h1M58.5 302.5h1M29.1 297.5h3M56.6 301.5h2M78.9 295.5h1M70.3 303.5h1M72.4 299.5h1M24.3 303.5h3M26.4 297.5h3M49.2 295.5h2M63.1 308.5h2M25.8 298.5h1M25.1 308.5h1M44.2 307.5h2M43.4 303.5h2M91.1 295.5h2M69.6 303.5h2M43.8 307.5h2" stroke="#8a2222" stroke-width="1" fill="none"/>
<text x="24" y="288" font-size="10" fill="#f3e4de" font-weight="bold" text-anchor="start">Keys (MIDI)</text>
<rect x="131" y="276" width="316" height="35" fill="#b23131"/>
<rect x="131" y="292" width="316" height="1" fill="#802323"/>
<rect x="140" y="292" width="1" height="19" fill="#802323"/>
<rect x="157" y="292" width="1" height="19" fill="#802323"/>
<rect x="174" y="292" width="1" height="19" fill="#802323"/>
<rect x="191" y="292" width="1" height="19" fill="#802323"/>
<rect x="208" y="292" width="1" height="19" fill="#802323"/>
<rect x="225" y="292" width="1" height="19" fill="#802323"/>
<rect x="242" y="292" width="1" height="19" fill="#802323"/>
<rect x="259" y="292" width="1" height="19" fill="#802323"/>
<rect x="276" y="292" width="1" height="19" fill="#802323"/>
<rect x="293" y="292" width="1" height="19" fill="#802323"/>
<rect x="310" y="292" width="1" height="19" fill="#802323"/>
<rect x="327" y="292" width="1" height="19" fill="#802323"/>
<rect x="344" y="292" width="1" height="19" fill="#802323"/>
<rect x="361" y="292" width="1" height="19" fill="#802323"/>
<rect x="378" y="292" width="1" height="19" fill="#802323"/>
<rect x="395" y="292" width="1" height="19" fill="#802323"/>
<rect x="412" y="292" width="1" height="19" fill="#802323"/>
<rect x="429" y="292" width="1" height="19" fill="#802323"/>
<rect x="446" y="292" width="1" height="19" fill="#802323"/>
<rect x="131" y="276" width="1" height="35" fill="#802323"/>
<path d="M139.0 307.5h1M185.8 300.5h1M134.4 307.5h2M306.1 296.5h3M402.2 299.5h1M430.0 300.5h1.5M303.7 300.5h2M219.9 298.5h1M218.5 295.5h1M207.0 296.5h1M215.6 306.5h1M304.0 301.5h1M181.4 299.5h2M248.8 308.5h1M224.1 301.5h1M202.5 301.5h1M424.0 308.5h3M410.9 303.5h1.5M297.7 300.5h3M197.9 307.5h1M342.1 296.5h1.5M360.1 305.5h1M335.8 302.5h1.5M136.7 304.5h1M372.6 298.5h1M337.5 296.5h3M415.3 306.5h1.5M191.8 305.5h1M202.2 296.5h2M219.5 300.5h2M372.2 307.5h1M422.4 297.5h1.5M342.7 304.5h1.5M410.1 295.5h2M209.0 306.5h1.5M412.9 296.5h1.5M167.7 307.5h1M352.9 295.5h1M320.6 301.5h1.5M180.4 305.5h3M228.4 303.5h1M307.0 298.5h2M354.2 298.5h2M339.7 303.5h1M166.7 305.5h1.5M411.3 307.5h3M320.3 295.5h1M343.1 295.5h1.5M197.1 307.5h1M261.3 305.5h3M388.9 298.5h1M240.2 308.5h2M420.4 304.5h2M289.7 304.5h1M264.8 302.5h1M283.7 297.5h3M213.0 302.5h1M300.6 298.5h1M184.1 299.5h1M194.4 299.5h1M344.7 301.5h2M205.7 298.5h3M346.4 296.5h1.5M348.4 296.5h1M314.1 298.5h1M302.0 305.5h1M341.9 297.5h2M392.2 300.5h1M167.5 299.5h1.5M282.8 295.5h1.5M226.2 296.5h1.5M270.9 296.5h1.5M270.0 302.5h1.5M184.1 296.5h1M277.2 308.5h2M158.0 305.5h3M214.0 304.5h2M283.4 305.5h1.5M134.6 307.5h1.5M326.6 308.5h1.5M334.5 296.5h1M139.8 300.5h1M223.9 297.5h3M394.2 307.5h1M163.7 305.5h1.5M362.1 299.5h1M332.7 299.5h1M246.2 302.5h1.5M391.7 298.5h1M144.8 302.5h2M412.6 308.5h2M263.1 305.5h1.5M318.8 303.5h1M345.3 297.5h2M329.4 300.5h1M395.7 301.5h1M356.1 295.5h3M397.2 306.5h2M176.4 296.5h1M291.5 300.5h1.5M151.4 295.5h1M412.2 297.5h1.5M133.3 306.5h1.5M307.9 301.5h3M232.3 301.5h3M413.7 307.5h2M430.2 303.5h1M356.1 299.5h1.5M307.2 300.5h1.5M281.0 304.5h1.5M400.2 302.5h1M394.9 298.5h2M346.3 297.5h3M247.3 303.5h2M243.6 298.5h2M254.9 296.5h1M432.2 297.5h1M200.6 306.5h1M190.1 304.5h2M202.4 301.5h3M309.5 296.5h3M413.9 302.5h2M342.6 306.5h1M399.7 302.5h1M326.2 308.5h3M163.6 306.5h2M300.7 308.5h1M306.5 305.5h1M247.7 303.5h2M205.4 300.5h1M349.6 308.5h2M225.0 304.5h2M413.6 296.5h1M306.5 307.5h1.5M184.1 305.5h1.5M381.3 305.5h1M387.9 296.5h1.5M291.1 302.5h1.5M355.8 295.5h3M241.6 299.5h1.5M380.9 296.5h1M210.9 297.5h2M138.6 308.5h2M167.2 295.5h1M154.9 298.5h1M303.8 299.5h2M391.2 303.5h1.5M298.9 304.5h1.5M426.1 295.5h1.5M440.3 301.5h2M402.6 306.5h1M155.1 303.5h3M253.7 301.5h1M346.8 301.5h1M402.6 303.5h1M243.9 302.5h1.5M409.1 303.5h1M197.5 306.5h2M234.7 301.5h1.5M229.5 299.5h2M235.5 295.5h2M403.6 303.5h1M357.4 297.5h2M216.7 302.5h1.5M242.6 303.5h3M428.7 308.5h1M415.7 307.5h1M402.4 305.5h3M328.7 300.5h1.5M377.8 298.5h1M343.2 299.5h1.5M361.3 302.5h1M240.6 302.5h2M235.7 304.5h1.5M405.9 305.5h3M245.9 298.5h1M441.0 297.5h1M134.2 307.5h2M257.5 300.5h1.5M420.1 303.5h1M225.5 299.5h3M302.9 308.5h1.5M154.8 297.5h1M313.3 299.5h1.5M438.1 299.5h2M355.6 307.5h2M231.0 297.5h1.5M301.4 305.5h1.5M205.4 295.5h1M255.9 297.5h3M219.6 302.5h1M193.0 305.5h1M318.3 296.5h3M237.8 296.5h1M215.9 303.5h1M330.4 307.5h1M231.7 307.5h1M333.2 300.5h1.5M186.1 307.5h1M159.0 303.5h2M438.2 300.5h2M402.7 295.5h1.5M306.9 308.5h1M260.7 304.5h1.5" stroke="#8a2222" stroke-width="1" fill="none"/>
<clipPath id="c1828"><rect x="131" y="276" width="315" height="35"/></clipPath>
<text x="133.5" y="287.7" font-size="10" fill="#f3e4de" font-weight="bold" text-anchor="start" clip-path="url(#c1828)">Keys (MIDI)</text>
<rect x="454" y="276" width="419.5" height="35" fill="#b23131"/>
<rect x="454" y="292" width="419.5" height="1" fill="#802323"/>
<rect x="463" y="292" width="1" height="19" fill="#802323"/>
<rect x="480" y="292" width="1" height="19" fill="#802323"/>
<rect x="497" y="292" width="1" height="19" fill="#802323"/>
<rect x="514" y="292" width="1" height="19" fill="#802323"/>
<rect x="530" y="292" width="1" height="19" fill="#802323"/>
<rect x="547" y="292" width="1" height="19" fill="#802323"/>
<rect x="564" y="292" width="1" height="19" fill="#802323"/>
<rect x="581" y="292" width="1" height="19" fill="#802323"/>
<rect x="598" y="292" width="1" height="19" fill="#802323"/>
<rect x="615" y="292" width="1" height="19" fill="#802323"/>
<rect x="632" y="292" width="1" height="19" fill="#802323"/>
<rect x="649" y="292" width="1" height="19" fill="#802323"/>
<rect x="666" y="292" width="1" height="19" fill="#802323"/>
<rect x="683" y="292" width="1" height="19" fill="#802323"/>
<rect x="700" y="292" width="1" height="19" fill="#802323"/>
<rect x="717" y="292" width="1" height="19" fill="#802323"/>
<rect x="734" y="292" width="1" height="19" fill="#802323"/>
<rect x="751" y="292" width="1" height="19" fill="#802323"/>
<rect x="768" y="292" width="1" height="19" fill="#802323"/>
<rect x="785" y="292" width="1" height="19" fill="#802323"/>
<rect x="802" y="292" width="1" height="19" fill="#802323"/>
<rect x="819" y="292" width="1" height="19" fill="#802323"/>
<rect x="836" y="292" width="1" height="19" fill="#802323"/>
<rect x="853" y="292" width="1" height="19" fill="#802323"/>
<rect x="870" y="292" width="1" height="19" fill="#802323"/>
<rect x="454" y="276" width="1" height="35" fill="#802323"/>
<path d="M519.8 295.5h1M514.0 305.5h1M603.0 300.5h1.5M677.7 303.5h3M518.4 308.5h3M591.8 305.5h1.5M791.4 301.5h1M775.9 299.5h3M859.1 301.5h1.5M604.4 302.5h1.5M509.5 295.5h2M496.3 306.5h1.5M517.3 303.5h2M767.8 296.5h1M713.3 296.5h3M662.5 302.5h1M562.1 303.5h1M828.3 307.5h1M673.5 299.5h1M637.6 307.5h1M718.0 299.5h2M645.3 299.5h1M499.6 305.5h1M788.6 307.5h1.5M479.8 302.5h2M830.1 300.5h1M467.7 295.5h2M555.0 299.5h1.5M768.9 303.5h1.5M818.6 301.5h3M782.0 301.5h1.5M849.6 296.5h1.5M571.8 299.5h2M815.6 298.5h1.5M737.3 303.5h2M542.7 295.5h1M807.0 305.5h1M777.5 307.5h1M634.8 296.5h1.5M738.3 306.5h1M857.9 295.5h1.5M517.4 305.5h1M765.7 301.5h2M492.3 299.5h2M819.7 308.5h1M697.0 297.5h1M470.7 302.5h1M692.7 304.5h1M475.0 307.5h1M818.3 296.5h2M856.3 302.5h1M529.0 304.5h1M716.8 302.5h1M674.1 306.5h1M599.5 298.5h1M757.4 298.5h1M461.3 298.5h1M536.2 295.5h3M848.6 298.5h1.5M739.5 304.5h3M571.7 299.5h2M861.2 307.5h1.5M620.1 299.5h2M613.4 297.5h2M819.6 306.5h1M553.9 302.5h1.5M741.8 305.5h1M796.4 304.5h1M803.6 305.5h1M622.8 302.5h2M682.0 299.5h3M455.4 305.5h2M665.9 303.5h2M551.9 303.5h2M601.9 295.5h3M565.2 304.5h1.5M484.8 306.5h1M837.1 305.5h1.5M830.8 301.5h1.5M670.9 301.5h1M868.3 295.5h3M605.6 297.5h1M791.3 298.5h1M518.0 304.5h1M719.9 306.5h1M588.1 300.5h2M505.9 297.5h1.5M610.1 300.5h3M670.6 301.5h1M568.7 299.5h2M742.4 301.5h2M757.1 297.5h3M517.0 304.5h1.5M657.1 304.5h3M608.3 299.5h2M559.6 302.5h1M690.9 295.5h1M581.8 302.5h1.5M560.7 298.5h2M492.8 303.5h1M538.4 300.5h1.5M710.5 300.5h1M751.6 300.5h1M749.6 299.5h2M633.2 303.5h1.5M600.7 300.5h3M508.5 303.5h3M609.0 304.5h1.5M810.7 296.5h2M611.9 302.5h2M841.9 304.5h1M499.6 302.5h2M744.8 301.5h2M527.9 295.5h2M658.1 302.5h1M732.2 305.5h2M679.0 307.5h1.5M684.0 305.5h2M503.8 298.5h1M691.1 295.5h2M491.5 305.5h3M642.8 306.5h1M749.0 301.5h1M682.6 305.5h3M513.0 300.5h1M815.5 297.5h1.5M533.7 308.5h1M863.8 298.5h1.5M490.8 300.5h1.5M684.8 302.5h2M736.6 299.5h1M813.4 306.5h3M561.3 297.5h1M540.8 304.5h2M726.4 304.5h1M606.2 306.5h1M643.7 304.5h1M756.5 295.5h1M624.1 302.5h1.5M469.6 298.5h2M575.5 304.5h3M707.5 300.5h2M539.3 297.5h1M634.3 303.5h1M511.6 307.5h3M660.6 295.5h3M759.8 297.5h1M733.6 304.5h1.5M786.6 302.5h1M515.3 307.5h1M668.5 301.5h1M779.3 308.5h2M547.5 306.5h2M738.6 297.5h1M837.0 296.5h1M800.7 299.5h1M816.7 306.5h3M752.5 299.5h1.5M589.1 306.5h1M846.0 304.5h1M616.9 295.5h2M519.5 299.5h3M742.0 297.5h1M756.1 301.5h2M502.3 306.5h1M726.9 297.5h3M672.6 299.5h1.5M462.3 305.5h1M537.9 298.5h1.5M702.2 302.5h1M538.2 301.5h1M694.3 299.5h3M702.6 308.5h1.5M535.4 297.5h1.5M475.7 299.5h2M653.9 299.5h1.5M529.0 306.5h1.5M789.5 305.5h2M494.6 302.5h1M701.3 301.5h1M471.4 303.5h2M722.5 296.5h3M801.2 296.5h1M603.6 304.5h1M592.1 306.5h2M580.4 298.5h1M818.5 296.5h2M566.8 302.5h1.5M648.4 297.5h3M472.4 298.5h1M572.2 302.5h1M830.6 305.5h3M662.5 307.5h1M498.7 295.5h3M542.2 305.5h1M765.1 297.5h1.5M867.7 300.5h3M669.2 299.5h1M489.9 303.5h1M555.7 305.5h3M748.9 295.5h1M485.2 299.5h1M472.0 303.5h1M791.9 299.5h2M699.7 297.5h1.5M843.8 300.5h2M468.3 306.5h1M758.4 304.5h1M784.8 305.5h1M537.0 298.5h1.5M748.0 295.5h1M782.3 301.5h2M672.3 299.5h1M765.7 303.5h1M813.4 295.5h1.5M780.3 296.5h1.5M696.0 306.5h2M733.2 305.5h1M562.2 304.5h1.5M829.1 305.5h3M523.1 300.5h3M578.6 308.5h3M725.9 303.5h1M855.5 306.5h1.5M765.4 306.5h1M536.9 301.5h1M817.9 303.5h1M617.1 305.5h1.5M796.5 300.5h1M549.4 304.5h1.5M729.3 307.5h2M782.9 295.5h2M704.7 308.5h2M628.1 303.5h2M515.3 302.5h1M601.3 306.5h3M468.5 299.5h1.5M532.4 307.5h2M728.3 306.5h1M544.4 303.5h2M795.3 297.5h1.5M592.6 297.5h1M547.7 307.5h3M819.7 308.5h1.5M661.6 308.5h3M782.0 303.5h1M616.7 295.5h1M497.9 298.5h3M789.7 298.5h1.5M734.6 308.5h3M730.4 296.5h1.5M730.5 296.5h3M591.9 298.5h1.5M604.6 304.5h2M842.8 306.5h1M830.1 301.5h1.5M741.0 295.5h1M685.5 301.5h3M823.5 305.5h2M469.5 299.5h1M457.9 308.5h1.5M514.8 303.5h3M665.1 308.5h1M764.0 303.5h1.5M714.4 298.5h3M465.7 302.5h2M723.3 306.5h2M658.9 308.5h1.5M740.7 298.5h1M799.7 301.5h1M783.2 299.5h1" stroke="#8a2222" stroke-width="1" fill="none"/>
<clipPath id="c1859"><rect x="454" y="276" width="418.5" height="35"/></clipPath>
<text x="456.5" y="287.7" font-size="10" fill="#f3e4de" font-weight="bold" text-anchor="start" clip-path="url(#c1859)">Keys (MIDI)</text>
<rect x="879.5" y="276" width="11" height="35" fill="#b23131"/>
<rect x="879.5" y="292" width="11" height="1" fill="#802323"/>
<rect x="887" y="292" width="1" height="19" fill="#802323"/>
<rect x="879.5" y="276" width="1" height="35" fill="#802323"/>
<path d="M881.5 306.5h1M881.3 305.5h1M883.9 307.5h3M882.0 300.5h1.5M885.3 297.5h1.5M885.0 301.5h3M882.1 301.5h1" stroke="#8a2222" stroke-width="1" fill="none"/>
<clipPath id="c1866"><rect x="879.5" y="276" width="10" height="35"/></clipPath>
<text x="882" y="287.7" font-size="10" fill="#f3e4de" font-weight="bold" text-anchor="start" clip-path="url(#c1866)">Keys</text>
<rect x="896" y="276" width="11.5" height="35" fill="#b23131"/>
<rect x="896" y="292" width="11.5" height="1" fill="#802323"/>
<rect x="904" y="292" width="1" height="19" fill="#802323"/>
<rect x="896" y="276" width="1" height="35" fill="#802323"/>
<path d="M900.7 300.5h1.5M899.1 308.5h1.5M897.6 307.5h3M899.5 306.5h1M901.3 299.5h1M898.5 302.5h3M901.7 300.5h1" stroke="#8a2222" stroke-width="1" fill="none"/>
<clipPath id="c1873"><rect x="896" y="276" width="10.5" height="35"/></clipPath>
<text x="898.5" y="287.7" font-size="10" fill="#f3e4de" font-weight="bold" text-anchor="start" clip-path="url(#c1873)">Keys</text>
<rect x="913" y="276" width="17" height="35" fill="#b23131"/>
<rect x="913" y="292" width="17" height="1" fill="#802323"/>
<rect x="921" y="292" width="1" height="19" fill="#802323"/>
<rect x="913" y="276" width="1" height="35" fill="#802323"/>
<path d="M917.0 300.5h2M919.8 299.5h1M916.9 305.5h1M919.9 304.5h1.5M917.9 308.5h1.5M924.8 307.5h3M915.1 303.5h2M923.2 304.5h1.5M915.8 297.5h1M922.5 300.5h1.5M918.4 301.5h1.5" stroke="#8a2222" stroke-width="1" fill="none"/>
<clipPath id="c1880"><rect x="913" y="276" width="16" height="35"/></clipPath>
<text x="915.5" y="287.7" font-size="10" fill="#f3e4de" font-weight="bold" text-anchor="start" clip-path="url(#c1880)">Keys</text>
<rect x="98" y="313" width="34" height="35" fill="#2f51a6"/>
<rect x="98" y="329" width="34" height="1" fill="#203771"/>
<rect x="106" y="329" width="1" height="19" fill="#203771"/>
<rect x="123" y="329" width="1" height="19" fill="#203771"/>
<rect x="98" y="313" width="1" height="35" fill="#203771"/>
<path d="M108.8 334.5h1M113.9 339.5h1.5M102.7 336.5h1M124.9 332.5h1M122.9 341.5h3M111.1 334.5h1.5M121.0 341.5h1M103.2 341.5h1M113.0 344.5h1M119.8 343.5h2M123.6 333.5h2M116.1 335.5h1M120.6 340.5h3M106.6 334.5h1M107.7 337.5h3M126.3 343.5h1.5M99.7 339.5h1M122.5 336.5h1M111.8 342.5h2M106.7 332.5h2M115.5 340.5h1M100.1 343.5h1M112.5 336.5h1.5M126.0 339.5h1" stroke="#1c3782" stroke-width="1" fill="none"/>
<clipPath id="c1888"><rect x="98" y="313" width="33" height="35"/></clipPath>
<text x="100.5" y="324.7" font-size="10" fill="#dfe6f5" font-weight="bold" text-anchor="start" clip-path="url(#c1888)">Keys (MIDI)</text>
<rect x="132" y="313" width="34" height="35" fill="#2f51a6"/>
<rect x="132" y="329" width="34" height="1" fill="#203771"/>
<rect x="140" y="329" width="1" height="19" fill="#203771"/>
<rect x="157" y="329" width="1" height="19" fill="#203771"/>
<rect x="132" y="313" width="1" height="35" fill="#203771"/>
<path d="M139.1 343.5h1M140.9 345.5h3M148.0 332.5h1M133.8 339.5h2M143.5 345.5h1.5M153.3 340.5h2M143.9 345.5h2M139.3 344.5h1M155.5 345.5h1.5M151.4 335.5h2M149.1 338.5h3M145.7 336.5h1M136.1 334.5h1M135.1 344.5h1M145.3 334.5h1M154.7 334.5h1.5M153.9 345.5h3M153.1 332.5h1M144.7 343.5h3M140.4 336.5h1M148.8 336.5h1.5M141.6 332.5h1M152.4 337.5h1M155.5 338.5h1" stroke="#1c3782" stroke-width="1" fill="none"/>
<clipPath id="c1896"><rect x="132" y="313" width="33" height="35"/></clipPath>
<text x="134.5" y="324.7" font-size="10" fill="#dfe6f5" font-weight="bold" text-anchor="start" clip-path="url(#c1896)">Keys (MIDI)</text>
<rect x="166" y="313" width="34" height="35" fill="#2f51a6"/>
<rect x="166" y="329" width="34" height="1" fill="#203771"/>
<rect x="174" y="329" width="1" height="19" fill="#203771"/>
<rect x="191" y="329" width="1" height="19" fill="#203771"/>
<rect x="166" y="313" width="1" height="35" fill="#203771"/>
<path d="M176.6 344.5h1.5M188.8 338.5h1M192.5 343.5h2M192.1 345.5h1M181.8 335.5h2M172.9 335.5h1M193.3 334.5h1.5M193.5 345.5h2M188.7 342.5h1M189.7 343.5h1M170.9 333.5h3M181.9 332.5h1M180.0 332.5h3M182.0 332.5h1.5M176.5 339.5h2M180.6 340.5h1M167.2 334.5h1.5M177.7 333.5h3M191.6 345.5h2M179.8 340.5h2M188.3 339.5h1M191.1 334.5h1M187.1 338.5h2M184.0 333.5h2" stroke="#1c3782" stroke-width="1" fill="none"/>
<clipPath id="c1904"><rect x="166" y="313" width="33" height="35"/></clipPath>
<text x="168.5" y="324.7" font-size="10" fill="#dfe6f5" font-weight="bold" text-anchor="start" clip-path="url(#c1904)">Keys (MIDI)</text>
<rect x="200" y="313" width="34" height="35" fill="#2f51a6"/>
<rect x="200" y="329" width="34" height="1" fill="#203771"/>
<rect x="208" y="329" width="1" height="19" fill="#203771"/>
<rect x="225" y="329" width="1" height="19" fill="#203771"/>
<rect x="200" y="313" width="1" height="35" fill="#203771"/>
<path d="M217.8 332.5h1M223.4 344.5h1M212.0 343.5h1M218.7 342.5h1M207.8 344.5h1M223.5 332.5h1M212.3 345.5h1M222.7 332.5h3M218.9 344.5h1.5M202.2 338.5h2M222.2 333.5h1M206.2 343.5h1M218.2 336.5h3M223.0 344.5h1M203.0 332.5h1M215.1 340.5h3M223.2 339.5h1M219.5 340.5h2M212.1 332.5h1M201.7 343.5h2M206.8 341.5h1M219.8 345.5h3M228.3 339.5h1.5M220.0 333.5h1" stroke="#1c3782" stroke-width="1" fill="none"/>
<clipPath id="c1912"><rect x="200" y="313" width="33" height="35"/></clipPath>
<text x="202.5" y="324.7" font-size="10" fill="#dfe6f5" font-weight="bold" text-anchor="start" clip-path="url(#c1912)">Keys (MIDI)</text>
<rect x="234" y="313" width="34" height="35" fill="#2f51a6"/>
<rect x="234" y="329" width="34" height="1" fill="#203771"/>
<rect x="242" y="329" width="1" height="19" fill="#203771"/>
<rect x="259" y="329" width="1" height="19" fill="#203771"/>
<rect x="234" y="313" width="1" height="35" fill="#203771"/>
<path d="M258.8 343.5h1M237.5 335.5h1.5M256.3 334.5h3M251.1 336.5h1M235.2 333.5h1M254.1 342.5h1M249.6 338.5h2M260.9 340.5h1M260.7 342.5h1M260.6 343.5h1M253.8 333.5h2M257.4 332.5h3M261.4 338.5h1M242.1 336.5h1.5M235.8 337.5h1M247.4 345.5h2M256.3 343.5h1.5M242.7 335.5h2M250.1 336.5h3M259.8 344.5h1.5M235.0 342.5h1M259.9 343.5h3M239.5 332.5h1.5M246.9 336.5h1" stroke="#1c3782" stroke-width="1" fill="none"/>
<clipPath id="c1920"><rect x="234" y="313" width="33" height="35"/></clipPath>
<text x="236.5" y="324.7" font-size="10" fill="#dfe6f5" font-weight="bold" text-anchor="start" clip-path="url(#c1920)">Keys (MIDI)</text>
<rect x="268" y="313" width="34" height="35" fill="#2f51a6"/>
<rect x="268" y="329" width="34" height="1" fill="#203771"/>
<rect x="276" y="329" width="1" height="19" fill="#203771"/>
<rect x="293" y="329" width="1" height="19" fill="#203771"/>
<rect x="268" y="313" width="1" height="35" fill="#203771"/>
<path d="M284.0 345.5h1M274.9 332.5h3M275.9 344.5h3M288.3 345.5h1M287.1 335.5h1M289.0 338.5h1M296.7 334.5h2M286.2 334.5h1.5M290.1 335.5h1.5M295.9 333.5h1M287.0 340.5h3M273.0 332.5h1M288.5 336.5h1M289.4 339.5h1M279.1 333.5h1M289.2 341.5h3M288.3 335.5h2M274.0 333.5h1.5M280.1 341.5h1M281.5 342.5h1M293.1 338.5h1.5M292.3 332.5h1M272.0 334.5h1.5M287.8 335.5h1" stroke="#1c3782" stroke-width="1" fill="none"/>
<clipPath id="c1928"><rect x="268" y="313" width="33" height="35"/></clipPath>
<text x="270.5" y="324.7" font-size="10" fill="#dfe6f5" font-weight="bold" text-anchor="start" clip-path="url(#c1928)">Keys (MIDI)</text>
<rect x="302" y="313" width="34" height="35" fill="#2f51a6"/>
<rect x="302" y="329" width="34" height="1" fill="#203771"/>
<rect x="310" y="329" width="1" height="19" fill="#203771"/>
<rect x="327" y="329" width="1" height="19" fill="#203771"/>
<rect x="302" y="313" width="1" height="35" fill="#203771"/>
<path d="M326.7 333.5h1M307.4 341.5h3M311.7 335.5h1M307.0 333.5h1M313.7 341.5h3M319.3 332.5h1.5M303.4 343.5h1M329.2 336.5h3M323.2 333.5h1.5M313.4 334.5h1M327.4 344.5h1M311.0 337.5h1M309.3 334.5h1M324.4 343.5h1M321.0 338.5h1M304.4 341.5h1.5M309.6 332.5h2M316.6 333.5h3M322.9 333.5h1M316.6 344.5h1M314.9 332.5h1M304.9 337.5h2M309.7 336.5h1M305.0 335.5h1" stroke="#1c3782" stroke-width="1" fill="none"/>
<clipPath id="c1936"><rect x="302" y="313" width="33" height="35"/></clipPath>
<text x="304.5" y="324.7" font-size="10" fill="#dfe6f5" font-weight="bold" text-anchor="start" clip-path="url(#c1936)">Keys (MIDI)</text>
<rect x="336" y="313" width="34" height="35" fill="#2f51a6"/>
<rect x="336" y="329" width="34" height="1" fill="#203771"/>
<rect x="344" y="329" width="1" height="19" fill="#203771"/>
<rect x="361" y="329" width="1" height="19" fill="#203771"/>
<rect x="336" y="313" width="1" height="35" fill="#203771"/>
<path d="M352.8 344.5h2M340.1 345.5h3M338.6 339.5h3M361.2 334.5h1M350.4 338.5h2M359.0 333.5h2M354.7 333.5h1.5M355.6 337.5h1M356.7 338.5h1.5M342.0 332.5h3M362.3 341.5h1M352.0 335.5h2M355.6 333.5h1.5M341.1 343.5h1.5M357.7 344.5h1.5M355.4 341.5h1M337.4 338.5h1M349.6 343.5h1.5M349.3 333.5h1M345.5 336.5h1M363.3 337.5h1M337.4 345.5h1M338.8 337.5h2M355.8 334.5h1" stroke="#1c3782" stroke-width="1" fill="none"/>
<clipPath id="c1944"><rect x="336" y="313" width="33" height="35"/></clipPath>
<text x="338.5" y="324.7" font-size="10" fill="#dfe6f5" font-weight="bold" text-anchor="start" clip-path="url(#c1944)">Keys (MIDI)</text>
<rect x="370" y="313" width="34" height="35" fill="#2f51a6"/>
<rect x="370" y="329" width="34" height="1" fill="#203771"/>
<rect x="378" y="329" width="1" height="19" fill="#203771"/>
<rect x="395" y="329" width="1" height="19" fill="#203771"/>
<rect x="370" y="313" width="1" height="35" fill="#203771"/>
<path d="M376.4 338.5h1.5M399.0 338.5h1M398.3 342.5h1M382.4 336.5h1M386.9 342.5h1M394.2 332.5h3M393.7 340.5h2M386.7 341.5h1M378.3 339.5h1.5M397.9 334.5h1M399.0 333.5h1.5M395.8 332.5h1M382.8 333.5h2M393.1 335.5h3M389.5 344.5h1.5M398.1 341.5h1M372.4 344.5h1M398.1 344.5h1M379.1 345.5h1M382.8 339.5h1.5M393.6 341.5h3M387.3 338.5h2M389.4 340.5h1.5M396.2 345.5h1" stroke="#1c3782" stroke-width="1" fill="none"/>
<clipPath id="c1952"><rect x="370" y="313" width="33" height="35"/></clipPath>
<text x="372.5" y="324.7" font-size="10" fill="#dfe6f5" font-weight="bold" text-anchor="start" clip-path="url(#c1952)">Keys (MIDI)</text>
<rect x="404" y="313" width="34" height="35" fill="#2f51a6"/>
<rect x="404" y="329" width="34" height="1" fill="#203771"/>
<rect x="412" y="329" width="1" height="19" fill="#203771"/>
<rect x="429" y="329" width="1" height="19" fill="#203771"/>
<rect x="404" y="313" width="1" height="35" fill="#203771"/>
<path d="M417.2 340.5h1.5M421.0 334.5h1.5M423.0 337.5h3M412.2 343.5h1M422.5 338.5h1.5M427.4 332.5h2M414.5 342.5h1M418.0 336.5h1M432.4 333.5h1M420.2 337.5h1M430.2 335.5h1.5M415.6 338.5h1.5M408.6 335.5h1M429.6 333.5h3M408.8 337.5h2M423.1 338.5h2M431.4 340.5h1.5M414.7 342.5h1.5M409.9 338.5h1M423.9 342.5h2M415.4 345.5h1.5M428.4 340.5h1M424.7 345.5h1M415.3 343.5h1.5" stroke="#1c3782" stroke-width="1" fill="none"/>
<clipPath id="c1960"><rect x="404" y="313" width="33" height="35"/></clipPath>
<text x="406.5" y="324.7" font-size="10" fill="#dfe6f5" font-weight="bold" text-anchor="start" clip-path="url(#c1960)">Keys (MIDI)</text>
<rect x="438" y="313" width="25.5" height="35" fill="#2f51a6"/>
<rect x="438" y="329" width="25.5" height="1" fill="#203771"/>
<rect x="446" y="329" width="1" height="19" fill="#203771"/>
<rect x="438" y="313" width="1" height="35" fill="#203771"/>
<path d="M442.2 332.5h2M455.6 344.5h3M439.9 344.5h3M449.4 342.5h1.5M439.6 343.5h1M440.7 335.5h1M443.5 335.5h1M439.4 333.5h1M457.9 334.5h1.5M440.4 336.5h1.5M447.1 338.5h1.5M445.5 344.5h1.5M442.2 333.5h3M440.0 345.5h1M454.4 342.5h1.5M448.8 333.5h3M457.1 339.5h1M453.6 343.5h2" stroke="#1c3782" stroke-width="1" fill="none"/>
<clipPath id="c1967"><rect x="438" y="313" width="24.5" height="35"/></clipPath>
<text x="440.5" y="324.7" font-size="10" fill="#dfe6f5" font-weight="bold" text-anchor="start" clip-path="url(#c1967)">Keys (MIDI)</text>
<rect x="463.5" y="313" width="25.5" height="35" fill="#2f51a6"/>
<rect x="463.5" y="329" width="25.5" height="1" fill="#203771"/>
<rect x="480" y="329" width="1" height="19" fill="#203771"/>
<rect x="463.5" y="313" width="1" height="35" fill="#203771"/>
<path d="M472.0 342.5h1M470.6 333.5h2M466.3 340.5h1M480.0 338.5h2M479.9 335.5h1M480.6 338.5h2M467.2 334.5h3M468.7 343.5h2M469.2 335.5h2M474.7 336.5h1M465.1 342.5h1M474.5 334.5h2M476.5 344.5h1M483.7 345.5h1.5M467.1 332.5h2M479.5 343.5h1.5M472.2 339.5h1.5M465.6 340.5h1" stroke="#1c3782" stroke-width="1" fill="none"/>
<clipPath id="c1974"><rect x="463.5" y="313" width="24.5" height="35"/></clipPath>
<text x="466" y="324.7" font-size="10" fill="#dfe6f5" font-weight="bold" text-anchor="start" clip-path="url(#c1974)">Keys (MIDI)</text>
<rect x="489" y="313" width="25.5" height="35" fill="#2f51a6"/>
<rect x="489" y="329" width="25.5" height="1" fill="#203771"/>
<rect x="497" y="329" width="1" height="19" fill="#203771"/>
<rect x="489" y="313" width="1" height="35" fill="#203771"/>
<path d="M495.7 336.5h1M492.9 345.5h1M499.0 334.5h1M505.3 342.5h1.5M503.4 338.5h1.5M505.1 333.5h1M502.2 338.5h1M494.9 341.5h1M498.8 343.5h2M505.0 337.5h2M505.2 342.5h1.5M502.1 333.5h2M491.7 344.5h1M490.7 345.5h3M492.5 338.5h3M490.7 341.5h1.5M498.5 333.5h2M503.6 342.5h1" stroke="#1c3782" stroke-width="1" fill="none"/>
<clipPath id="c1981"><rect x="489" y="313" width="24.5" height="35"/></clipPath>
<text x="491.5" y="324.7" font-size="10" fill="#dfe6f5" font-weight="bold" text-anchor="start" clip-path="url(#c1981)">Keys (MIDI)</text>
<rect x="514.5" y="313" width="25.5" height="35" fill="#2f51a6"/>
<rect x="514.5" y="329" width="25.5" height="1" fill="#203771"/>
<rect x="530" y="329" width="1" height="19" fill="#203771"/>
<rect x="514.5" y="313" width="1" height="35" fill="#203771"/>
<path d="M516.1 344.5h1M525.8 341.5h1.5M518.7 339.5h2M518.8 334.5h2M529.3 337.5h1M524.4 339.5h1M520.6 342.5h2M524.7 345.5h3M531.3 342.5h2M529.5 342.5h1M530.1 344.5h2M517.6 343.5h1.5M531.1 332.5h3M524.6 345.5h1M534.5 340.5h1.5M518.9 342.5h1.5M528.8 341.5h1M531.5 344.5h3" stroke="#1c3782" stroke-width="1" fill="none"/>
<clipPath id="c1988"><rect x="514.5" y="313" width="24.5" height="35"/></clipPath>
<text x="517" y="324.7" font-size="10" fill="#dfe6f5" font-weight="bold" text-anchor="start" clip-path="url(#c1988)">Keys (MIDI)</text>
<rect x="540" y="313" width="25.5" height="35" fill="#2f51a6"/>
<rect x="540" y="329" width="25.5" height="1" fill="#203771"/>
<rect x="547" y="329" width="1" height="19" fill="#203771"/>
<rect x="564" y="329" width="1" height="19" fill="#203771"/>
<rect x="540" y="313" width="1" height="35" fill="#203771"/>
<path d="M547.7 343.5h1.5M552.8 344.5h1.5M545.4 336.5h1.5M559.5 336.5h3M547.9 337.5h1M559.4 332.5h2M555.7 342.5h3M555.7 335.5h1M560.3 342.5h1M556.9 335.5h1.5M548.4 343.5h1M545.7 341.5h1M547.7 343.5h1.5M558.1 333.5h3M553.7 332.5h3M560.1 345.5h2M556.3 342.5h1M555.2 337.5h1" stroke="#1c3782" stroke-width="1" fill="none"/>
<clipPath id="c1996"><rect x="540" y="313" width="24.5" height="35"/></clipPath>
<text x="542.5" y="324.7" font-size="10" fill="#dfe6f5" font-weight="bold" text-anchor="start" clip-path="url(#c1996)">Keys (MIDI)</text>
<rect x="565.5" y="313" width="25" height="35" fill="#2f51a6"/>
<rect x="565.5" y="329" width="25" height="1" fill="#203771"/>
<rect x="581" y="329" width="1" height="19" fill="#203771"/>
<rect x="565.5" y="313" width="1" height="35" fill="#203771"/>
<path d="M568.4 336.5h1M583.7 332.5h1.5M567.8 332.5h1M570.3 338.5h2M572.4 338.5h2M572.4 340.5h3M575.4 344.5h1.5M580.5 336.5h1M577.9 345.5h3M567.8 338.5h1M583.2 341.5h1M570.5 339.5h1M578.9 339.5h2M577.7 338.5h1M574.7 333.5h3M572.0 339.5h1.5M568.4 343.5h3" stroke="#1c3782" stroke-width="1" fill="none"/>
<clipPath id="c2003"><rect x="565.5" y="313" width="24" height="35"/></clipPath>
<text x="568" y="324.7" font-size="10" fill="#dfe6f5" font-weight="bold" text-anchor="start" clip-path="url(#c2003)">Keys (MIDI)</text>
<rect x="590.5" y="313" width="25.5" height="35" fill="#2f51a6"/>
<rect x="590.5" y="329" width="25.5" height="1" fill="#203771"/>
<rect x="598" y="329" width="1" height="19" fill="#203771"/>
<rect x="615" y="329" width="1" height="19" fill="#203771"/>
<rect x="590.5" y="313" width="1" height="35" fill="#203771"/>
<path d="M607.1 335.5h2M594.6 340.5h1M609.6 334.5h1.5M610.8 339.5h1M601.1 342.5h1M604.5 334.5h2M611.0 339.5h1M595.1 344.5h3M608.6 333.5h3M598.6 344.5h1M601.3 344.5h1M601.5 345.5h3M595.7 334.5h2M607.2 337.5h3M604.9 340.5h1M599.7 339.5h2M592.6 342.5h1.5M609.1 334.5h1" stroke="#1c3782" stroke-width="1" fill="none"/>
<clipPath id="c2011"><rect x="590.5" y="313" width="24.5" height="35"/></clipPath>
<text x="593" y="324.7" font-size="10" fill="#dfe6f5" font-weight="bold" text-anchor="start" clip-path="url(#c2011)">Keys (MIDI)</text>
<rect x="616" y="313" width="25.5" height="35" fill="#2f51a6"/>
<rect x="616" y="329" width="25.5" height="1" fill="#203771"/>
<rect x="632" y="329" width="1" height="19" fill="#203771"/>
<rect x="616" y="313" width="1" height="35" fill="#203771"/>
<path d="M627.5 335.5h1M621.5 334.5h1M636.0 342.5h1M631.6 341.5h1M622.3 343.5h3M618.0 345.5h2M634.0 344.5h3M630.2 333.5h2M620.3 335.5h3M623.6 342.5h1M636.4 335.5h2M624.0 338.5h1.5M620.2 335.5h1M619.8 340.5h1M626.8 334.5h2M633.4 342.5h3M626.5 345.5h2M627.1 338.5h3" stroke="#1c3782" stroke-width="1" fill="none"/>
<clipPath id="c2018"><rect x="616" y="313" width="24.5" height="35"/></clipPath>
<text x="618.5" y="324.7" font-size="10" fill="#dfe6f5" font-weight="bold" text-anchor="start" clip-path="url(#c2018)">Keys (MIDI)</text>
<rect x="641.5" y="313" width="24.5" height="35" fill="#2f51a6"/>
<rect x="641.5" y="329" width="24.5" height="1" fill="#203771"/>
<rect x="649" y="329" width="1" height="19" fill="#203771"/>
<rect x="641.5" y="313" width="1" height="35" fill="#203771"/>
<path d="M645.2 334.5h1M649.0 337.5h1M650.0 336.5h2M648.7 341.5h2M654.4 338.5h3M652.6 332.5h2M649.1 340.5h2M660.1 340.5h1M652.8 341.5h1M660.1 334.5h1.5M655.0 337.5h1.5M653.4 341.5h1.5M657.3 334.5h3M649.9 334.5h1M645.0 344.5h1M653.9 343.5h2M651.7 337.5h1" stroke="#1c3782" stroke-width="1" fill="none"/>
<clipPath id="c2025"><rect x="641.5" y="313" width="23.5" height="35"/></clipPath>
<text x="644" y="324.7" font-size="10" fill="#dfe6f5" font-weight="bold" text-anchor="start" clip-path="url(#c2025)">Keys (MIDI)</text>
<rect x="284.5" y="350" width="17" height="35" fill="#2f51a6"/>
<rect x="284.5" y="366" width="17" height="1" fill="#203771"/>
<rect x="293" y="366" width="1" height="19" fill="#203771"/>
<rect x="284.5" y="350" width="1" height="35" fill="#203771"/>
<path d="M289.3 376.5h1.5M292.5 375.5h1.5M288.3 377.5h3M294.1 372.5h1.5M294.3 369.5h3M285.6 381.5h1.5M294.5 371.5h2M285.7 371.5h1M293.6 370.5h1.5M288.0 369.5h1.5M286.8 382.5h1M295.9 376.5h1" stroke="#1c3782" stroke-width="1" fill="none"/>
<clipPath id="c2032"><rect x="284.5" y="350" width="16" height="35"/></clipPath>
<text x="287" y="361.7" font-size="10" fill="#dfe6f5" font-weight="bold" text-anchor="start" clip-path="url(#c2032)">Keys (MIDI)</text>
<rect x="98" y="387" width="34" height="35" fill="#2f51a6"/>
<rect x="98" y="403" width="34" height="1" fill="#203771"/>
<rect x="106" y="403" width="1" height="19" fill="#203771"/>
<rect x="123" y="403" width="1" height="19" fill="#203771"/>
<rect x="98" y="387" width="1" height="35" fill="#203771"/>
<path d="M120.6 408.5h1M100.1 412.5h2M110.8 414.5h1M115.7 419.5h1M101.4 408.5h1M99.6 415.5h1M102.1 408.5h1M104.5 411.5h1M109.1 419.5h2M108.1 411.5h2M105.5 419.5h1M103.6 418.5h1.5M116.5 415.5h2M113.8 415.5h1M120.9 413.5h3M99.4 412.5h1M115.8 410.5h2M113.3 408.5h1M124.6 413.5h1M112.9 415.5h1M118.3 406.5h3M125.3 417.5h1.5M110.6 415.5h3M109.7 415.5h1.5" stroke="#1c3782" stroke-width="1" fill="none"/>
<clipPath id="c2040"><rect x="98" y="387" width="33" height="35"/></clipPath>
<text x="100.5" y="398.7" font-size="10" fill="#dfe6f5" font-weight="bold" text-anchor="start" clip-path="url(#c2040)">Keys (MIDI)</text>
<rect x="132" y="387" width="34" height="35" fill="#2f51a6"/>
<rect x="132" y="403" width="34" height="1" fill="#203771"/>
<rect x="140" y="403" width="1" height="19" fill="#203771"/>
<rect x="157" y="403" width="1" height="19" fill="#203771"/>
<rect x="132" y="387" width="1" height="35" fill="#203771"/>
<path d="M159.9 419.5h3M137.5 418.5h1M140.5 418.5h3M156.0 419.5h1.5M141.9 416.5h1.5M155.4 410.5h3M157.0 412.5h1.5M157.0 419.5h2M159.0 416.5h1M145.0 407.5h2M158.4 414.5h2M152.7 406.5h3M154.8 407.5h1.5M157.5 414.5h2M145.4 416.5h1.5M135.3 412.5h1.5M135.7 412.5h1.5M139.0 415.5h1.5M154.9 408.5h3M159.4 419.5h2M154.5 415.5h1.5M145.8 418.5h2M152.1 415.5h1M134.3 417.5h1.5" stroke="#1c3782" stroke-width="1" fill="none"/>
<clipPath id="c2048"><rect x="132" y="387" width="33" height="35"/></clipPath>
<text x="134.5" y="398.7" font-size="10" fill="#dfe6f5" font-weight="bold" text-anchor="start" clip-path="url(#c2048)">Keys (MIDI)</text>
<rect x="166" y="387" width="34" height="35" fill="#2f51a6"/>
<rect x="166" y="403" width="34" height="1" fill="#203771"/>
<rect x="174" y="403" width="1" height="19" fill="#203771"/>
<rect x="191" y="403" width="1" height="19" fill="#203771"/>
<rect x="166" y="387" width="1" height="35" fill="#203771"/>
<path d="M168.5 419.5h3M187.6 419.5h1.5M184.8 411.5h1M174.3 413.5h2M180.4 407.5h1M173.0 414.5h1M187.4 410.5h3M172.2 407.5h1M185.1 417.5h1.5M176.4 408.5h1M180.3 417.5h1.5M174.3 406.5h1M192.4 414.5h1M184.7 413.5h2M172.9 411.5h2M189.6 415.5h2M173.5 412.5h3M193.9 418.5h1M181.6 407.5h1.5M178.3 408.5h1M192.2 412.5h1.5M182.8 407.5h2M188.3 414.5h1M176.6 407.5h2" stroke="#1c3782" stroke-width="1" fill="none"/>
<clipPath id="c2056"><rect x="166" y="387" width="33" height="35"/></clipPath>
<text x="168.5" y="398.7" font-size="10" fill="#dfe6f5" font-weight="bold" text-anchor="start" clip-path="url(#c2056)">Keys (MIDI)</text>
<rect x="200" y="387" width="34" height="35" fill="#2f51a6"/>
<rect x="200" y="403" width="34" height="1" fill="#203771"/>
<rect x="208" y="403" width="1" height="19" fill="#203771"/>
<rect x="225" y="403" width="1" height="19" fill="#203771"/>
<rect x="200" y="387" width="1" height="35" fill="#203771"/>
<path d="M227.9 419.5h1M215.0 409.5h1.5M211.8 413.5h1.5M222.6 410.5h2M204.5 409.5h1.5M216.8 419.5h1.5M214.5 419.5h1M216.2 418.5h1M211.1 414.5h1.5M209.2 415.5h3M202.8 406.5h3M203.0 413.5h1M222.1 409.5h1M220.2 418.5h1M220.0 415.5h1M208.5 419.5h1M228.1 410.5h3M220.4 413.5h1.5M226.3 414.5h1M201.4 408.5h1M226.4 409.5h1M227.1 409.5h3M227.8 415.5h2M212.3 415.5h1" stroke="#1c3782" stroke-width="1" fill="none"/>
<clipPath id="c2064"><rect x="200" y="387" width="33" height="35"/></clipPath>
<text x="202.5" y="398.7" font-size="10" fill="#dfe6f5" font-weight="bold" text-anchor="start" clip-path="url(#c2064)">Keys (MIDI)</text>
<rect x="234" y="387" width="33" height="35" fill="#2f51a6"/>
<rect x="234" y="403" width="33" height="1" fill="#203771"/>
<rect x="242" y="403" width="1" height="19" fill="#203771"/>
<rect x="259" y="403" width="1" height="19" fill="#203771"/>
<rect x="234" y="387" width="1" height="35" fill="#203771"/>
<path d="M251.1 415.5h2M238.0 416.5h1.5M248.9 411.5h1M260.7 419.5h2M251.8 415.5h1M245.0 411.5h1M244.7 418.5h1.5M249.7 408.5h1M239.0 414.5h1M239.3 413.5h3M237.6 412.5h2M249.7 406.5h1M241.4 407.5h1M241.5 417.5h1M255.9 417.5h3M245.5 410.5h1M241.0 415.5h1M247.2 413.5h1M251.3 408.5h1M242.0 416.5h1M244.1 407.5h1.5M237.0 416.5h2M241.6 408.5h1.5" stroke="#1c3782" stroke-width="1" fill="none"/>
<clipPath id="c2072"><rect x="234" y="387" width="32" height="35"/></clipPath>
<text x="236.5" y="398.7" font-size="10" fill="#dfe6f5" font-weight="bold" text-anchor="start" clip-path="url(#c2072)">Keys (MIDI)</text>
<rect x="34.5" y="424" width="63" height="35" fill="#55a12f"/>
<rect x="34.5" y="440" width="63" height="1" fill="#35641d"/>
<rect x="34.5" y="424" width="1" height="35" fill="#35641d"/>
<rect x="34.5" y="424" width="63" height="1" fill="#35641d"/>
<path d="M62.0 444.4h1.5M66.8 450.6h1.5M65.9 452.6h1.5M80.3 453.3h1.5M53.3 452.4h1.5M67.2 445.5h1.5M60.4 450.8h1.5M51.8 452.0h1.5M64.1 451.6h1.5M42.5 452.2h1.5M53.5 451.7h1.5M75.5 449.3h1.5M61.1 443.9h1.5M41.5 453.6h1.5M52.0 451.4h1.5M76.6 448.9h1.5M91.1 445.6h1.5M40.2 451.3h1.5M44.0 452.4h1.5M75.4 448.8h1.5M94.6 453.3h1.5M83.1 445.5h1.5" stroke="#1c3a10" stroke-width="0.900" fill="none"/>
<rect x="161.5" y="424" width="3.5" height="35" fill="#55a12f"/>
<rect x="161.5" y="440" width="3.5" height="1" fill="#35641d"/>
<rect x="161.5" y="424" width="1" height="35" fill="#35641d"/>
<rect x="161.5" y="424" width="3.5" height="1" fill="#35641d"/>
<rect x="302" y="424" width="136" height="35" fill="#09bdae"/>
<rect x="302" y="440" width="136" height="1" fill="#07978b"/>
<rect x="310" y="440" width="1" height="19" fill="#07978b"/>
<rect x="327" y="440" width="1" height="19" fill="#07978b"/>
<rect x="344" y="440" width="1" height="19" fill="#07978b"/>
<rect x="361" y="440" width="1" height="19" fill="#07978b"/>
<rect x="378" y="440" width="1" height="19" fill="#07978b"/>
<rect x="395" y="440" width="1" height="19" fill="#07978b"/>
<rect x="412" y="440" width="1" height="19" fill="#07978b"/>
<rect x="429" y="440" width="1" height="19" fill="#07978b"/>
<rect x="302" y="424" width="1" height="35" fill="#07978b"/>
<path d="M304.0 449.5L307.0 447.5L310.0 448.5L314.0 448.5L317.0 450.5L321.0 450.5L325.0 449.5L330.0 449.5L333.0 447.5L336.0 445.5L341.0 444.5L344.0 446.5L348.0 448.5L350.0 446.5L355.0 444.5L358.0 444.0L361.0 444.0L365.0 444.0L369.0 445.0L373.0 447.0L378.0 449.0L381.0 449.0L384.0 449.0L388.0 448.0L392.0 448.0L395.0 449.0L399.0 451.0L402.0 452.0L404.0 452.0L409.0 454.0L412.0 452.0L416.0 452.0L418.0 454.0L423.0 454.0L428.0 453.0L433.0 454.0" stroke="#0a3a36" stroke-width="0.800" fill="none" stroke-dasharray="3 1.5"/>
<clipPath id="c2095"><rect x="302" y="424" width="135" height="35"/></clipPath>
<text x="304.5" y="435.7" font-size="10" fill="#063c38" font-weight="normal" text-anchor="start" clip-path="url(#c2095)" letter-spacing="0.12" stroke="#063c38" stroke-width="0.2">3 4-Nexus</text>
<rect x="438" y="424" width="3" height="35" fill="#09bdae"/>
<rect x="438" y="440" width="3" height="1" fill="#07978b"/>
<rect x="438" y="424" width="1" height="35" fill="#07978b"/>
<rect x="522" y="424" width="64.5" height="35" fill="#55a12f"/>
<rect x="522" y="440" width="64.5" height="1" fill="#35641d"/>
<rect x="522" y="424" width="1" height="35" fill="#35641d"/>
<rect x="522" y="424" width="64.5" height="1" fill="#35641d"/>
<path d="M548.3 453.6h1.5M553.2 445.8h1.5M551.3 450.1h1.5M545.7 452.5h1.5M536.5 450.4h1.5M563.6 447.2h1.5M566.0 449.0h1.5M545.8 448.5h1.5M555.7 447.1h1.5M572.7 447.0h1.5M530.6 452.6h1.5M553.5 449.9h1.5M553.5 454.6h1.5M575.4 448.7h1.5M549.5 448.0h1.5M535.1 452.4h1.5M579.8 447.3h1.5M575.5 448.6h1.5M535.6 447.9h1.5M531.2 448.7h1.5M548.0 450.7h1.5M525.2 453.5h1.5" stroke="#1c3a10" stroke-width="0.900" fill="none"/>
<rect x="586.5" y="424" width="3.5" height="35" fill="#55a12f"/>
<rect x="586.5" y="440" width="3.5" height="1" fill="#35641d"/>
<rect x="586.5" y="424" width="1" height="35" fill="#35641d"/>
<rect x="586.5" y="424" width="3.5" height="1" fill="#35641d"/>
<rect x="659" y="424" width="136" height="35" fill="#09bdae"/>
<rect x="659" y="440" width="136" height="1" fill="#07978b"/>
<rect x="666" y="440" width="1" height="19" fill="#07978b"/>
<rect x="683" y="440" width="1" height="19" fill="#07978b"/>
<rect x="700" y="440" width="1" height="19" fill="#07978b"/>
<rect x="717" y="440" width="1" height="19" fill="#07978b"/>
<rect x="734" y="440" width="1" height="19" fill="#07978b"/>
<rect x="751" y="440" width="1" height="19" fill="#07978b"/>
<rect x="768" y="440" width="1" height="19" fill="#07978b"/>
<rect x="785" y="440" width="1" height="19" fill="#07978b"/>
<rect x="659" y="424" width="1" height="35" fill="#07978b"/>
<path d="M661.0 449.5L663.0 451.5L667.0 449.5L671.0 449.5L674.0 451.5L676.0 452.5L679.0 451.5L681.0 452.5L684.0 452.5L686.0 451.5L689.0 450.5L694.0 451.5L698.0 449.5L700.0 450.5L704.0 451.5L706.0 452.5L711.0 450.5L714.0 449.5L719.0 449.5L724.0 449.5L726.0 448.5L728.0 448.5L733.0 447.5L738.0 446.5L742.0 447.5L745.0 447.5L747.0 448.5L751.0 448.5L756.0 450.5L761.0 450.5L763.0 448.5L768.0 448.5L771.0 449.5L774.0 450.5L779.0 451.5L784.0 450.5L786.0 450.5L791.0 448.5" stroke="#0a3a36" stroke-width="0.800" fill="none" stroke-dasharray="3 1.5"/>
<clipPath id="c2121"><rect x="659" y="424" width="135" height="35"/></clipPath>
<text x="661.5" y="435.7" font-size="10" fill="#063c38" font-weight="normal" text-anchor="start" clip-path="url(#c2121)" letter-spacing="0.12" stroke="#063c38" stroke-width="0.2">3 4-Nexus</text>
<rect x="795" y="424" width="142" height="35" fill="#cf2f6d"/>
<rect x="795" y="440" width="142" height="1" fill="#a62657"/>
<rect x="802" y="440" width="1" height="19" fill="#a62657"/>
<rect x="819" y="440" width="1" height="19" fill="#a62657"/>
<rect x="836" y="440" width="1" height="19" fill="#a62657"/>
<rect x="853" y="440" width="1" height="19" fill="#a62657"/>
<rect x="870" y="440" width="1" height="19" fill="#a62657"/>
<rect x="887" y="440" width="1" height="19" fill="#a62657"/>
<rect x="904" y="440" width="1" height="19" fill="#a62657"/>
<rect x="921" y="440" width="1" height="19" fill="#a62657"/>
<rect x="795" y="424" width="1" height="35" fill="#a62657"/>
<path d="M797.0 449.5L800.0 451.5L802.0 449.5L804.0 447.5L807.0 447.5L809.0 447.5L814.0 448.5L819.0 448.5L823.0 449.5L827.0 451.5L830.0 449.5L835.0 447.5L839.0 447.5L842.0 446.5L847.0 446.5L851.0 447.5L855.0 447.5L857.0 448.5L861.0 446.5L865.0 448.5L869.0 447.5L873.0 449.5L875.0 449.5L878.0 449.5L880.0 449.5L883.0 449.5L885.0 448.5L888.0 450.5L893.0 450.5L898.0 450.5L901.0 449.5L906.0 448.5L910.0 450.5L912.0 448.5L917.0 447.5L921.0 449.5L926.0 451.5L928.0 451.5L933.0 450.5" stroke="#3a0a1e" stroke-width="0.800" fill="none" stroke-dasharray="3 1.5"/>
<clipPath id="c2135"><rect x="795" y="424" width="141" height="35"/></clipPath>
<text x="797.5" y="435.7" font-size="10" fill="#f6dce6" font-weight="bold" text-anchor="start" clip-path="url(#c2135)">4 4-Nexus</text>
<rect x="34.5" y="461" width="16.5" height="35" fill="#55a12f"/>
<rect x="34.5" y="477" width="16.5" height="1" fill="#35641d"/>
<rect x="34.5" y="461" width="1" height="35" fill="#35641d"/>
<rect x="34.5" y="461" width="16.5" height="1" fill="#35641d"/>
<path d="M44.6 485.6h1.5M44.6 484.4h1.5M38.6 489.4h1.5M43.4 485.6h1.5" stroke="#1c3a10" stroke-width="0.900" fill="none"/>
<rect x="65.5" y="461" width="32" height="35" fill="#55a12f"/>
<rect x="65.5" y="477" width="32" height="1" fill="#35641d"/>
<rect x="65.5" y="461" width="1" height="35" fill="#35641d"/>
<rect x="65.5" y="461" width="32" height="1" fill="#35641d"/>
<path d="M84.8 485.7h1.5M86.5 484.1h1.5M89.3 484.6h1.5M79.9 487.4h1.5M88.6 484.1h1.5M94.7 488.5h1.5M70.5 491.0h1.5M93.6 489.5h1.5M75.0 482.3h1.5" stroke="#1c3a10" stroke-width="0.900" fill="none"/>
<rect x="522" y="461" width="64" height="35" fill="#55a12f"/>
<rect x="522" y="477" width="64" height="1" fill="#35641d"/>
<rect x="522" y="461" width="1" height="35" fill="#35641d"/>
<rect x="522" y="461" width="64" height="1" fill="#35641d"/>
<path d="M573.7 485.0h1.5M577.4 481.5h1.5M565.3 483.1h1.5M536.2 484.4h1.5M525.6 491.5h1.5M528.3 491.0h1.5M533.6 489.7h1.5M579.2 491.3h1.5M583.4 480.8h1.5M540.9 490.5h1.5M567.9 485.5h1.5M579.5 482.0h1.5M575.7 482.2h1.5M551.8 485.9h1.5M535.8 483.7h1.5M568.7 483.2h1.5M565.7 485.4h1.5M537.0 484.8h1.5M554.6 487.6h1.5M569.2 491.4h1.5M545.4 487.8h1.5M567.9 484.4h1.5" stroke="#1c3a10" stroke-width="0.900" fill="none"/>
<rect x="795" y="461" width="67" height="35" fill="#b19ae6"/>
<rect x="795" y="477" width="67" height="1" fill="#9683c4"/>
<rect x="802" y="477" width="1" height="19" fill="#9683c4"/>
<rect x="819" y="477" width="1" height="19" fill="#9683c4"/>
<rect x="836" y="477" width="1" height="19" fill="#9683c4"/>
<rect x="853" y="477" width="1" height="19" fill="#9683c4"/>
<rect x="795" y="461" width="1" height="35" fill="#9683c4"/>
<path d="M797 491.5h1M799 490.5h1M801 489.5h1M803 488.5h1M805 490.5h1M807 491.5h1M809 490.5h1M811 489.5h1M813 488.5h1M815 490.5h1M817 491.5h1M819 490.5h1M821 489.5h1M823 488.5h1M825 490.5h1M827 491.5h1M829 490.5h1M831 489.5h1M833 488.5h1M835 490.5h1M837 491.5h1M839 490.5h1M841 489.5h1M843 488.5h1M845 490.5h1M847 491.5h1M849 490.5h1M851 489.5h1M853 488.5h1M855 490.5h1M857 491.5h1M859 490.5h1" stroke="#4a3a70" stroke-width="1" fill="none" shape-rendering="crispEdges"/>
<rect x="293" y="500" width="153.5" height="14" fill="#bff208"/>
<rect x="454" y="500" width="391" height="14" fill="#bff208"/>
<rect x="863" y="500" width="75" height="14" fill="#bff208"/>
<rect x="293" y="519" width="139" height="7.5" fill="#8fc8ba"/>
<rect x="441" y="519" width="5.5" height="7.5" fill="#8fc8ba"/>
<rect x="454" y="519" width="111" height="7.5" fill="#8fc8ba"/>
<rect x="565" y="519" width="246" height="7.5" fill="#84b8b0"/>
<rect x="293" y="526.5" width="139" height="7" fill="#d6ab6a"/>
<rect x="441" y="526.5" width="5.5" height="7" fill="#d6ab6a"/>
<rect x="454" y="526.5" width="340.5" height="7" fill="#d6ab6a"/>
<rect x="310" y="519" width="1" height="7.5" fill="#81b4a7"/>
<rect x="310" y="526.5" width="1" height="7" fill="#c19a5f"/>
<rect x="327" y="519" width="1" height="7.5" fill="#81b4a7"/>
<rect x="327" y="526.5" width="1" height="7" fill="#c19a5f"/>
<rect x="344" y="519" width="1" height="7.5" fill="#81b4a7"/>
<rect x="344" y="526.5" width="1" height="7" fill="#c19a5f"/>
<rect x="361" y="519" width="1" height="7.5" fill="#81b4a7"/>
<rect x="361" y="526.5" width="1" height="7" fill="#c19a5f"/>
<rect x="378" y="519" width="1" height="7.5" fill="#81b4a7"/>
<rect x="378" y="526.5" width="1" height="7" fill="#c19a5f"/>
<rect x="395" y="519" width="1" height="7.5" fill="#81b4a7"/>
<rect x="395" y="526.5" width="1" height="7" fill="#c19a5f"/>
<rect x="412" y="519" width="1" height="7.5" fill="#81b4a7"/>
<rect x="412" y="526.5" width="1" height="7" fill="#c19a5f"/>
<rect x="429" y="519" width="1" height="7.5" fill="#81b4a7"/>
<rect x="429" y="526.5" width="1" height="7" fill="#c19a5f"/>
<rect x="463" y="519" width="1" height="7.5" fill="#81b4a7"/>
<rect x="463" y="526.5" width="1" height="7" fill="#c19a5f"/>
<rect x="480" y="519" width="1" height="7.5" fill="#81b4a7"/>
<rect x="480" y="526.5" width="1" height="7" fill="#c19a5f"/>
<rect x="497" y="519" width="1" height="7.5" fill="#81b4a7"/>
<rect x="497" y="526.5" width="1" height="7" fill="#c19a5f"/>
<rect x="514" y="519" width="1" height="7.5" fill="#81b4a7"/>
<rect x="514" y="526.5" width="1" height="7" fill="#c19a5f"/>
<rect x="530" y="519" width="1" height="7.5" fill="#81b4a7"/>
<rect x="530" y="526.5" width="1" height="7" fill="#c19a5f"/>
<rect x="547" y="519" width="1" height="7.5" fill="#81b4a7"/>
<rect x="547" y="526.5" width="1" height="7" fill="#c19a5f"/>
<rect x="564" y="519" width="1" height="7.5" fill="#81b4a7"/>
<rect x="564" y="526.5" width="1" height="7" fill="#c19a5f"/>
<rect x="581" y="519" width="1" height="7.5" fill="#81b4a7"/>
<rect x="581" y="526.5" width="1" height="7" fill="#c19a5f"/>
<rect x="598" y="519" width="1" height="7.5" fill="#81b4a7"/>
<rect x="598" y="526.5" width="1" height="7" fill="#c19a5f"/>
<rect x="615" y="519" width="1" height="7.5" fill="#81b4a7"/>
<rect x="615" y="526.5" width="1" height="7" fill="#c19a5f"/>
<rect x="632" y="519" width="1" height="7.5" fill="#81b4a7"/>
<rect x="632" y="526.5" width="1" height="7" fill="#c19a5f"/>
<rect x="649" y="519" width="1" height="7.5" fill="#81b4a7"/>
<rect x="649" y="526.5" width="1" height="7" fill="#c19a5f"/>
<rect x="666" y="519" width="1" height="7.5" fill="#81b4a7"/>
<rect x="666" y="526.5" width="1" height="7" fill="#c19a5f"/>
<rect x="683" y="519" width="1" height="7.5" fill="#81b4a7"/>
<rect x="683" y="526.5" width="1" height="7" fill="#c19a5f"/>
<rect x="700" y="519" width="1" height="7.5" fill="#81b4a7"/>
<rect x="700" y="526.5" width="1" height="7" fill="#c19a5f"/>
<rect x="717" y="519" width="1" height="7.5" fill="#81b4a7"/>
<rect x="717" y="526.5" width="1" height="7" fill="#c19a5f"/>
<rect x="734" y="519" width="1" height="7.5" fill="#81b4a7"/>
<rect x="734" y="526.5" width="1" height="7" fill="#c19a5f"/>
<rect x="751" y="519" width="1" height="7.5" fill="#81b4a7"/>
<rect x="751" y="526.5" width="1" height="7" fill="#c19a5f"/>
<rect x="768" y="519" width="1" height="7.5" fill="#81b4a7"/>
<rect x="768" y="526.5" width="1" height="7" fill="#c19a5f"/>
<rect x="785" y="519" width="1" height="7.5" fill="#81b4a7"/>
<rect x="785" y="526.5" width="1" height="7" fill="#c19a5f"/>
<rect x="802" y="519" width="1" height="7.5" fill="#81b4a7"/>
<rect x="590.5" y="536" width="204.5" height="35" fill="#b19ae6"/>
<rect x="590.5" y="552" width="204.5" height="1" fill="#9683c4"/>
<rect x="598" y="552" width="1" height="19" fill="#9683c4"/>
<rect x="615" y="552" width="1" height="19" fill="#9683c4"/>
<rect x="632" y="552" width="1" height="19" fill="#9683c4"/>
<rect x="649" y="552" width="1" height="19" fill="#9683c4"/>
<rect x="666" y="552" width="1" height="19" fill="#9683c4"/>
<rect x="683" y="552" width="1" height="19" fill="#9683c4"/>
<rect x="700" y="552" width="1" height="19" fill="#9683c4"/>
<rect x="717" y="552" width="1" height="19" fill="#9683c4"/>
<rect x="734" y="552" width="1" height="19" fill="#9683c4"/>
<rect x="751" y="552" width="1" height="19" fill="#9683c4"/>
<rect x="768" y="552" width="1" height="19" fill="#9683c4"/>
<rect x="785" y="552" width="1" height="19" fill="#9683c4"/>
<rect x="590.5" y="536" width="1" height="35" fill="#9683c4"/>
<path d="M592 568.5h1M594 568.5h1M596 568.5h1M598 568.5h1M600 568.5h1M602 568.5h1M604 568.5h1M606 568.5h1M608 568.5h1M610 568.5h1M612 568.5h1M614 568.5h1M616 568.5h1M618 568.5h1M620 568.5h1M622 568.5h1M624 568.5h1M626 568.5h1M628 568.5h1M630 568.5h1M632 568.5h1M634 568.5h1M636 568.5h1M638 568.5h1M640 568.5h1M642 568.5h1M644 568.5h1M646 568.5h1M648 568.5h1M650 568.5h1M652 568.5h1M654 568.5h1M656 568.5h1" stroke="#1a1030" stroke-width="1.400" fill="none" shape-rendering="crispEdges"/>
<path d="M593 560.5h1M595 557.5h1M598 563.5h1M602 560.5h1M604 557.5h1M607 563.5h1M610 560.5h1M612 557.5h1M615 563.5h1M618 560.5h1M620 557.5h1M623 563.5h1M627 560.5h1M629 557.5h1M632 563.5h1M636 560.5h1M638 557.5h1M641 563.5h1M644 560.5h1M646 557.5h1M649 563.5h1M652 560.5h1M654 557.5h1M657 563.5h1" stroke="#1a1030" stroke-width="1" fill="none" shape-rendering="crispEdges"/>
<rect x="795" y="536" width="67.5" height="35" fill="#b19ae6"/>
<rect x="795" y="552" width="67.5" height="1" fill="#9683c4"/>
<rect x="802" y="552" width="1" height="19" fill="#9683c4"/>
<rect x="819" y="552" width="1" height="19" fill="#9683c4"/>
<rect x="836" y="552" width="1" height="19" fill="#9683c4"/>
<rect x="853" y="552" width="1" height="19" fill="#9683c4"/>
<rect x="795" y="536" width="1" height="35" fill="#9683c4"/>
<path d="M797 568.5h1M799 568.5h1M801 568.5h1M803 568.5h1M805 568.5h1M807 568.5h1M809 568.5h1M811 568.5h1M813 568.5h1M815 568.5h1M817 568.5h1M819 568.5h1M821 568.5h1M823 568.5h1M825 568.5h1M827 568.5h1M829 568.5h1M831 568.5h1M833 568.5h1M835 568.5h1M837 568.5h1M839 568.5h1M841 568.5h1M843 568.5h1M845 568.5h1M847 568.5h1M849 568.5h1M851 568.5h1M853 568.5h1M855 568.5h1M857 568.5h1M859 568.5h1" stroke="#1a1030" stroke-width="1.400" fill="none" shape-rendering="crispEdges"/>
<path d="M798 560.5h1M800 557.5h1M803 563.5h1M806 560.5h1M808 557.5h1M811 563.5h1M815 560.5h1M817 557.5h1M820 563.5h1M824 560.5h1M826 557.5h1M829 563.5h1M832 560.5h1M834 557.5h1M837 563.5h1M840 560.5h1M842 557.5h1M845 563.5h1M849 560.5h1M851 557.5h1M854 563.5h1M858 560.5h1M860 557.5h1M863 563.5h1" stroke="#1a1030" stroke-width="1" fill="none" shape-rendering="crispEdges"/>
<rect x="862.5" y="536" width="28.5" height="35" fill="#b19ae6"/>
<rect x="862.5" y="552" width="28.5" height="1" fill="#9683c4"/>
<rect x="870" y="552" width="1" height="19" fill="#9683c4"/>
<rect x="887" y="552" width="1" height="19" fill="#9683c4"/>
<rect x="862.5" y="536" width="1" height="35" fill="#9683c4"/>
<path d="M864 568.5h1M866 568.5h1M868 568.5h1M870 568.5h1M872 568.5h1M874 568.5h1M876 568.5h1M878 568.5h1M880 568.5h1M882 568.5h1M884 568.5h1M886 568.5h1M888 568.5h1" stroke="#1a1030" stroke-width="1.400" fill="none" shape-rendering="crispEdges"/>
<path d="M865 560.5h1M867 557.5h1M870 563.5h1M874 560.5h1M876 557.5h1M879 563.5h1M882 560.5h1M884 557.5h1M887 563.5h1" stroke="#1a1030" stroke-width="1" fill="none" shape-rendering="crispEdges"/>
<rect x="897" y="536" width="7" height="35" fill="#b19ae6"/>
<rect x="897" y="552" width="7" height="1" fill="#9683c4"/>
<rect x="897" y="536" width="1" height="35" fill="#9683c4"/>
<path d="M899 568.5h1M901 568.5h1" stroke="#1a1030" stroke-width="1.400" fill="none" shape-rendering="crispEdges"/>
<path d="" stroke="#1a1030" stroke-width="1" fill="none" shape-rendering="crispEdges"/>
<rect x="904" y="536" width="9" height="35" fill="#b19ae6"/>
<rect x="904" y="552" width="9" height="1" fill="#9683c4"/>
<rect x="904" y="536" width="1" height="35" fill="#9683c4"/>
<path d="M906 568.5h1M908 568.5h1M910 568.5h1" stroke="#1a1030" stroke-width="1.400" fill="none" shape-rendering="crispEdges"/>
<path d="M907 560.5h1M909 557.5h1M912 563.5h1" stroke="#1a1030" stroke-width="1" fill="none" shape-rendering="crispEdges"/>
<rect x="913" y="536" width="17" height="35" fill="#b19ae6"/>
<rect x="913" y="552" width="17" height="1" fill="#9683c4"/>
<rect x="921" y="552" width="1" height="19" fill="#9683c4"/>
<rect x="913" y="536" width="1" height="35" fill="#9683c4"/>
<path d="M915 568.5h1M917 568.5h1M919 568.5h1M921 568.5h1M923 568.5h1M925 568.5h1M927 568.5h1" stroke="#1a1030" stroke-width="1.400" fill="none" shape-rendering="crispEdges"/>
<path d="M916 560.5h1M918 557.5h1M921 563.5h1M924 560.5h1M926 557.5h1M929 563.5h1" stroke="#1a1030" stroke-width="1" fill="none" shape-rendering="crispEdges"/>
<rect x="165.5" y="573" width="67.5" height="13" fill="#55a12f"/>
<rect x="165.5" y="573" width="1" height="13" fill="#35641d"/>
<rect x="165.5" y="573" width="67.5" height="1" fill="#35641d"/>
<clipPath id="c2279"><rect x="165.5" y="573" width="66.5" height="13"/></clipPath>
<text x="168" y="585" font-size="10" fill="#143008" font-weight="normal" text-anchor="start" clip-path="url(#c2279)" letter-spacing="0.12" stroke="#143008" stroke-width="0.2">3 4-Sylenth1</text>
<rect x="29" y="99" width="1" height="545" fill="#2b2b2b"/>
<path d="M29.5 101.500l8.500 4.500l-8.500 4.500z" fill="#9c9c9c" stroke="#2a2a2a" stroke-width="0.800"/>
<text x="41" y="110" font-size="10.2" fill="#0a0a0a" font-weight="normal" text-anchor="start" letter-spacing="0.35">Intro</text>
<rect x="97" y="99" width="1" height="545" fill="#2b2b2b"/>
<path d="M97.5 101.500l8.500 4.500l-8.500 4.500z" fill="#9c9c9c" stroke="#2a2a2a" stroke-width="0.800"/>
<text x="109" y="110" font-size="10.2" fill="#0a0a0a" font-weight="normal" text-anchor="start" letter-spacing="0.35">Verse</text>
<rect x="301" y="99" width="1" height="545" fill="#2b2b2b"/>
<path d="M301.5 101.500l8.500 4.500l-8.500 4.500z" fill="#9c9c9c" stroke="#2a2a2a" stroke-width="0.800"/>
<text x="313" y="110" font-size="10.2" fill="#0a0a0a" font-weight="normal" text-anchor="start" letter-spacing="0.35">Chorus</text>
<rect x="446" y="99" width="1" height="545" fill="#2b2b2b"/>
<path d="M446.5 101.500l8.500 4.500l-8.500 4.500z" fill="#9c9c9c" stroke="#2a2a2a" stroke-width="0.800"/>
<text x="458" y="110" font-size="10.2" fill="#0a0a0a" font-weight="normal" text-anchor="start" letter-spacing="0.35">Verse 2</text>
<rect x="658" y="99" width="1" height="545" fill="#2b2b2b"/>
<path d="M658.5 101.500l8.500 4.500l-8.500 4.500z" fill="#9c9c9c" stroke="#2a2a2a" stroke-width="0.800"/>
<text x="670" y="110" font-size="10.2" fill="#0a0a0a" font-weight="normal" text-anchor="start" letter-spacing="0.35">Chorus 2</text>
<rect x="794" y="99" width="1" height="545" fill="#2b2b2b"/>
<path d="M794.5 101.500l8.500 4.500l-8.500 4.500z" fill="#9c9c9c" stroke="#2a2a2a" stroke-width="0.800"/>
<text x="806" y="110" font-size="10.2" fill="#0a0a0a" font-weight="normal" text-anchor="start" letter-spacing="0.35">Lost</text>
<rect x="862" y="99" width="1" height="545" fill="#2b2b2b"/>
<path d="M862.5 101.500l8.500 4.500l-8.500 4.500z" fill="#9c9c9c" stroke="#2a2a2a" stroke-width="0.800"/>
<text x="874" y="110" font-size="10.2" fill="#0a0a0a" font-weight="normal" text-anchor="start" letter-spacing="0.35">End</text>
<rect x="29" y="89" width="1" height="20" fill="#2b2b2b"/>
<rect x="972" y="89" width="1" height="555" fill="#2b2b2b"/>
<path d="M29.500 89.500l8.500 4.200l-8.500 4.200" fill="none" stroke="#2a2a2a" stroke-width="0.800"/>
<path d="M972 89.500l-8.500 4.200l8.500 4.200z" fill="#b2b2b2" stroke="#2a2a2a" stroke-width="0.800"/>
<rect x="1006" y="276" width="1" height="35" fill="#8ad9f8"/>
<path d="M1002.500 115h7.500l-3.750 4.500z" fill="#5fd0f8"/>
<path d="M1002.500 649.5h7.500l-3.750-5z" fill="#5fd0f8"/>
<path d="M21.5 644v7.300h1.800" stroke="#0a0a0a" stroke-width="0.900" fill="none"/>
<text x="24.3" y="654.9" font-size="9.7" fill="#0a0a0a" font-weight="normal" text-anchor="start" letter-spacing="0.55">0:00</text>
<rect x="44" y="644" width="1" height="2" fill="#0a0a0a"/>
<rect x="67" y="644" width="1" height="2" fill="#0a0a0a"/>
<rect x="90" y="644" width="1" height="2" fill="#0a0a0a"/>
<path d="M113.5 644v7.300h1.800" stroke="#0a0a0a" stroke-width="0.900" fill="none"/>
<text x="116.3" y="654.9" font-size="9.7" fill="#0a0a0a" font-weight="normal" text-anchor="start" letter-spacing="0.55">0:20</text>
<rect x="136" y="644" width="1" height="2" fill="#0a0a0a"/>
<rect x="159" y="644" width="1" height="2" fill="#0a0a0a"/>
<rect x="182" y="644" width="1" height="2" fill="#0a0a0a"/>
<path d="M205.5 644v7.300h1.800" stroke="#0a0a0a" stroke-width="0.900" fill="none"/>
<text x="208.3" y="654.9" font-size="9.7" fill="#0a0a0a" font-weight="normal" text-anchor="start" letter-spacing="0.55">0:40</text>
<rect x="228" y="644" width="1" height="2" fill="#0a0a0a"/>
<rect x="251" y="644" width="1" height="2" fill="#0a0a0a"/>
<rect x="274" y="644" width="1" height="2" fill="#0a0a0a"/>
<path d="M297.5 644v7.300h1.800" stroke="#0a0a0a" stroke-width="0.900" fill="none"/>
<text x="300.3" y="654.9" font-size="9.7" fill="#0a0a0a" font-weight="normal" text-anchor="start" letter-spacing="0.55">1:00</text>
<rect x="320" y="644" width="1" height="2" fill="#0a0a0a"/>
<rect x="343" y="644" width="1" height="2" fill="#0a0a0a"/>
<rect x="366" y="644" width="1" height="2" fill="#0a0a0a"/>
<path d="M389.5 644v7.300h1.800" stroke="#0a0a0a" stroke-width="0.900" fill="none"/>
<text x="392.3" y="654.9" font-size="9.7" fill="#0a0a0a" font-weight="normal" text-anchor="start" letter-spacing="0.55">1:20</text>
<rect x="412" y="644" width="1" height="2" fill="#0a0a0a"/>
<rect x="435" y="644" width="1" height="2" fill="#0a0a0a"/>
<rect x="458" y="644" width="1" height="2" fill="#0a0a0a"/>
<path d="M481.5 644v7.300h1.800" stroke="#0a0a0a" stroke-width="0.900" fill="none"/>
<text x="484.3" y="654.9" font-size="9.7" fill="#0a0a0a" font-weight="normal" text-anchor="start" letter-spacing="0.55">1:40</text>
<rect x="504" y="644" width="1" height="2" fill="#0a0a0a"/>
<rect x="527" y="644" width="1" height="2" fill="#0a0a0a"/>
<rect x="550" y="644" width="1" height="2" fill="#0a0a0a"/>
<path d="M573.5 644v7.300h1.800" stroke="#0a0a0a" stroke-width="0.900" fill="none"/>
<text x="576.3" y="654.9" font-size="9.7" fill="#0a0a0a" font-weight="normal" text-anchor="start" letter-spacing="0.55">2:00</text>
<rect x="596" y="644" width="1" height="2" fill="#0a0a0a"/>
<rect x="619" y="644" width="1" height="2" fill="#0a0a0a"/>
<rect x="642" y="644" width="1" height="2" fill="#0a0a0a"/>
<path d="M665.5 644v7.300h1.800" stroke="#0a0a0a" stroke-width="0.900" fill="none"/>
<text x="668.3" y="654.9" font-size="9.7" fill="#0a0a0a" font-weight="normal" text-anchor="start" letter-spacing="0.55">2:20</text>
<rect x="688" y="644" width="1" height="2" fill="#0a0a0a"/>
<rect x="711" y="644" width="1" height="2" fill="#0a0a0a"/>
<rect x="734" y="644" width="1" height="2" fill="#0a0a0a"/>
<path d="M757.5 644v7.300h1.800" stroke="#0a0a0a" stroke-width="0.900" fill="none"/>
<text x="760.3" y="654.9" font-size="9.7" fill="#0a0a0a" font-weight="normal" text-anchor="start" letter-spacing="0.55">2:40</text>
<rect x="780" y="644" width="1" height="2" fill="#0a0a0a"/>
<rect x="803" y="644" width="1" height="2" fill="#0a0a0a"/>
<rect x="826" y="644" width="1" height="2" fill="#0a0a0a"/>
<path d="M849.5 644v7.300h1.800" stroke="#0a0a0a" stroke-width="0.900" fill="none"/>
<text x="852.3" y="654.9" font-size="9.7" fill="#0a0a0a" font-weight="normal" text-anchor="start" letter-spacing="0.55">3:00</text>
<rect x="872" y="644" width="1" height="2" fill="#0a0a0a"/>
<rect x="895" y="644" width="1" height="2" fill="#0a0a0a"/>
<rect x="918" y="644" width="1" height="2" fill="#0a0a0a"/>
<path d="M941.5 644v7.300h1.800" stroke="#0a0a0a" stroke-width="0.900" fill="none"/>
<text x="944.3" y="654.9" font-size="9.7" fill="#0a0a0a" font-weight="normal" text-anchor="start" letter-spacing="0.55">3:20</text>
<rect x="964" y="644" width="1" height="2" fill="#0a0a0a"/>
<rect x="987" y="644" width="1" height="2" fill="#0a0a0a"/>
<rect x="1010" y="644" width="1" height="2" fill="#0a0a0a"/>
<text x="992.5" y="640.6" font-size="16" fill="#6a6a6a" font-weight="bold" text-anchor="start" textLength="27.500" lengthAdjust="spacingAndGlyphs">1/1</text>
<rect x="1029" y="87" width="27.500" height="10.500" rx="5.250" fill="#a9a9a9"/>
<text x="1042.7" y="95.6" font-size="9.6" fill="#111" font-weight="bold" text-anchor="middle" letter-spacing="0.3">Set</text>
<circle cx="1034.500" cy="107.500" r="5.500" fill="#a9a9a9"/><path d="M1031 107.500l4-3.500v2.300h3.500v2.400h-3.500v2.300z" fill="#0a0a0a"/>
<circle cx="1051.300" cy="107.500" r="5.500" fill="#9a9a9a"/><path d="M1054.800 107.500l-4-3.500v2.300h-3.500v2.400h3.500v2.300z" fill="#b8b8b8"/>
<rect x="1069.5" y="102" width="21" height="11" fill="#a9a9a9"/>
<path d="M1077.500 110l5-5" stroke="#0a0a0a" stroke-width="1.100"/><circle cx="1077.500" cy="110" r="1.600" fill="#0a0a0a"/><circle cx="1082.500" cy="105" r="1.600" fill="#0a0a0a"/>
<rect x="1096.5" y="102" width="21" height="11" fill="#a9a9a9"/>
<rect x="1103.500" y="106.500" width="7" height="4.500" fill="#0a0a0a"/><path d="M1105 106.500v-1.200a2 2 0 0 1 4 0v1.200" stroke="#0a0a0a" stroke-width="1.100" fill="none"/>
<rect x="1026" y="118.5" width="291" height="526" fill="#515151"/>
<rect x="1026" y="118.5" width="4.5" height="7.5" fill="#f57200"/>
<rect x="1031" y="118.5" width="93" height="7.5" fill="#f57200"/>
<rect x="1126" y="118.5" width="74.5" height="7.5" fill="#717171"/>
<rect x="1202" y="118.5" width="115" height="7.5" fill="#717171"/>
<rect x="1128.5" y="118.5" width="69.5" height="5.5" fill="#4f4f4f"/>
<rect x="1129.5" y="118.5" width="67.5" height="4.5" fill="#8a8a8a"/>
<rect x="1205" y="118.5" width="46" height="4.5" fill="#4a4a4a"/>
<rect x="1206" y="118.5" width="44" height="3.5" fill="#c2c2c2"/>
<rect x="1206" y="118.5" width="29" height="3.5" fill="#6cd3f9"/>
<rect x="1255" y="118.5" width="46" height="4.5" fill="#4a4a4a"/>
<rect x="1256" y="118.5" width="44" height="3.5" fill="#c2c2c2"/>
<rect x="1307" y="118.5" width="3" height="7.5" fill="#2a2a2a"/>
<rect x="1311" y="118.5" width="3" height="7.5" fill="#2a2a2a"/>
<rect x="1026" y="126" width="4.5" height="37" fill="#f57200"/>
<rect x="1031" y="128" width="93" height="35" fill="#cdf5f0"/>
<rect x="1126" y="128" width="74.5" height="35" fill="#717171"/>
<rect x="1202" y="128" width="115" height="35" fill="#717171"/>
<circle cx="1040.3" cy="136.5" r="5.800" fill="none" stroke="#3a3a2a" stroke-width="0.800"/><path d="M1037.1 135.0h6.400l-3.200 4.300z" fill="#3a3a2a"/>
<text x="1053" y="139.4" font-size="9.6" fill="#3a3a2a" font-weight="bold" text-anchor="start" letter-spacing="0.35">4 DS ---Dru</text>
<rect x="1128" y="131" width="70" height="13" fill="#474747"/>
<rect x="1129" y="132" width="68" height="11" fill="#c6c6c6"/>
<text x="1130.6" y="141.6" font-size="10.5" fill="#0a0a0a" font-weight="normal" text-anchor="start" letter-spacing="0.4">Drums</text>
<path d="M1189 135h6.500l-3.250 5z" fill="#0a0a0a"/>
<rect x="1128" y="148" width="70" height="13" fill="#4f4f4f"/>
<rect x="1129" y="149" width="68" height="11" fill="#878787"/>
<rect x="1205" y="130.5" width="46" height="12.5" fill="#4a4a4a"/>
<rect x="1206" y="131.5" width="44" height="10.5" fill="#ffb532"/>
<text x="1228" y="140.45" font-size="10.5" fill="#0a0a0a" font-weight="bold" text-anchor="middle" letter-spacing="0.2">4</text>
<rect x="1255" y="130.5" width="21" height="12.5" fill="#4a4a4a"/>
<rect x="1256" y="131.5" width="19" height="10.5" fill="#b2b2b2"/>
<text x="1265.5" y="140.45" font-size="10.5" fill="#0a0a0a" font-weight="normal" text-anchor="middle" letter-spacing="0.2">S</text>
<rect x="1280" y="130.5" width="21" height="12.5" fill="#4a4a4a"/>
<rect x="1281" y="131.5" width="19" height="10.5" fill="#b2b2b2"/>
<circle cx="1290.5" cy="136.75" r="3" fill="#0a0a0a"/><path d="M1290.5 136.75v-2.500M1290.5 136.75h-2" stroke="#b2b2b2" stroke-width="0.900"/>
<rect x="1205" y="148" width="46" height="12.5" fill="#4a4a4a"/>
<rect x="1206" y="149" width="44" height="10.5" fill="#c2c2c2"/>
<rect x="1206" y="149" width="38.72" height="10.5" fill="#6cd3f9"/>
<text x="1228" y="157.95" font-size="10.5" fill="#0a0a0a" font-weight="normal" text-anchor="middle" letter-spacing="0.2">1.6</text>
<rect x="1255" y="148" width="46" height="12.5" fill="#4a4a4a"/>
<rect x="1256" y="149" width="44" height="10.5" fill="#c2c2c2"/>
<text x="1278" y="157.95" font-size="10.5" fill="#0a0a0a" font-weight="normal" text-anchor="middle" letter-spacing="0.2">C</text>
<rect x="1307.2" y="131" width="2.7" height="32" fill="#2a2a2a"/>
<rect x="1311" y="131" width="2.7" height="32" fill="#2a2a2a"/>
<rect x="1307.2" y="128.5" width="2.7" height="1.5" fill="#2a2a2a"/>
<rect x="1311" y="128.5" width="2.7" height="1.5" fill="#2a2a2a"/>
<rect x="1026" y="163" width="4.5" height="37" fill="#f57200"/>
<rect x="1031" y="165" width="93" height="35" fill="#f83636"/>
<rect x="1126" y="165" width="74.5" height="35" fill="#717171"/>
<rect x="1202" y="165" width="115" height="35" fill="#717171"/>
<circle cx="1040.3" cy="173.5" r="5.800" fill="none" stroke="#4a0c0c" stroke-width="0.800"/><path d="M1037.1 172.0h6.400l-3.200 4.300z" fill="#4a0c0c"/>
<text x="1053" y="176.4" font-size="9.6" fill="#4a0c0c" font-weight="bold" text-anchor="start" letter-spacing="0.35">5 BRT_Full_</text>
<rect x="1128" y="168" width="70" height="13" fill="#474747"/>
<rect x="1129" y="169" width="68" height="11" fill="#c6c6c6"/>
<text x="1130.6" y="178.6" font-size="10.5" fill="#0a0a0a" font-weight="normal" text-anchor="start" letter-spacing="0.4">Drums</text>
<path d="M1189 172h6.500l-3.250 5z" fill="#0a0a0a"/>
<rect x="1128" y="185" width="70" height="13" fill="#4f4f4f"/>
<rect x="1129" y="186" width="68" height="11" fill="#878787"/>
<rect x="1205" y="167.5" width="46" height="12.5" fill="#4a4a4a"/>
<rect x="1206" y="168.5" width="44" height="10.5" fill="#ffb532"/>
<text x="1228" y="177.45" font-size="10.5" fill="#0a0a0a" font-weight="bold" text-anchor="middle" letter-spacing="0.2">5</text>
<rect x="1255" y="167.5" width="21" height="12.5" fill="#4a4a4a"/>
<rect x="1256" y="168.5" width="19" height="10.5" fill="#b2b2b2"/>
<text x="1265.5" y="177.45" font-size="10.5" fill="#0a0a0a" font-weight="normal" text-anchor="middle" letter-spacing="0.2">S</text>
<rect x="1280" y="167.5" width="21" height="12.5" fill="#4a4a4a"/>
<rect x="1281" y="168.5" width="19" height="10.5" fill="#b2b2b2"/>
<circle cx="1290.5" cy="173.75" r="2.800" fill="#606060"/>
<rect x="1205" y="185" width="46" height="12.5" fill="#4a4a4a"/>
<rect x="1206" y="186" width="44" height="10.5" fill="#c2c2c2"/>
<rect x="1206" y="186" width="25.08" height="10.5" fill="#6cd3f9"/>
<text x="1228" y="194.95" font-size="10.5" fill="#0a0a0a" font-weight="normal" text-anchor="middle" letter-spacing="0.2">-11.0</text>
<rect x="1255" y="185" width="46" height="12.5" fill="#4a4a4a"/>
<rect x="1256" y="186" width="44" height="10.5" fill="#c2c2c2"/>
<text x="1278" y="194.95" font-size="10.5" fill="#0a0a0a" font-weight="normal" text-anchor="middle" letter-spacing="0.2">C</text>
<rect x="1307.2" y="168" width="2.7" height="32" fill="#2a2a2a"/>
<rect x="1311" y="168" width="2.7" height="32" fill="#2a2a2a"/>
<rect x="1307.2" y="165.5" width="2.7" height="1.5" fill="#2a2a2a"/>
<rect x="1311" y="165.5" width="2.7" height="1.5" fill="#2a2a2a"/>
<rect x="1026" y="200" width="4.5" height="37" fill="#f57200"/>
<rect x="1031" y="202" width="93" height="35" fill="#f83636"/>
<rect x="1126" y="202" width="74.5" height="35" fill="#717171"/>
<rect x="1202" y="202" width="115" height="35" fill="#717171"/>
<circle cx="1040.3" cy="210.5" r="5.800" fill="none" stroke="#4a0c0c" stroke-width="0.800"/><path d="M1037.1 209.0h6.400l-3.200 4.300z" fill="#4a0c0c"/>
<text x="1053" y="213.4" font-size="9.6" fill="#4a0c0c" font-weight="bold" text-anchor="start" letter-spacing="0.35">6 BRT_Full_</text>
<rect x="1128" y="205" width="70" height="13" fill="#474747"/>
<rect x="1129" y="206" width="68" height="11" fill="#c6c6c6"/>
<text x="1130.6" y="215.6" font-size="10.5" fill="#0a0a0a" font-weight="normal" text-anchor="start" letter-spacing="0.4">Drums</text>
<path d="M1189 209h6.500l-3.250 5z" fill="#0a0a0a"/>
<rect x="1128" y="222" width="70" height="13" fill="#4f4f4f"/>
<rect x="1129" y="223" width="68" height="11" fill="#878787"/>
<rect x="1205" y="204.5" width="46" height="12.5" fill="#4a4a4a"/>
<rect x="1206" y="205.5" width="44" height="10.5" fill="#a9a9a9"/>
<text x="1228" y="214.45" font-size="10.5" fill="#0a0a0a" font-weight="bold" text-anchor="middle" letter-spacing="0.2">6</text>
<rect x="1255" y="204.5" width="21" height="12.5" fill="#4a4a4a"/>
<rect x="1256" y="205.5" width="19" height="10.5" fill="#b2b2b2"/>
<text x="1265.5" y="214.45" font-size="10.5" fill="#0a0a0a" font-weight="normal" text-anchor="middle" letter-spacing="0.2">S</text>
<rect x="1280" y="204.5" width="21" height="12.5" fill="#4a4a4a"/>
<rect x="1281" y="205.5" width="19" height="10.5" fill="#b2b2b2"/>
<circle cx="1290.5" cy="210.75" r="2.800" fill="#606060"/>
<rect x="1205" y="222" width="46" height="12.5" fill="#4a4a4a"/>
<rect x="1206" y="223" width="44" height="10.5" fill="#c2c2c2"/>
<rect x="1206" y="223" width="36.52" height="10.5" fill="#6cd3f9"/>
<text x="1228" y="231.95" font-size="10.5" fill="#0a0a0a" font-weight="normal" text-anchor="middle" letter-spacing="0.2">0</text>
<rect x="1255" y="222" width="46" height="12.5" fill="#4a4a4a"/>
<rect x="1256" y="223" width="44" height="10.5" fill="#c2c2c2"/>
<text x="1278" y="231.95" font-size="10.5" fill="#0a0a0a" font-weight="normal" text-anchor="middle" letter-spacing="0.2">C</text>
<rect x="1307.2" y="205" width="2.7" height="32" fill="#2a2a2a"/>
<rect x="1311" y="205" width="2.7" height="32" fill="#2a2a2a"/>
<rect x="1307.2" y="202.5" width="2.7" height="1.5" fill="#2a2a2a"/>
<rect x="1311" y="202.5" width="2.7" height="1.5" fill="#2a2a2a"/>
<rect x="1026" y="239" width="98" height="35" fill="#735040"/>
<rect x="1126" y="239" width="74.5" height="35" fill="#717171"/>
<rect x="1202" y="239" width="115" height="35" fill="#717171"/>
<circle cx="1035.5" cy="247.5" r="5.800" fill="none" stroke="#e6d8d0" stroke-width="0.800"/><path d="M1032.3 246.0h6.400l-3.200 4.300z" fill="#e6d8d0"/>
<text x="1049" y="250.4" font-size="9.6" fill="#e6d8d0" font-weight="bold" text-anchor="start" letter-spacing="0.35">Bass</text>
<rect x="1128" y="242" width="70" height="13" fill="#474747"/>
<rect x="1129" y="243" width="68" height="11" fill="#c6c6c6"/>
<text x="1130.6" y="252.6" font-size="10.5" fill="#0a0a0a" font-weight="normal" text-anchor="start" letter-spacing="0.4">Master</text>
<path d="M1189 246h6.500l-3.250 5z" fill="#0a0a0a"/>
<rect x="1128" y="259" width="70" height="13" fill="#4f4f4f"/>
<rect x="1129" y="260" width="68" height="11" fill="#878787"/>
<rect x="1205" y="241.5" width="46" height="12.5" fill="#4a4a4a"/>
<rect x="1206" y="242.5" width="44" height="10.5" fill="#ffb532"/>
<text x="1228" y="251.45" font-size="10.5" fill="#0a0a0a" font-weight="bold" text-anchor="middle" letter-spacing="0.2">7</text>
<rect x="1255" y="241.5" width="21" height="12.5" fill="#4a4a4a"/>
<rect x="1256" y="242.5" width="19" height="10.5" fill="#b2b2b2"/>
<text x="1265.5" y="251.45" font-size="10.5" fill="#0a0a0a" font-weight="normal" text-anchor="middle" letter-spacing="0.2">S</text>
<rect x="1280" y="241.5" width="21" height="12.5" fill="#4a4a4a"/>
<rect x="1281" y="242.5" width="19" height="10.5" fill="#b2b2b2"/>
<circle cx="1290.5" cy="247.75" r="3" fill="#0a0a0a"/><path d="M1290.5 247.75v-2.500M1290.5 247.75h-2" stroke="#b2b2b2" stroke-width="0.900"/>
<rect x="1205" y="259" width="46" height="12.5" fill="#4a4a4a"/>
<rect x="1206" y="260" width="44" height="10.5" fill="#c2c2c2"/>
<rect x="1206" y="260" width="35.64" height="10.5" fill="#6cd3f9"/>
<text x="1228" y="268.95" font-size="10.5" fill="#0a0a0a" font-weight="normal" text-anchor="middle" letter-spacing="0.2">-1.3</text>
<rect x="1255" y="259" width="46" height="12.5" fill="#4a4a4a"/>
<rect x="1256" y="260" width="44" height="10.5" fill="#c2c2c2"/>
<text x="1278" y="268.95" font-size="10.5" fill="#0a0a0a" font-weight="normal" text-anchor="middle" letter-spacing="0.2">C</text>
<rect x="1307.2" y="242" width="2.7" height="32" fill="#2a2a2a"/>
<rect x="1311" y="242" width="2.7" height="32" fill="#2a2a2a"/>
<rect x="1307.2" y="239.5" width="2.7" height="1.5" fill="#2a2a2a"/>
<rect x="1311" y="239.5" width="2.7" height="1.5" fill="#2a2a2a"/>
<rect x="1026" y="276" width="98" height="35" fill="#cdf5f0"/>
<rect x="1126" y="276" width="74.5" height="35" fill="#a3a3a3"/>
<rect x="1202" y="276" width="115" height="35" fill="#a3a3a3"/>
<circle cx="1035.5" cy="284.5" r="5.800" fill="none" stroke="#3a3a2a" stroke-width="0.800"/><path d="M1032.3 283.0h6.400l-3.200 4.300z" fill="#3a3a2a"/>
<text x="1049" y="287.4" font-size="9.6" fill="#3a3a2a" font-weight="bold" text-anchor="start" letter-spacing="0.35">Piano</text>
<rect x="1128" y="279" width="70" height="13" fill="#474747"/>
<rect x="1129" y="280" width="68" height="11" fill="#c6c6c6"/>
<text x="1130.6" y="289.6" font-size="10.5" fill="#0a0a0a" font-weight="normal" text-anchor="start" letter-spacing="0.4">Master</text>
<path d="M1189 283h6.500l-3.250 5z" fill="#0a0a0a"/>
<rect x="1128" y="296" width="70" height="13" fill="#4f4f4f"/>
<rect x="1129" y="297" width="68" height="11" fill="#a6a6a6"/>
<rect x="1205" y="278.5" width="46" height="12.5" fill="#4a4a4a"/>
<rect x="1206" y="279.5" width="44" height="10.5" fill="#ffb532"/>
<text x="1228" y="288.45" font-size="10.5" fill="#0a0a0a" font-weight="bold" text-anchor="middle" letter-spacing="0.2">8</text>
<rect x="1255" y="278.5" width="21" height="12.5" fill="#4a4a4a"/>
<rect x="1256" y="279.5" width="19" height="10.5" fill="#b2b2b2"/>
<text x="1265.5" y="288.45" font-size="10.5" fill="#0a0a0a" font-weight="normal" text-anchor="middle" letter-spacing="0.2">S</text>
<rect x="1280" y="278.5" width="21" height="12.5" fill="#4a4a4a"/>
<rect x="1281" y="279.5" width="19" height="10.5" fill="#b2b2b2"/>
<circle cx="1290.5" cy="284.75" r="3" fill="#0a0a0a"/><path d="M1290.5 284.75v-2.500M1290.5 284.75h-2" stroke="#b2b2b2" stroke-width="0.900"/>
<rect x="1205" y="296" width="46" height="12.5" fill="#4a4a4a"/>
<rect x="1206" y="297" width="44" height="10.5" fill="#c2c2c2"/>
<rect x="1206" y="297" width="37.4" height="10.5" fill="#6cd3f9"/>
<text x="1228" y="305.95" font-size="10.5" fill="#0a0a0a" font-weight="normal" text-anchor="middle" letter-spacing="0.2">0.2</text>
<rect x="1255" y="296" width="46" height="12.5" fill="#4a4a4a"/>
<rect x="1256" y="297" width="44" height="10.5" fill="#c2c2c2"/>
<text x="1278" y="305.95" font-size="10.5" fill="#0a0a0a" font-weight="normal" text-anchor="middle" letter-spacing="0.2">C</text>
<rect x="1307.2" y="279" width="2.7" height="32" fill="#2a2a2a"/>
<rect x="1311" y="279" width="2.7" height="32" fill="#2a2a2a"/>
<rect x="1307.2" y="276.5" width="2.7" height="1.5" fill="#2a2a2a"/>
<rect x="1311" y="276.5" width="2.7" height="1.5" fill="#2a2a2a"/>
<rect x="1026" y="313" width="98" height="35" fill="#2f51a6"/>
<rect x="1126" y="313" width="74.5" height="35" fill="#717171"/>
<rect x="1202" y="313" width="115" height="35" fill="#717171"/>
<circle cx="1035.5" cy="321.5" r="5.800" fill="none" stroke="#dfe6f5" stroke-width="0.800"/><path d="M1032.3 320.0h6.400l-3.200 4.300z" fill="#dfe6f5"/>
<text x="1049" y="324.4" font-size="9.6" fill="#dfe6f5" font-weight="bold" text-anchor="start" letter-spacing="0.35">Pad</text>
<rect x="1128" y="316" width="70" height="13" fill="#474747"/>
<rect x="1129" y="317" width="68" height="11" fill="#c6c6c6"/>
<text x="1130.6" y="326.6" font-size="10.5" fill="#0a0a0a" font-weight="normal" text-anchor="start" letter-spacing="0.4">Master</text>
<path d="M1189 320h6.500l-3.250 5z" fill="#0a0a0a"/>
<rect x="1128" y="333" width="70" height="13" fill="#4f4f4f"/>
<rect x="1129" y="334" width="68" height="11" fill="#878787"/>
<rect x="1205" y="315.5" width="46" height="12.5" fill="#4a4a4a"/>
<rect x="1206" y="316.5" width="44" height="10.5" fill="#ffb532"/>
<text x="1228" y="325.45" font-size="10.5" fill="#0a0a0a" font-weight="bold" text-anchor="middle" letter-spacing="0.2">9</text>
<rect x="1255" y="315.5" width="21" height="12.5" fill="#4a4a4a"/>
<rect x="1256" y="316.5" width="19" height="10.5" fill="#b2b2b2"/>
<text x="1265.5" y="325.45" font-size="10.5" fill="#0a0a0a" font-weight="normal" text-anchor="middle" letter-spacing="0.2">S</text>
<rect x="1280" y="315.5" width="21" height="12.5" fill="#4a4a4a"/>
<rect x="1281" y="316.5" width="19" height="10.5" fill="#f83030"/>
<circle cx="1290.5" cy="321.75" r="3" fill="#0a0a0a"/><path d="M1290.5 321.75v-2.500M1290.5 321.75h-2" stroke="#f83030" stroke-width="0.900"/>
<rect x="1205" y="333" width="46" height="12.5" fill="#4a4a4a"/>
<rect x="1206" y="334" width="44" height="10.5" fill="#c2c2c2"/>
<rect x="1206" y="334" width="32.56" height="10.5" fill="#6cd3f9"/>
<text x="1228" y="342.95" font-size="10.5" fill="#0a0a0a" font-weight="normal" text-anchor="middle" letter-spacing="0.2">-4.0</text>
<rect x="1255" y="333" width="46" height="12.5" fill="#4a4a4a"/>
<rect x="1256" y="334" width="44" height="10.5" fill="#c2c2c2"/>
<text x="1278" y="342.95" font-size="10.5" fill="#0a0a0a" font-weight="normal" text-anchor="middle" letter-spacing="0.2">C</text>
<rect x="1307.2" y="316" width="2.7" height="32" fill="#2a2a2a"/>
<rect x="1311" y="316" width="2.7" height="32" fill="#2a2a2a"/>
<rect x="1307.2" y="313.5" width="2.7" height="1.5" fill="#2a2a2a"/>
<rect x="1311" y="313.5" width="2.7" height="1.5" fill="#2a2a2a"/>
<rect x="1026" y="350" width="98" height="35" fill="#2f51a6"/>
<rect x="1126" y="350" width="74.5" height="35" fill="#717171"/>
<rect x="1202" y="350" width="115" height="35" fill="#717171"/>
<circle cx="1035.5" cy="358.5" r="5.800" fill="none" stroke="#dfe6f5" stroke-width="0.800"/><path d="M1032.3 357.0h6.400l-3.200 4.300z" fill="#dfe6f5"/>
<text x="1049" y="361.4" font-size="9.6" fill="#dfe6f5" font-weight="bold" text-anchor="start" letter-spacing="0.35">Lid</text>
<rect x="1128" y="353" width="70" height="13" fill="#474747"/>
<rect x="1129" y="354" width="68" height="11" fill="#c6c6c6"/>
<text x="1130.6" y="363.6" font-size="10.5" fill="#0a0a0a" font-weight="normal" text-anchor="start" letter-spacing="0.4">Master</text>
<path d="M1189 357h6.500l-3.250 5z" fill="#0a0a0a"/>
<rect x="1128" y="370" width="70" height="13" fill="#4f4f4f"/>
<rect x="1129" y="371" width="68" height="11" fill="#878787"/>
<rect x="1205" y="352.5" width="46" height="12.5" fill="#4a4a4a"/>
<rect x="1206" y="353.5" width="44" height="10.5" fill="#ffb532"/>
<text x="1228" y="362.45" font-size="10.5" fill="#0a0a0a" font-weight="bold" text-anchor="middle" letter-spacing="0.2">10</text>
<rect x="1255" y="352.5" width="21" height="12.5" fill="#4a4a4a"/>
<rect x="1256" y="353.5" width="19" height="10.5" fill="#b2b2b2"/>
<text x="1265.5" y="362.45" font-size="10.5" fill="#0a0a0a" font-weight="normal" text-anchor="middle" letter-spacing="0.2">S</text>
<rect x="1280" y="352.5" width="21" height="12.5" fill="#4a4a4a"/>
<rect x="1281" y="353.5" width="19" height="10.5" fill="#b2b2b2"/>
<circle cx="1290.5" cy="358.75" r="3" fill="#0a0a0a"/><path d="M1290.5 358.75v-2.500M1290.5 358.75h-2" stroke="#b2b2b2" stroke-width="0.900"/>
<rect x="1205" y="370" width="46" height="12.5" fill="#4a4a4a"/>
<rect x="1206" y="371" width="44" height="10.5" fill="#c2c2c2"/>
<rect x="1206" y="371" width="32.56" height="10.5" fill="#6cd3f9"/>
<text x="1228" y="379.95" font-size="10.5" fill="#0a0a0a" font-weight="normal" text-anchor="middle" letter-spacing="0.2">-3.9</text>
<rect x="1255" y="370" width="46" height="12.5" fill="#4a4a4a"/>
<rect x="1256" y="371" width="44" height="10.5" fill="#c2c2c2"/>
<text x="1278" y="379.95" font-size="10.5" fill="#0a0a0a" font-weight="normal" text-anchor="middle" letter-spacing="0.2">C</text>
<rect x="1307.2" y="353" width="2.7" height="32" fill="#2a2a2a"/>
<rect x="1311" y="353" width="2.7" height="32" fill="#2a2a2a"/>
<rect x="1307.2" y="350.5" width="2.7" height="1.5" fill="#2a2a2a"/>
<rect x="1311" y="350.5" width="2.7" height="1.5" fill="#2a2a2a"/>
<rect x="1026" y="387" width="98" height="35" fill="#2f51a6"/>
<rect x="1126" y="387" width="74.5" height="35" fill="#717171"/>
<rect x="1202" y="387" width="115" height="35" fill="#717171"/>
<circle cx="1035.5" cy="395.5" r="5.800" fill="none" stroke="#dfe6f5" stroke-width="0.800"/><path d="M1032.3 394.0h6.400l-3.200 4.300z" fill="#dfe6f5"/>
<text x="1049" y="398.4" font-size="9.6" fill="#dfe6f5" font-weight="bold" text-anchor="start" letter-spacing="0.35">Lid Verse</text>
<rect x="1128" y="390" width="70" height="13" fill="#474747"/>
<rect x="1129" y="391" width="68" height="11" fill="#c6c6c6"/>
<text x="1130.6" y="400.6" font-size="10.5" fill="#0a0a0a" font-weight="normal" text-anchor="start" letter-spacing="0.4">Master</text>
<path d="M1189 394h6.500l-3.250 5z" fill="#0a0a0a"/>
<rect x="1128" y="407" width="70" height="13" fill="#4f4f4f"/>
<rect x="1129" y="408" width="68" height="11" fill="#878787"/>
<rect x="1205" y="389.5" width="46" height="12.5" fill="#4a4a4a"/>
<rect x="1206" y="390.5" width="44" height="10.5" fill="#ffb532"/>
<text x="1228" y="399.45" font-size="10.5" fill="#0a0a0a" font-weight="bold" text-anchor="middle" letter-spacing="0.2">11</text>
<rect x="1255" y="389.5" width="21" height="12.5" fill="#4a4a4a"/>
<rect x="1256" y="390.5" width="19" height="10.5" fill="#b2b2b2"/>
<text x="1265.5" y="399.45" font-size="10.5" fill="#0a0a0a" font-weight="normal" text-anchor="middle" letter-spacing="0.2">S</text>
<rect x="1280" y="389.5" width="21" height="12.5" fill="#4a4a4a"/>
<rect x="1281" y="390.5" width="19" height="10.5" fill="#b2b2b2"/>
<circle cx="1290.5" cy="395.75" r="3" fill="#0a0a0a"/><path d="M1290.5 395.75v-2.500M1290.5 395.75h-2" stroke="#b2b2b2" stroke-width="0.900"/>
<rect x="1205" y="407" width="46" height="12.5" fill="#4a4a4a"/>
<rect x="1206" y="408" width="44" height="10.5" fill="#c2c2c2"/>
<rect x="1206" y="408" width="34.76" height="10.5" fill="#6cd3f9"/>
<text x="1228" y="416.95" font-size="10.5" fill="#0a0a0a" font-weight="normal" text-anchor="middle" letter-spacing="0.2">-2.0</text>
<rect x="1255" y="407" width="46" height="12.5" fill="#4a4a4a"/>
<rect x="1256" y="408" width="44" height="10.5" fill="#c2c2c2"/>
<text x="1278" y="416.95" font-size="10.5" fill="#0a0a0a" font-weight="normal" text-anchor="middle" letter-spacing="0.2">C</text>
<rect x="1307.2" y="390" width="2.7" height="32" fill="#2a2a2a"/>
<rect x="1311" y="390" width="2.7" height="32" fill="#2a2a2a"/>
<rect x="1307.2" y="387.5" width="2.7" height="1.5" fill="#2a2a2a"/>
<rect x="1311" y="387.5" width="2.7" height="1.5" fill="#2a2a2a"/>
<rect x="1026" y="424" width="98" height="35" fill="#ffee30"/>
<rect x="1126" y="424" width="74.5" height="35" fill="#717171"/>
<rect x="1202" y="424" width="115" height="35" fill="#717171"/>
<circle cx="1035.5" cy="432.5" r="5.800" fill="none" stroke="#3a3408" stroke-width="0.800"/><path d="M1032.3 431.0h6.400l-3.200 4.300z" fill="#3a3408"/>
<text x="1049" y="435.4" font-size="9.6" fill="#3a3408" font-weight="bold" text-anchor="start" letter-spacing="0.35">Lid Chorus</text>
<rect x="1128" y="427" width="70" height="13" fill="#474747"/>
<rect x="1129" y="428" width="68" height="11" fill="#c6c6c6"/>
<text x="1130.6" y="437.6" font-size="10.5" fill="#0a0a0a" font-weight="normal" text-anchor="start" letter-spacing="0.4">Master</text>
<path d="M1189 431h6.500l-3.250 5z" fill="#0a0a0a"/>
<rect x="1128" y="444" width="70" height="13" fill="#4f4f4f"/>
<rect x="1129" y="445" width="68" height="11" fill="#878787"/>
<rect x="1205" y="426.5" width="46" height="12.5" fill="#4a4a4a"/>
<rect x="1206" y="427.5" width="44" height="10.5" fill="#ffb532"/>
<text x="1228" y="436.45" font-size="10.5" fill="#0a0a0a" font-weight="bold" text-anchor="middle" letter-spacing="0.2">12</text>
<rect x="1255" y="426.5" width="21" height="12.5" fill="#4a4a4a"/>
<rect x="1256" y="427.5" width="19" height="10.5" fill="#b2b2b2"/>
<text x="1265.5" y="436.45" font-size="10.5" fill="#0a0a0a" font-weight="normal" text-anchor="middle" letter-spacing="0.2">S</text>
<rect x="1280" y="426.5" width="21" height="12.5" fill="#4a4a4a"/>
<rect x="1281" y="427.5" width="19" height="10.5" fill="#b2b2b2"/>
<circle cx="1290.5" cy="432.75" r="3" fill="#0a0a0a"/><path d="M1290.5 432.75v-2.500M1290.5 432.75h-2" stroke="#b2b2b2" stroke-width="0.900"/>
<rect x="1205" y="444" width="46" height="12.5" fill="#4a4a4a"/>
<rect x="1206" y="445" width="44" height="10.5" fill="#c2c2c2"/>
<rect x="1206" y="445" width="32.56" height="10.5" fill="#6cd3f9"/>
<text x="1228" y="453.95" font-size="10.5" fill="#0a0a0a" font-weight="normal" text-anchor="middle" letter-spacing="0.2">-3.8</text>
<rect x="1255" y="444" width="46" height="12.5" fill="#4a4a4a"/>
<rect x="1256" y="445" width="44" height="10.5" fill="#c2c2c2"/>
<text x="1278" y="453.95" font-size="10.5" fill="#0a0a0a" font-weight="normal" text-anchor="middle" letter-spacing="0.2">C</text>
<rect x="1307.2" y="427" width="2.7" height="32" fill="#2a2a2a"/>
<rect x="1311" y="427" width="2.7" height="32" fill="#2a2a2a"/>
<rect x="1307.2" y="424.5" width="2.7" height="1.5" fill="#2a2a2a"/>
<rect x="1311" y="424.5" width="2.7" height="1.5" fill="#2a2a2a"/>
<rect x="1026" y="461" width="98" height="35" fill="#d3a96d"/>
<rect x="1126" y="461" width="74.5" height="35" fill="#717171"/>
<rect x="1202" y="461" width="115" height="35" fill="#717171"/>
<circle cx="1035.5" cy="469.5" r="5.800" fill="none" stroke="#3a2a10" stroke-width="0.800"/><path d="M1032.3 468.0h6.400l-3.200 4.300z" fill="#3a2a10"/>
<text x="1049" y="472.4" font-size="9.6" fill="#3a2a10" font-weight="bold" text-anchor="start" letter-spacing="0.35">13 Massive</text>
<rect x="1128" y="464" width="70" height="13" fill="#474747"/>
<rect x="1129" y="465" width="68" height="11" fill="#c6c6c6"/>
<text x="1130.6" y="474.6" font-size="10.5" fill="#0a0a0a" font-weight="normal" text-anchor="start" letter-spacing="0.4">Master</text>
<path d="M1189 468h6.500l-3.250 5z" fill="#0a0a0a"/>
<rect x="1128" y="481" width="70" height="13" fill="#4f4f4f"/>
<rect x="1129" y="482" width="68" height="11" fill="#878787"/>
<rect x="1205" y="463.5" width="46" height="12.5" fill="#4a4a4a"/>
<rect x="1206" y="464.5" width="44" height="10.5" fill="#ffb532"/>
<text x="1228" y="473.45" font-size="10.5" fill="#0a0a0a" font-weight="bold" text-anchor="middle" letter-spacing="0.2">13</text>
<rect x="1255" y="463.5" width="21" height="12.5" fill="#4a4a4a"/>
<rect x="1256" y="464.5" width="19" height="10.5" fill="#b2b2b2"/>
<text x="1265.5" y="473.45" font-size="10.5" fill="#0a0a0a" font-weight="normal" text-anchor="middle" letter-spacing="0.2">S</text>
<rect x="1280" y="463.5" width="21" height="12.5" fill="#4a4a4a"/>
<rect x="1281" y="464.5" width="19" height="10.5" fill="#b2b2b2"/>
<circle cx="1290.5" cy="469.75" r="3" fill="#0a0a0a"/><path d="M1290.5 469.75v-2.500M1290.5 469.75h-2" stroke="#b2b2b2" stroke-width="0.900"/>
<rect x="1205" y="481" width="46" height="12.5" fill="#4a4a4a"/>
<rect x="1206" y="482" width="44" height="10.5" fill="#c2c2c2"/>
<rect x="1206" y="482" width="30.8" height="10.5" fill="#6cd3f9"/>
<text x="1228" y="490.95" font-size="10.5" fill="#0a0a0a" font-weight="normal" text-anchor="middle" letter-spacing="0.2">-6.1</text>
<rect x="1255" y="481" width="46" height="12.5" fill="#4a4a4a"/>
<rect x="1256" y="482" width="44" height="10.5" fill="#c2c2c2"/>
<text x="1278" y="490.95" font-size="10.5" fill="#0a0a0a" font-weight="normal" text-anchor="middle" letter-spacing="0.2">C</text>
<rect x="1307.2" y="464" width="2.7" height="32" fill="#2a2a2a"/>
<rect x="1311" y="464" width="2.7" height="32" fill="#2a2a2a"/>
<rect x="1307.2" y="461.5" width="2.7" height="1.5" fill="#2a2a2a"/>
<rect x="1311" y="461.5" width="2.7" height="1.5" fill="#2a2a2a"/>
<rect x="1026" y="498" width="98" height="17" fill="#28e01e"/>
<rect x="1126" y="498" width="74.5" height="17" fill="#717171"/>
<rect x="1202" y="498" width="115" height="17" fill="#717171"/>
<circle cx="1035.5" cy="506.5" r="5.800" fill="none" stroke="#0a3a0a" stroke-width="0.800"/><path d="M1032.5 504.5h6M1032.5 506.5h6M1032.5 508.5h6" stroke="#0a3a0a" stroke-width="0.800"/>
<text x="1048" y="509.4" font-size="9.6" fill="#0a3a0a" font-weight="bold" text-anchor="start" letter-spacing="0.35">Chorus</text>
<rect x="1128" y="501" width="70" height="12" fill="#4f4f4f"/>
<rect x="1129" y="502" width="68" height="10" fill="#878787"/>
<rect x="1205" y="500.5" width="46" height="12" fill="#4a4a4a"/>
<rect x="1206" y="501.5" width="44" height="10" fill="#ffb532"/>
<text x="1228" y="510.2" font-size="10.5" fill="#0a0a0a" font-weight="bold" text-anchor="middle" letter-spacing="0.2">14</text>
<rect x="1255" y="500.5" width="21" height="12" fill="#4a4a4a"/>
<rect x="1256" y="501.5" width="19" height="10" fill="#b2b2b2"/>
<text x="1265.5" y="510.2" font-size="10.5" fill="#0a0a0a" font-weight="normal" text-anchor="middle" letter-spacing="0.2">S</text>
<rect x="1307.2" y="501" width="2.7" height="14" fill="#2a2a2a"/>
<rect x="1311" y="501" width="2.7" height="14" fill="#2a2a2a"/>
<rect x="1307.2" y="498.5" width="2.7" height="1.5" fill="#2a2a2a"/>
<rect x="1311" y="498.5" width="2.7" height="1.5" fill="#2a2a2a"/>
<rect x="1026" y="517" width="98" height="17" fill="#28e01e"/>
<rect x="1126" y="517" width="74.5" height="17" fill="#717171"/>
<rect x="1202" y="517" width="115" height="17" fill="#717171"/>
<circle cx="1035.5" cy="525.5" r="5.800" fill="none" stroke="#0a3a0a" stroke-width="0.800"/><path d="M1032.5 523.5h6M1032.5 525.5h6M1032.5 527.5h6" stroke="#0a3a0a" stroke-width="0.800"/>
<text x="1048" y="528.4" font-size="9.6" fill="#0a3a0a" font-weight="bold" text-anchor="start" letter-spacing="0.35">Chorus 2</text>
<rect x="1128" y="520" width="70" height="12" fill="#4f4f4f"/>
<rect x="1129" y="521" width="68" height="10" fill="#878787"/>
<rect x="1205" y="519.5" width="46" height="12" fill="#4a4a4a"/>
<rect x="1206" y="520.5" width="44" height="10" fill="#ffb532"/>
<text x="1228" y="529.2" font-size="10.5" fill="#0a0a0a" font-weight="bold" text-anchor="middle" letter-spacing="0.2">16</text>
<rect x="1255" y="519.5" width="21" height="12" fill="#4a4a4a"/>
<rect x="1256" y="520.5" width="19" height="10" fill="#b2b2b2"/>
<text x="1265.5" y="529.2" font-size="10.5" fill="#0a0a0a" font-weight="normal" text-anchor="middle" letter-spacing="0.2">S</text>
<rect x="1307.2" y="520" width="2.7" height="14" fill="#2a2a2a"/>
<rect x="1311" y="520" width="2.7" height="14" fill="#2a2a2a"/>
<rect x="1307.2" y="517.5" width="2.7" height="1.5" fill="#2a2a2a"/>
<rect x="1311" y="517.5" width="2.7" height="1.5" fill="#2a2a2a"/>
<rect x="1026" y="536" width="98" height="35" fill="#f6f482"/>
<rect x="1126" y="536" width="74.5" height="35" fill="#717171"/>
<rect x="1202" y="536" width="115" height="35" fill="#717171"/>
<circle cx="1035.5" cy="544.5" r="5.800" fill="none" stroke="#3a3a10" stroke-width="0.800"/><path d="M1032.3 543.0h6.400l-3.200 4.300z" fill="#3a3a10"/>
<text x="1049" y="547.4" font-size="9.6" fill="#3a3a10" font-weight="bold" text-anchor="start" letter-spacing="0.35">19 Sylenth 3</text>
<rect x="1128" y="539" width="70" height="13" fill="#474747"/>
<rect x="1129" y="540" width="68" height="11" fill="#c6c6c6"/>
<text x="1130.6" y="549.6" font-size="10.5" fill="#0a0a0a" font-weight="normal" text-anchor="start" letter-spacing="0.4">Master</text>
<path d="M1189 543h6.500l-3.250 5z" fill="#0a0a0a"/>
<rect x="1128" y="556" width="70" height="13" fill="#4f4f4f"/>
<rect x="1129" y="557" width="68" height="11" fill="#878787"/>
<rect x="1205" y="538.5" width="46" height="12.5" fill="#4a4a4a"/>
<rect x="1206" y="539.5" width="44" height="10.5" fill="#ffb532"/>
<text x="1228" y="548.45" font-size="10.5" fill="#0a0a0a" font-weight="bold" text-anchor="middle" letter-spacing="0.2">19</text>
<rect x="1255" y="538.5" width="21" height="12.5" fill="#4a4a4a"/>
<rect x="1256" y="539.5" width="19" height="10.5" fill="#b2b2b2"/>
<text x="1265.5" y="548.45" font-size="10.5" fill="#0a0a0a" font-weight="normal" text-anchor="middle" letter-spacing="0.2">S</text>
<rect x="1280" y="538.5" width="21" height="12.5" fill="#4a4a4a"/>
<rect x="1281" y="539.5" width="19" height="10.5" fill="#b2b2b2"/>
<circle cx="1290.5" cy="544.75" r="3" fill="#0a0a0a"/><path d="M1290.5 544.75v-2.500M1290.5 544.75h-2" stroke="#b2b2b2" stroke-width="0.900"/>
<rect x="1205" y="556" width="46" height="12.5" fill="#4a4a4a"/>
<rect x="1206" y="557" width="44" height="10.5" fill="#c2c2c2"/>
<rect x="1206" y="557" width="35.64" height="10.5" fill="#6cd3f9"/>
<text x="1228" y="565.95" font-size="10.5" fill="#0a0a0a" font-weight="normal" text-anchor="middle" letter-spacing="0.2">-1.2</text>
<rect x="1255" y="556" width="46" height="12.5" fill="#4a4a4a"/>
<rect x="1256" y="557" width="44" height="10.5" fill="#c2c2c2"/>
<text x="1278" y="565.95" font-size="10.5" fill="#0a0a0a" font-weight="normal" text-anchor="middle" letter-spacing="0.2">C</text>
<rect x="1307.2" y="539" width="2.7" height="32" fill="#2a2a2a"/>
<rect x="1311" y="539" width="2.7" height="32" fill="#2a2a2a"/>
<rect x="1307.2" y="536.5" width="2.7" height="1.5" fill="#2a2a2a"/>
<rect x="1311" y="536.5" width="2.7" height="1.5" fill="#2a2a2a"/>
<rect x="1026" y="573" width="98" height="13" fill="#ffa62c"/>
<rect x="1126" y="573" width="74.5" height="13" fill="#717171"/>
<rect x="1202" y="573" width="115" height="13" fill="#717171"/>
<circle cx="1035.5" cy="581.5" r="5.800" fill="none" stroke="#3a2408" stroke-width="0.800"/><path d="M1032.3 580.0h6.400l-3.200 4.300z" fill="#3a2408"/>
<text x="1049" y="584.4" font-size="9.6" fill="#3a2408" font-weight="bold" text-anchor="start" letter-spacing="0.35">20 Massive</text>
<rect x="1128" y="576" width="70" height="13" fill="#474747"/>
<rect x="1129" y="577" width="68" height="11" fill="#c6c6c6"/>
<text x="1130.6" y="586.6" font-size="10.5" fill="#0a0a0a" font-weight="normal" text-anchor="start" letter-spacing="0.4">Master</text>
<path d="M1189 580h6.500l-3.250 5z" fill="#0a0a0a"/>
<rect x="1205" y="575.5" width="46" height="12.5" fill="#4a4a4a"/>
<rect x="1206" y="576.5" width="44" height="10.5" fill="#ffb532"/>
<text x="1228" y="585.45" font-size="10.5" fill="#0a0a0a" font-weight="bold" text-anchor="middle" letter-spacing="0.2">20</text>
<rect x="1255" y="575.5" width="21" height="12.5" fill="#4a4a4a"/>
<rect x="1256" y="576.5" width="19" height="10.5" fill="#b2b2b2"/>
<text x="1265.5" y="585.45" font-size="10.5" fill="#0a0a0a" font-weight="normal" text-anchor="middle" letter-spacing="0.2">S</text>
<rect x="1280" y="575.5" width="21" height="12.5" fill="#4a4a4a"/>
<rect x="1281" y="576.5" width="19" height="10.5" fill="#b2b2b2"/>
<circle cx="1290.5" cy="581.75" r="3" fill="#0a0a0a"/><path d="M1290.5 581.75v-2.500M1290.5 581.75h-2" stroke="#b2b2b2" stroke-width="0.900"/>
<rect x="1307.2" y="576" width="2.7" height="10" fill="#2a2a2a"/>
<rect x="1311" y="576" width="2.7" height="10" fill="#2a2a2a"/>
<rect x="1307.2" y="573.5" width="2.7" height="1.5" fill="#2a2a2a"/>
<rect x="1311" y="573.5" width="2.7" height="1.5" fill="#2a2a2a"/>
<rect x="1026" y="588" width="98" height="18" fill="#f6f27a"/>
<rect x="1126" y="588" width="74.5" height="18" fill="#717171"/>
<rect x="1202" y="588" width="115" height="18" fill="#717171"/>
<circle cx="1035.5" cy="597.0" r="5.800" fill="none" stroke="#3a3a10" stroke-width="0.800"/><path d="M1033.7 594.0v6l4.600-3z" fill="#3a3a10"/>
<text x="1049" y="599.9" font-size="9.6" fill="#3a3a10" font-weight="bold" text-anchor="start" letter-spacing="0.35">A Reverb</text>
<rect x="1128" y="591" width="70" height="13" fill="#4f4f4f"/>
<rect x="1129" y="592" width="68" height="11" fill="#878787"/>
<rect x="1205" y="590.5" width="46" height="13" fill="#4a4a4a"/>
<rect x="1206" y="591.5" width="44" height="11" fill="#ffb532"/>
<text x="1228" y="600.7" font-size="10.5" fill="#0a0a0a" font-weight="bold" text-anchor="middle" letter-spacing="0.2">A</text>
<rect x="1255" y="590.5" width="17" height="13" fill="#4a4a4a"/>
<rect x="1256" y="591.5" width="15" height="11" fill="#b2b2b2"/>
<text x="1263.5" y="600.7" font-size="10.5" fill="#0a0a0a" font-weight="normal" text-anchor="middle" letter-spacing="0.2">S</text>
<rect x="1276" y="590.5" width="25" height="13" fill="#4a4a4a"/>
<rect x="1277" y="591.5" width="23" height="11" fill="#ffb532"/>
<text x="1288.5" y="600.7" font-size="10.5" fill="#0a0a0a" font-weight="normal" text-anchor="middle" letter-spacing="0.2">Post</text>
<rect x="1307.2" y="591" width="2.7" height="15" fill="#2a2a2a"/>
<rect x="1311" y="591" width="2.7" height="15" fill="#2a2a2a"/>
<rect x="1307.2" y="588.5" width="2.7" height="1.5" fill="#2a2a2a"/>
<rect x="1311" y="588.5" width="2.7" height="1.5" fill="#2a2a2a"/>
<rect x="1026" y="608" width="98" height="17" fill="#cf2f6d"/>
<rect x="1126" y="608" width="74.5" height="17" fill="#717171"/>
<rect x="1202" y="608" width="115" height="17" fill="#717171"/>
<circle cx="1035.5" cy="616.5" r="5.800" fill="none" stroke="#f2a0c0" stroke-width="0.800" stroke-dasharray="1.500 1"/><path d="M1033.7 613.5v6l4.600-3z" fill="#f2a0c0"/>
<text x="1049" y="619.4" font-size="9.6" fill="#f8dce8" font-weight="bold" text-anchor="start" letter-spacing="0.35">B Delay</text>
<rect x="1128" y="611" width="70" height="12" fill="#4f4f4f"/>
<rect x="1129" y="612" width="68" height="10" fill="#878787"/>
<rect x="1205" y="610.5" width="46" height="12" fill="#4a4a4a"/>
<rect x="1206" y="611.5" width="44" height="10" fill="#a9a9a9"/>
<text x="1228" y="620.2" font-size="10.5" fill="#0a0a0a" font-weight="bold" text-anchor="middle" letter-spacing="0.2">B</text>
<rect x="1255" y="610.5" width="17" height="12" fill="#4a4a4a"/>
<rect x="1256" y="611.5" width="15" height="10" fill="#b2b2b2"/>
<text x="1263.5" y="620.2" font-size="10.5" fill="#0a0a0a" font-weight="normal" text-anchor="middle" letter-spacing="0.2">S</text>
<rect x="1276" y="610.5" width="25" height="12" fill="#4a4a4a"/>
<rect x="1277" y="611.5" width="23" height="10" fill="#ffb532"/>
<text x="1288.5" y="620.2" font-size="10.5" fill="#0a0a0a" font-weight="normal" text-anchor="middle" letter-spacing="0.2">Post</text>
<rect x="1307.2" y="611" width="2.7" height="14" fill="#2a2a2a"/>
<rect x="1311" y="611" width="2.7" height="14" fill="#2a2a2a"/>
<rect x="1307.2" y="608.5" width="2.7" height="1.5" fill="#2a2a2a"/>
<rect x="1311" y="608.5" width="2.7" height="1.5" fill="#2a2a2a"/>
<rect x="1026" y="627" width="98" height="17" fill="#fbfbfb"/>
<rect x="1126" y="627" width="74.5" height="17" fill="#717171"/>
<rect x="1202" y="627" width="115" height="17" fill="#717171"/>
<circle cx="1035.5" cy="635.5" r="5.800" fill="none" stroke="#222" stroke-width="0.800"/><path d="M1033.7 632.5v6l4.600-3z" fill="#222"/>
<text x="1051" y="638.4" font-size="9.6" fill="#222" font-weight="bold" text-anchor="start" letter-spacing="0.35">Master</text>
<rect x="1128" y="629.5" width="70" height="13" fill="#474747"/>
<rect x="1129" y="630.5" width="68" height="11" fill="#c6c6c6"/>
<text x="1130.6" y="640.1" font-size="10.5" fill="#0a0a0a" font-weight="normal" text-anchor="start" letter-spacing="0.4">ii 1/2</text>
<path d="M1189 633.5h6.500l-3.250 5z" fill="#0a0a0a"/>
<rect x="1205" y="629.5" width="46" height="12" fill="#4a4a4a"/>
<rect x="1206" y="630.5" width="44" height="10" fill="#c2c2c2"/>
<rect x="1206" y="630.5" width="36.52" height="10" fill="#6cd3f9"/>
<text x="1228" y="639.2" font-size="10.5" fill="#0a0a0a" font-weight="normal" text-anchor="middle" letter-spacing="0.2">0</text>
<rect x="1255" y="629.5" width="46" height="12" fill="#4a4a4a"/>
<rect x="1256" y="630.5" width="44" height="10" fill="#c2c2c2"/>
<rect x="1256" y="630.5" width="36.52" height="10" fill="#3f9cf5"/>
<text x="1278" y="639.2" font-size="10.5" fill="#0a0a0a" font-weight="normal" text-anchor="middle" letter-spacing="0.2">0</text>
<rect x="1307.2" y="630" width="2.7" height="14" fill="#2a2a2a"/>
<rect x="1311" y="630" width="2.7" height="14" fill="#2a2a2a"/>
<rect x="1307.2" y="627.5" width="2.7" height="1.5" fill="#2a2a2a"/>
<rect x="1311" y="627.5" width="2.7" height="1.5" fill="#2a2a2a"/>
<rect x="1026" y="586" width="291" height="2" fill="#515151"/>
<path d="M1327 441V155.500a3.500 3.500 0 0 1 7 0V441z" fill="#262626"/>
<circle cx="1333.500" cy="48.600" r="8.600" fill="#555"/>
<rect x="1328.5" y="44" width="8" height="1.8" fill="#ffb532"/>
<rect x="1328.5" y="48" width="8" height="1.8" fill="#ffb532"/>
<rect x="1328.5" y="52" width="8" height="1.8" fill="#ffb532"/>
<circle cx="1333.500" cy="71.700" r="8.600" fill="#555"/>
<rect x="1329.5" y="65.5" width="1.6" height="12.5" fill="#6c6c6c"/>
<rect x="1333" y="65.5" width="1.6" height="12.5" fill="#6c6c6c"/>
<circle cx="1330.800" cy="571.5" r="6.600" fill="#ffb532"/>
<text x="1331" y="573.9" font-size="6.5" fill="#222" font-weight="normal" text-anchor="middle">I·O</text>
<circle cx="1330.800" cy="590.5" r="6.600" fill="#ffb532"/>
<text x="1331" y="592.9" font-size="6.5" fill="#222" font-weight="normal" text-anchor="middle">R</text>
<circle cx="1330.800" cy="609.5" r="6.600" fill="#ffb532"/>
<text x="1331" y="611.9" font-size="6.5" fill="#222" font-weight="normal" text-anchor="middle">M</text>
<circle cx="1330.800" cy="628.5" r="6.600" fill="#0a0a0a"/>
<text x="1331" y="630.9" font-size="6.5" fill="#aaa" font-weight="normal" text-anchor="middle">D</text>
<circle cx="3.500" cy="48.400" r="9.400" fill="#5b5b5b"/><path d="M-3 44.700h11q1.600 0.200 0.900 1.800l-4.600 7.800q-1 1.300-2 0l-5.300-8z" fill="#6f6f6f"/>
<circle cx="3" cy="651.300" r="9.400" fill="#5b5b5b"/><path d="M-4 648.500q2.500-2.500 5 0t5 0l1.500-1.200M-4 654q2.500-2.500 5 0t5 0l1.500-1.200" stroke="#6f6f6f" stroke-width="2" fill="none"/>
<circle cx="3" cy="679.500" r="9.400" fill="#5b5b5b"/><path d="M-3 674.500l10 4.600q0.800 0.600 0 1.200l-10 4z" fill="#6f6f6f"/>
<path d="M21 684V672a3 3 0 0 1 3-3H927a3 3 0 0 1 3 3V684z" fill="#525252"/>
<rect x="24" y="672" width="903" height="12" fill="#ff6647"/>
<text x="31.5" y="682.5" font-size="10.5" fill="#0a0a0a" font-weight="normal" text-anchor="start" letter-spacing="0.15">Media files are missing. Please click here to learn more.</text>
<path d="M938 684V672a3 3 0 0 1 3-3H1140a3 3 0 0 1 3 3V684z" fill="#525252"/>
<rect x="941" y="672" width="199.5" height="12" fill="#878787"/>
<path d="M1152 684V672a3 3 0 0 1 3-3H1314a3 3 0 0 1 3 3V684z" fill="#5a5a5a"/>
<text x="1156.5" y="684.5" font-size="10.5" fill="#0a0a0a" font-weight="normal" text-anchor="start">Piano</text>
<rect x="1187" y="671.5" width="13" height="12.5" fill="#7e7e7e"/>
<rect x="1188" y="674.5" width="12" height="10" fill="#2c2c2c"/>
<rect x="1202" y="671.5" width="26" height="12.5" fill="#7e7e7e"/>
<rect x="1207" y="674" width="16" height="10" fill="#2c2c2c"/>
<rect x="1230" y="671.5" width="41.5" height="12.5" fill="#7e7e7e"/>
<rect x="1235" y="674" width="31.5" height="10" fill="#2c2c2c"/>
<rect x="1273" y="671.5" width="12" height="12.5" fill="#7e7e7e"/>
<rect x="1275" y="673" width="8" height="11" fill="#8c8c8c"/>
<rect x="1287" y="671.5" width="26" height="12.5" fill="#7e7e7e"/>
<rect x="1292" y="674" width="16" height="10" fill="#2c2c2c"/>
<circle cx="1336" cy="678" r="11" fill="none" stroke="#5c5c5c" stroke-width="2.500"/>
<path d="M728 80l5 4.500" stroke="#fff" stroke-width="3.400" stroke-linecap="round"/><circle cx="724.600" cy="76.500" r="5.200" fill="#888" fill-opacity="0.3" stroke="#fff" stroke-width="3"/><circle cx="724.600" cy="76.500" r="5.100" fill="none" stroke="#0a0a0a" stroke-width="1.200"/><path d="M728.400 80.200l4.600 4.200" stroke="#0a0a0a" stroke-width="1.400" stroke-linecap="round"/>
</svg>
</body></html>
